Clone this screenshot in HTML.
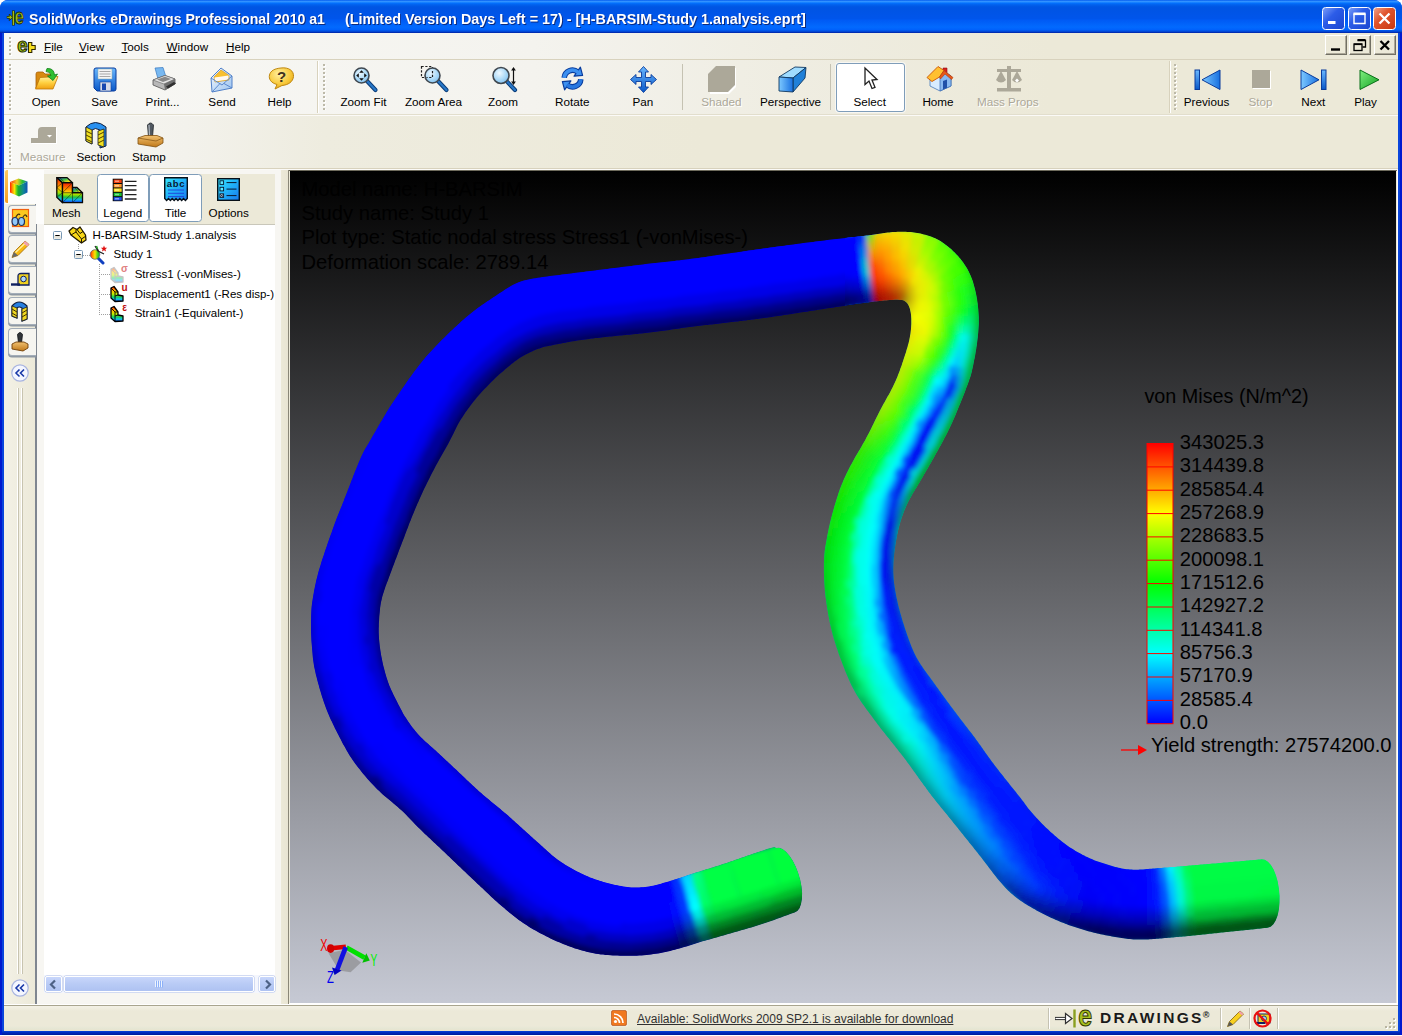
<!DOCTYPE html>
<html><head><meta charset="utf-8"><title>eDrawings</title>
<style>
html,body{margin:0;padding:0}
body{width:1402px;height:1036px;overflow:hidden;position:relative;background:#fff;font-family:"Liberation Sans",sans-serif;font-size:11.7px;color:#000}
.a{position:absolute}
svg{position:absolute;overflow:visible}
#frame{position:absolute;left:0;top:0;width:1402px;height:1035px;border-radius:8px 8px 0 0;background:linear-gradient(#0a45dc 0,#0a45dc 1031px,#0030c8 1032px,#001898 1035px)}
#frameL{position:absolute;left:0;top:20px;width:2px;height:1015px;background:#0019cf}#frameR{position:absolute;left:1400px;top:20px;width:2px;height:1015px;background:#0019cf}
#titlebar{position:absolute;left:0;top:0;width:1402px;height:33px;border-radius:8px 8px 0 0;background:linear-gradient(#0058ee 0%,#3593ff 4%,#288eff 6%,#127dff 8%,#036ffc 10%,#0262ee 14%,#0057e5 20%,#0054e3 24%,#0055eb 56%,#005bf5 62%,#026afe 82%,#0061fc 90%,#0144d0 96%,#001ea0 100%)}
#title{position:absolute;left:28.5px;top:10px;font-weight:bold;font-size:15px;line-height:17px;color:#fff;white-space:nowrap;text-shadow:1px 1px 0 #0a2a80}
#title span{display:inline-block;transform-origin:0 50%}
.tb{top:7px;width:23px;height:23px;box-sizing:border-box;border:1px solid #fff;border-radius:3.5px}
#client{position:absolute;left:4px;top:33px;width:1394px;height:998px;background:#ece9d8}
.lbl{position:absolute;white-space:nowrap;transform:translateX(-50%);line-height:14px}
.dis{color:#aca899}
.grip{position:absolute;width:3px;background-image:linear-gradient(#bcb9a8 50%,transparent 50%),linear-gradient(#fff 50%,transparent 50%);background-size:2px 4px,2px 4px;background-position:0 0,1px 1px;background-repeat:repeat-y}
u{text-decoration:underline}
</style></head><body>
<div id="frame"></div><div id="frameL"></div><div id="frameR"></div>
<div id="titlebar">
<svg class="a" style="left:6px;top:9px" width="20" height="18" viewBox="0 0 20 18"><path d="M0.8,8.3H5" stroke="#1a2400" stroke-width="2.6"/><path d="M3.3,5L6.5,8.3L3.3,11.6Z" fill="#a4c018" stroke="#1a2400" stroke-width="0.8"/><path d="M1.2,8.3H4.5" stroke="#a4c018" stroke-width="1.2"/><path d="M7.4,1.5V16.5" stroke="#1a2400" stroke-width="2.8"/><path d="M7.4,2V16" stroke="#a4c018" stroke-width="1.4"/><text transform="translate(8.6,15.3) scale(0.760,1)" font-family="Liberation Sans, sans-serif" font-weight="bold" font-size="22.5" fill="#a4c018" stroke="#1a2400" stroke-width="0.9">e</text></svg>
<div class="a tb" style="left:1322px;background:linear-gradient(135deg,#7a9cf8 0%,#2c5ce8 40%,#1c46d0 100%)"><svg width="21" height="21" viewBox="0 0 21 21"><rect x="5" y="13" width="7.5" height="3" fill="#fff"/></svg></div>
<div class="a tb" style="left:1348px;background:linear-gradient(135deg,#7a9cf8 0%,#2c5ce8 40%,#1c46d0 100%)"><svg width="21" height="21" viewBox="0 0 21 21"><path d="M5,6.2H16V15.5H5Z" fill="none" stroke="#fff" stroke-width="1.4"/><path d="M4.5,5.8H16.5" stroke="#fff" stroke-width="2.6"/></svg></div>
<div class="a tb" style="left:1373px;background:linear-gradient(135deg,#f0a088 0%,#e0542c 40%,#c83810 100%)"><svg width="21" height="21" viewBox="0 0 21 21"><path d="M5.5,5.5L15.5,15.5M15.5,5.5L5.5,15.5" stroke="#fff" stroke-width="2.3"/></svg></div>

<div id="title"><span style="transform:scaleX(0.94)">SolidWorks eDrawings Professional 2010 a1</span><span style="position:absolute;left:316px;transform:scaleX(0.959)">(Limited Version Days Left = 17) - [H-BARSIM-Study 1.analysis.eprt]</span></div></div>
<div id="client">
<svg width="0" height="0" style="position:absolute"><defs>
<linearGradient id="gFold" x1="0" y1="0" x2="0" y2="1"><stop offset="0" stop-color="#fff3a0"/><stop offset="0.5" stop-color="#ffd040"/><stop offset="1" stop-color="#f0a010"/></linearGradient>
<linearGradient id="gBlue" x1="0" y1="0" x2="0" y2="1"><stop offset="0" stop-color="#6ab8ff"/><stop offset="1" stop-color="#0a58c8"/></linearGradient>
<linearGradient id="gBlueH" x1="0" y1="0" x2="1" y2="0"><stop offset="0" stop-color="#7cc8ff"/><stop offset="1" stop-color="#1870e0"/></linearGradient>
<radialGradient id="gLens" cx="0.4" cy="0.35" r="0.7"><stop offset="0" stop-color="#eef8ff"/><stop offset="0.55" stop-color="#b0dcf8"/><stop offset="1" stop-color="#80c0f0"/></radialGradient>
<radialGradient id="gHelp" cx="0.4" cy="0.3" r="0.8"><stop offset="0" stop-color="#fff0a0"/><stop offset="0.6" stop-color="#f8c838"/><stop offset="1" stop-color="#d89810"/></radialGradient>
<linearGradient id="gGreen" x1="0" y1="0" x2="1" y2="1"><stop offset="0" stop-color="#80f080"/><stop offset="1" stop-color="#10a020"/></linearGradient>
<linearGradient id="gEnv" x1="0" y1="0" x2="1" y2="1"><stop offset="0" stop-color="#f4f9ff"/><stop offset="1" stop-color="#9cc4f0"/></linearGradient>
<linearGradient id="gWood" x1="0" y1="0" x2="0" y2="1"><stop offset="0" stop-color="#f0c070"/><stop offset="1" stop-color="#c07818"/></linearGradient>
<linearGradient id="gRain" x1="0" y1="0" x2="0" y2="1"><stop offset="0" stop-color="#ff2000"/><stop offset="0.3" stop-color="#ffc000"/><stop offset="0.5" stop-color="#c0f000"/><stop offset="0.7" stop-color="#10d060"/><stop offset="0.85" stop-color="#10c0f0"/><stop offset="1" stop-color="#1040e0"/></linearGradient>
<linearGradient id="gRainH" x1="0" y1="0" x2="1" y2="0"><stop offset="0" stop-color="#ff2000"/><stop offset="0.25" stop-color="#ff9000"/><stop offset="0.5" stop-color="#f8e800"/><stop offset="0.8" stop-color="#40c820"/><stop offset="1" stop-color="#10a040"/></linearGradient>
<linearGradient id="gTop" x1="0" y1="0" x2="1" y2="1"><stop offset="0" stop-color="#2040e0"/><stop offset="0.45" stop-color="#40c040"/><stop offset="0.75" stop-color="#f0e020"/><stop offset="1" stop-color="#f07010"/></linearGradient>
<linearGradient id="gRainH2" x1="0" y1="0" x2="1" y2="0"><stop offset="0" stop-color="#ff3010"/><stop offset="0.4" stop-color="#f0d020"/><stop offset="0.7" stop-color="#30c030"/><stop offset="1" stop-color="#1080a0"/></linearGradient>
<linearGradient id="gTeal" x1="0" y1="0" x2="1" y2="0"><stop offset="0" stop-color="#18a838"/><stop offset="0.5" stop-color="#108890"/><stop offset="1" stop-color="#1050b8"/></linearGradient>
<linearGradient id="gMesh" x1="0" y1="0" x2="0" y2="1"><stop offset="0" stop-color="#f02000"/><stop offset="0.25" stop-color="#ff7000"/><stop offset="0.45" stop-color="#ffc800"/><stop offset="0.6" stop-color="#a0e000"/><stop offset="0.72" stop-color="#20c040"/><stop offset="0.86" stop-color="#10b0f0"/><stop offset="1" stop-color="#1030e0"/></linearGradient>
<linearGradient id="gCy" x1="0" y1="0" x2="1" y2="1"><stop offset="0" stop-color="#38e8ff"/><stop offset="0.5" stop-color="#20b0f8"/><stop offset="1" stop-color="#1878f0"/></linearGradient>
</defs></svg>
<div class="a" style="left:0;top:0;width:1394px;height:26px;background:linear-gradient(90deg,#f8f8f5 0%,#f4f3ee 38%,#efede2 56%,#ece9d8 75%)"></div>
<div class="a" style="left:0;top:26px;width:1394px;height:1px;background:#d8d2bd"></div>
<div class="grip" style="left:5px;top:4px;height:20px"></div>
<svg class="a" style="left:13px;top:5px" width="20" height="16" viewBox="0 0 20 16" ><path d="M11.500,4.500h3.300v3h3.400v4h-3.400v3h-3.300z" fill="#f8e020" stroke="#302800" stroke-width="1.100"/><text transform="translate(0.300,14) scale(0.900,1)" font-family="Liberation Sans, sans-serif" font-weight="bold" font-size="21" fill="#a8c818" stroke="#202800" stroke-width="1.100">e</text></svg>
<div class="a" style="left:40px;top:6.5px;line-height:14px;white-space:nowrap"><u>F</u>ile</div>
<div class="a" style="left:75px;top:6.5px;line-height:14px;white-space:nowrap"><u>V</u>iew</div>
<div class="a" style="left:117.5px;top:6.5px;line-height:14px;white-space:nowrap"><u>T</u>ools</div>
<div class="a" style="left:162.5px;top:6.5px;line-height:14px;white-space:nowrap"><u>W</u>indow</div>
<div class="a" style="left:222px;top:6.5px;line-height:14px;white-space:nowrap"><u>H</u>elp</div>
<div class="a" style="left:1321px;top:2px;width:22px;height:20px;box-sizing:border-box;background:#ece9d8;border:1px solid;border-color:#fff #716f64 #716f64 #fff;box-shadow:inset -1px -1px 0 #aca899"><svg width="20" height="18" viewBox="1 1 20 18"><path d="M6,14.500h9" stroke="#000" stroke-width="2.400"/></svg></div>
<div class="a" style="left:1345px;top:2px;width:22px;height:20px;box-sizing:border-box;background:#ece9d8;border:1px solid;border-color:#fff #716f64 #716f64 #fff;box-shadow:inset -1px -1px 0 #aca899"><svg width="20" height="18" viewBox="1 1 20 18"><path d="M8.500,5.500h8v6.500h-3" fill="none" stroke="#000" stroke-width="1.300"/><path d="M8.500,4.800h8" stroke="#000" stroke-width="1.600"/><rect x="5" y="9" width="8" height="6.500" fill="#ece9d8" stroke="#000" stroke-width="1.300"/><path d="M5,9.300h8" stroke="#000" stroke-width="1.600"/></svg></div>
<div class="a" style="left:1370px;top:2px;width:22px;height:20px;box-sizing:border-box;background:#ece9d8;border:1px solid;border-color:#fff #716f64 #716f64 #fff;box-shadow:inset -1px -1px 0 #aca899"><svg width="20" height="18" viewBox="1 1 20 18"><path d="M6.500,6l8.500,8.500M15,6l-8.500,8.500" stroke="#000" stroke-width="2.300"/></svg></div>
<div class="a" style="left:0;top:27px;width:1394px;height:54px;background:linear-gradient(90deg,#f8f8f5 0%,#f4f3ee 38%,#efede2 56%,#ece9d8 75%)"></div>
<div class="a" style="left:0;top:81px;width:1394px;height:1px;background:#e2decd"></div><div class="a" style="left:0;top:82px;width:1394px;height:1px;background:#fbfaf7"></div>
<div class="grip" style="left:5px;top:31px;height:46px"></div>
<div class="grip" style="left:319px;top:31px;height:46px"></div>
<div class="grip" style="left:1170px;top:31px;height:46px"></div>
<div class="a" style="left:313px;top:28px;width:1px;height:52px;background:#d8d2bd"></div><div class="a" style="left:314px;top:28px;width:1px;height:52px;background:#fff"></div>
<div class="a" style="left:1165px;top:28px;width:1px;height:52px;background:#d8d2bd"></div><div class="a" style="left:1166px;top:28px;width:1px;height:52px;background:#fff"></div>
<div class="a" style="left:678px;top:31px;width:1px;height:46px;background:#c5c2b2"></div>
<div class="a" style="left:826px;top:31px;width:1px;height:46px;background:#c5c2b2"></div>
<div class="a" style="left:832px;top:30px;width:69px;height:49px;box-sizing:border-box;background:#fff;border:1px solid #7f9db9;border-radius:3px;box-shadow:0 0 0 1px rgba(255,255,255,0.6)"></div>
<svg class="a" style="left:30px;top:34px" width="25" height="24" viewBox="0 0 25 24" ><path d="M2,21 L2,7 Q2,5 4,5 L9,5 L11,7 L19,7 Q20,7 20,9 L20,11 L6,11 Z" fill="#d88a10" stroke="#a86008" stroke-width="0.8"/>
<path d="M1.5,22 L6,10.5 L24,9.5 L19,22 Z" fill="url(#gFold)" stroke="#c07808" stroke-width="0.8"/>
<path d="M13,1.5 Q20,1 20.5,8 L23.5,7 L19,13.5 L13.5,9 L17,8.5 Q16.5,4.5 12,4.5 Z" fill="#30c030" stroke="#108018" stroke-width="0.8"/></svg>
<div class="lbl" style="left:42px;top:62px">Open</div>
<svg class="a" style="left:89px;top:34px" width="24" height="25" viewBox="0 0 24 25" ><path d="M1,3 Q1,1 3,1 L21,1 Q23,1 23,3 L23,22 Q23,24 21,24 L4,24 L1,21 Z" fill="url(#gBlue)" stroke="#0a3c9c" stroke-width="1"/>
<rect x="5" y="2" width="14" height="10" fill="#f4f4f4" stroke="#8aa" stroke-width="0.5"/>
<path d="M6.5,4.5H17.5M6.5,7H17.5M6.5,9.5H17.5" stroke="#a8a8a8" stroke-width="1"/>
<rect x="7" y="15" width="11" height="9" fill="#d8dce8" stroke="#0a3c9c" stroke-width="0.6"/><rect x="9" y="16.5" width="4" height="6.5" fill="#1848b0"/></svg>
<div class="lbl" style="left:100.5px;top:62px">Save</div>
<svg class="a" style="left:148px;top:34px" width="25" height="25" viewBox="0 0 25 25" ><path d="M3,1 L11,0.5 L14,10 L6,12 Z" fill="#78b8f0" stroke="#3878c0" stroke-width="0.7"/>
<path d="M1,13 L13,8.5 L23,12 L23,17 L13,23 L1,18 Z" fill="#b8b8b8" stroke="#505050" stroke-width="0.8"/>
<path d="M1,13 L13,8.5 L23,12 L12,17 Z" fill="#e4e4e4" stroke="#606060" stroke-width="0.6"/>
<path d="M12,17 L23,12 L23,17 L13,23 Z" fill="#707070"/>
<path d="M14,19.5 L22,15 L24,16.5 L16,21.5 Z" fill="#303030"/>
<path d="M5,12.5 L13,9.8 L19,12 L11,15 Z" fill="#888"/></svg>
<div class="lbl" style="left:158.5px;top:62px">Print...</div>
<svg class="a" style="left:206px;top:34px" width="24" height="26" viewBox="0 0 24 26" ><path d="M1,11 L11,1 L22,9 L22,21 L2,25 Z" fill="url(#gEnv)" stroke="#5080c8" stroke-width="1"/>
<path d="M4,10 L11,3 L19,8.5 L19,13 L5,15 Z" fill="#f8c030" stroke="#d09010" stroke-width="0.6"/>
<path d="M4.5,10.5 L18.5,8.5 L18.5,12.5 L5,14.5 Z" fill="#fff8f0"/>
<path d="M1,11 L12,18 L22,9 M2,25 L10,16.5 M22,21 L14,16.5" fill="none" stroke="#5080c8" stroke-width="0.9"/></svg>
<div class="lbl" style="left:218px;top:62px">Send</div>
<svg class="a" style="left:264px;top:34px" width="27" height="23" viewBox="0 0 27 23" ><path d="M13,1 C21,0 26,4 25.5,9.5 C25,15 20,18 14,18.5 L7,22 L9,17.5 C3,16 0.5,12 1.5,8 C2.5,3.5 7,1.5 13,1 Z" fill="url(#gHelp)" stroke="#c08810" stroke-width="1"/>
<text x="13.5" y="15" font-family="Liberation Sans, sans-serif" font-weight="bold" font-size="15" text-anchor="middle" fill="#403020">?</text></svg>
<div class="lbl" style="left:275.5px;top:62px">Help</div>
<svg class="a" style="left:347px;top:32px" width="28" height="28" viewBox="0 0 28 28" ><path d="M15.8,15.8L24.5,25" stroke="#0a3c78" stroke-width="4.2" stroke-linecap="round"/><path d="M15.8,15.8L24.5,25" stroke="#2878c8" stroke-width="2.2" stroke-linecap="round"/><circle cx="10.5" cy="10.5" r="7.5" fill="url(#gLens)" stroke="#404850" stroke-width="1.6"/><path d="M10.5,5.2l-2.3,2.6h4.6zM10.5,15.8l-2.3,-2.6h4.6zM5.2,10.5l2.6,-2.3v4.6zM15.8,10.5l-2.6,-2.3v4.6z" fill="#101010"/></svg>
<div class="lbl" style="left:359.5px;top:62px">Zoom Fit</div>
<svg class="a" style="left:416px;top:32px" width="29" height="28" viewBox="0 0 29 28" ><path d="M1.5,1.5H12.5V12.5H1.5Z" fill="none" stroke="#202020" stroke-width="1.2" stroke-dasharray="2.2,1.6"/><path d="M17.8,15.8L26.5,25" stroke="#0a3c78" stroke-width="4.2" stroke-linecap="round"/><path d="M17.8,15.8L26.5,25" stroke="#2878c8" stroke-width="2.2" stroke-linecap="round"/><circle cx="12.5" cy="10.5" r="7.5" fill="url(#gLens)" stroke="#404850" stroke-width="1.6"/><path d="M12.5,6V12.5H6.5" fill="none" stroke="#202020" stroke-width="1.2" stroke-dasharray="2.2,1.6"/></svg>
<div class="lbl" style="left:429.5px;top:62px">Zoom Area</div>
<svg class="a" style="left:486px;top:32px" width="28" height="28" viewBox="0 0 28 28" ><path d="M16.6,16.1L25,25" stroke="#0a3c78" stroke-width="4.2" stroke-linecap="round"/><path d="M16.6,16.1L25,25" stroke="#2878c8" stroke-width="2.2" stroke-linecap="round"/><circle cx="11" cy="10.5" r="8" fill="url(#gLens)" stroke="#404850" stroke-width="1.6"/><path d="M23.5,4V18" stroke="#101010" stroke-width="1.2"/><path d="M23.5,2l-2.4,3.4h4.8zM23.5,20l-2.4,-3.4h4.8z" fill="#101010"/></svg>
<div class="lbl" style="left:499px;top:62px">Zoom</div>
<svg class="a" style="left:555px;top:33px" width="28" height="26" viewBox="0 0 28 26" ><g fill="none" stroke-linecap="butt"><path d="M5.2,11.8A8.3,8.3 0 0 1 18.8,6.1" stroke="#0a3c9c" stroke-width="5.600"/><path d="M21.8,13.2A8.3,8.3 0 0 1 8.2,18.9" stroke="#0a3c9c" stroke-width="5.600"/></g>
<path d="M21.4,1.2L23.6,9.4L15.1,10.2ZM5.6,23.8L3.4,15.6L11.9,14.8Z" fill="#3c90f0" stroke="#0a3c9c" stroke-width="1.200" stroke-linejoin="round"/>
<g fill="none"><path d="M5.2,11.9A8.3,8.3 0 0 1 19.1,6.3" stroke="#3c90f0" stroke-width="3.600"/><path d="M21.8,13.1A8.3,8.3 0 0 1 7.9,18.7" stroke="#2878e0" stroke-width="3.600"/></g></svg>
<div class="lbl" style="left:568.3px;top:62px">Rotate</div>
<svg class="a" style="left:626px;top:33px" width="28" height="28" viewBox="0 0 28 28" ><path d="M13.500,0.500 L18.500,6 L15.500,6 L15.500,11.500 L21,11.500 L21,8.500 L26.500,13.500 L21,18.500 L21,15.500 L15.500,15.500 L15.500,21 L18.500,21 L13.500,26.500 L8.500,21 L11.500,21 L11.500,15.500 L6,15.500 L6,18.500 L0.500,13.500 L6,8.500 L6,11.500 L11.500,11.500 L11.500,6 L8.500,6 Z" fill="url(#gBlue)" stroke="#0a3c9c" stroke-width="0.9"/></svg>
<div class="lbl" style="left:638.8px;top:62px">Pan</div>
<svg class="a" style="left:704px;top:33px" width="28" height="28" viewBox="0 0 28 28" ><path d="M8,1 L27,1 L27,20 L20,27 L1,27 L1,8 Z" fill="#fff" transform="translate(1,1)"/><path d="M8,0 L27,0 L27,19 L20,26 L0,26 L0,8 Z" fill="#aca899"/></svg>
<div class="lbl dis" style="left:717.3px;top:62px;text-shadow:1px 1px 0 #fff">Shaded</div>
<svg class="a" style="left:774px;top:33px" width="29" height="28" viewBox="0 0 29 28" ><path d="M1,11 L17,1 L28,1.500 L15,12 Z" fill="#a0dcff" stroke="#103860" stroke-width="0.9"/>
<path d="M15,12 L28,1.500 L27,12 L15,26 Z" fill="#2080d8" stroke="#103860" stroke-width="0.9"/>
<path d="M1,11 L15,12 L15,26 L1,25 Z" fill="url(#gBlueH)" stroke="#103860" stroke-width="0.9"/></svg>
<div class="lbl" style="left:786.5px;top:62px">Perspective</div>
<svg class="a" style="left:858px;top:33px" width="16" height="25" viewBox="0 0 16 25" ><path d="M3,2 L3,18.500 L7,15 L10,22.500 L13,21.300 L10,14 L15,13.500 Z" fill="#fff" stroke="#202020" stroke-width="1.3" stroke-linejoin="miter"/></svg>
<div class="lbl" style="left:865.7px;top:62px">Select</div>
<svg class="a" style="left:922px;top:32px" width="28" height="27" viewBox="0 0 28 27" ><path d="M17,3 h4 v7 h-4z" fill="#d82020" stroke="#901010" stroke-width="0.6"/>
<path d="M4,12 L4,21 L14,26 L25,21 L25,11 L14,4 Z" fill="#d8ecff" stroke="#4878b8" stroke-width="0.8"/>
<path d="M14,26 L25,21 L25,11 L19,7 L14,12 Z" fill="#88b8f0" stroke="#3868b0" stroke-width="0.7"/>
<path d="M17,24.500 L17,16 L21,14.500 L21,22.800 Z" fill="#2050a8"/>
<path d="M1,12.500 L12,1.500 L18,5.500 L13.500,12 L6,16.500 Z" fill="#ffc030" stroke="#d06010" stroke-width="1"/>
<path d="M13.500,12 L18,5.500 L27,12.500 L25.500,14.500 L19,9 L14.500,14 Z" fill="#e85818" stroke="#b03808" stroke-width="0.6"/></svg>
<div class="lbl" style="left:934px;top:62px">Home</div>
<svg class="a" style="left:991px;top:33px" width="28" height="26" viewBox="0 0 28 26" ><g fill="#aca899"><rect x="12" y="0" width="4" height="24"/><rect x="2" y="3" width="24" height="3"/><rect x="2" y="22" width="24" height="3.500"/>
<path d="M6,5 L1,14 Q6,19 11,14 Z"/><path d="M22,5 L17,14 Q22,19 27,14 Z"/></g><path d="M22,12.500l2,2l-2,2l-2,-2z" fill="#fff"/></svg>
<div class="lbl dis" style="left:1003.8px;top:62px;text-shadow:1px 1px 0 #fff">Mass Props</div>
<svg class="a" style="left:1190px;top:36px" width="27" height="22" viewBox="0 0 27 22" ><rect x="1" y="1" width="4.500" height="19.500" fill="url(#gBlue)" stroke="#0a3c9c" stroke-width="1"/><path d="M26,1 L26,20.500 L8,10.800 Z" fill="url(#gBlueH)" stroke="#0a3c9c" stroke-width="1"/></svg>
<div class="lbl" style="left:1202.5px;top:62px">Previous</div>
<svg class="a" style="left:1248px;top:37px" width="19" height="19" viewBox="0 0 19 19" ><rect x="1" y="1" width="18" height="18" fill="#fff"/><rect x="0" y="0" width="18" height="18" fill="#aca899"/></svg>
<div class="lbl dis" style="left:1256.5px;top:62px;text-shadow:1px 1px 0 #fff">Stop</div>
<svg class="a" style="left:1296px;top:36px" width="27" height="22" viewBox="0 0 27 22" ><rect x="21.500" y="1" width="4.500" height="19.500" fill="url(#gBlue)" stroke="#0a3c9c" stroke-width="1"/><path d="M1,1 L1,20.500 L19,10.800 Z" fill="url(#gBlueH)" stroke="#0a3c9c" stroke-width="1"/></svg>
<div class="lbl" style="left:1309.3px;top:62px">Next</div>
<svg class="a" style="left:1355px;top:36px" width="21" height="22" viewBox="0 0 21 22" ><path d="M1,1 L1,20.500 L20,10.800 Z" fill="url(#gGreen)" stroke="#087018" stroke-width="1"/></svg>
<div class="lbl" style="left:1361.5px;top:62px">Play</div>
<div class="a" style="left:0;top:83px;width:1394px;height:53px;background:linear-gradient(90deg,#f8f8f5 0%,#f3f2ec 13%,#eeecdf 23%,#ece9d8 50%)"></div>
<div class="a" style="left:0;top:135px;width:1394px;height:1px;background:#d8d2bd"></div><div class="a" style="left:0;top:136px;width:1394px;height:1px;background:#fbfaf7"></div>
<div class="grip" style="left:5px;top:86px;height:46px"></div>
<svg class="a" style="left:26px;top:92px" width="28" height="20" viewBox="0 0 28 20" ><path d="M1,13 L8,13 L8,6 Q8,2 12,2 L26,2 L26,18 L1,18 Z" fill="#fff" transform="translate(1,1)"/><path d="M1,13 L8,13 L8,6 Q8,2 12,2 L26,2 L26,18 L1,18 Z" fill="#aca899"/><path d="M17,10h5l-2.500,2.500z" fill="#fff"/></svg>
<div class="lbl dis" style="left:38.7px;top:117px;text-shadow:1px 1px 0 #fff">Measure</div>
<svg class="a" style="left:81px;top:88px" width="23" height="28" viewBox="0 0 23 28" ><path d="M1,6 Q10,-3 21,6 L21,25 L15,27 L15,9 Q10,6 7,9 L7,23 L1,20 Z" fill="#2890f0" stroke="#102040" stroke-width="1"/>
<path d="M1,6 L7,9 L7,23 L1,20 Z" fill="#f0e020" stroke="#202020" stroke-width="0.8"/><path d="M13,10 L19,8 L19,26 L13,24 Z" fill="#f0e020" stroke="#202020" stroke-width="0.8"/>
<path d="M1,10l6,3M1,14l6,3M1,18l6,3M13,14l6,-3M13,18l6,-3M13,22l6,-3" stroke="#504000" stroke-width="1"/></svg>
<div class="lbl" style="left:92px;top:117px">Section</div>
<svg class="a" style="left:133px;top:89px" width="27" height="26" viewBox="0 0 27 26" ><path d="M10.500,3 Q13.500,-1 16.500,3 L15.500,15 L11.500,15 Z" fill="#505860" stroke="#202428" stroke-width="0.8"/><path d="M12,3 L12.500,14" stroke="#b0b8c0" stroke-width="1.2"/>
<path d="M1,16 L8,13.500 L20,13.500 L26,16 L26,21 L19,25 L1,22 Z" fill="url(#gWood)" stroke="#805010" stroke-width="0.8"/><path d="M1,16 L19,19 L26,16" fill="none" stroke="#805010" stroke-width="0.7"/></svg>
<div class="lbl" style="left:144.8px;top:117px">Stamp</div>
<div class="a" style="left:0px;top:137px;width:285px;height:834px;background:#ece9d8"></div>
<div class="a" style="left:0px;top:137px;width:32px;height:834px;background:linear-gradient(90deg,#f3f1e6,#ece9d8)"></div>
<div class="a" style="left:32px;top:137px;width:245px;height:834px;background:#f7f6f2"></div>
<div class="a" style="left:31px;top:171px;width:1.5px;height:800px;background:#7f8690"></div>
<div class="a" style="left:32px;top:137px;width:8px;height:54px;background:#fdfdfc"></div>
<div class="a" style="left:1px;top:137px;width:32px;height:34px;background:#fdfdfc"></div>
<div class="a" style="left:1px;top:137px;width:2.5px;height:33px;background:linear-gradient(#ffc860,#f8a020);border-radius:2px 0 0 2px"></div>
<div class="a" style="left:3.5px;top:171.5px;width:28px;height:28px;box-sizing:border-box;background:#f6f5f0;border:1.5px solid #a3adb8;border-right:none;border-radius:4px 0 0 4px;box-shadow:0 1.5px 0 #8e98a3"></div>
<div class="a" style="left:3.5px;top:202.4px;width:28px;height:28px;box-sizing:border-box;background:#f6f5f0;border:1.5px solid #a3adb8;border-right:none;border-radius:4px 0 0 4px;box-shadow:0 1.5px 0 #8e98a3"></div>
<div class="a" style="left:3.5px;top:233.3px;width:28px;height:28px;box-sizing:border-box;background:#f6f5f0;border:1.5px solid #a3adb8;border-right:none;border-radius:4px 0 0 4px;box-shadow:0 1.5px 0 #8e98a3"></div>
<div class="a" style="left:3.5px;top:264.2px;width:28px;height:28px;box-sizing:border-box;background:#f6f5f0;border:1.5px solid #a3adb8;border-right:none;border-radius:4px 0 0 4px;box-shadow:0 1.5px 0 #8e98a3"></div>
<div class="a" style="left:3.5px;top:295.1px;width:28px;height:28px;box-sizing:border-box;background:#f6f5f0;border:1.5px solid #a3adb8;border-right:none;border-radius:4px 0 0 4px;box-shadow:0 1.5px 0 #8e98a3"></div>
<svg class="a" style="left:6px;top:145px" width="18" height="19" viewBox="0 0 18 19" ><path d="M0,4 L8.5,0.5 L17.5,3.5 L9,7.5 Z" fill="url(#gRainH2)"/><path d="M0,4 L9,7.5 L9,18.5 L0,14.5 Z" fill="url(#gRainH)"/><path d="M9,7.5 L17.5,3.5 L17.5,14.5 L9,18.5 Z" fill="url(#gTeal)"/></svg>
<svg class="a" style="left:8px;top:176px" width="17" height="18" viewBox="0 0 17 18" ><rect x="0.5" y="0.5" width="16" height="17" fill="#fcc820" stroke="#f06010" stroke-width="1.2"/><path d="M3,10 Q6,3 8,6 M10,10 Q13,3 15,8" fill="none" stroke="#403010" stroke-width="1.2"/><ellipse cx="3" cy="12.5" rx="3" ry="4" fill="#90c8f8" stroke="#203060" stroke-width="1.2"/><ellipse cx="9.5" cy="12.5" rx="3" ry="4" fill="#90c8f8" stroke="#203060" stroke-width="1.2"/></svg>
<svg class="a" style="left:6px;top:206px" width="20" height="20" viewBox="0 0 20 20" ><path d="M2,18.5 L4,13 L15,2 L19,5.5 L8,16.5 Z" fill="#f8b810" stroke="#a06808" stroke-width="0.8"/><path d="M5.5,13.5 L16,3.5" stroke="#fff0a0" stroke-width="1.3"/><path d="M15,2 L19,5.5 L17,7.5 L13.2,3.8 Z" fill="#f0a0b0"/><path d="M2,18.5 L4,13 L8,16.5 Z" fill="#686868"/></svg>
<svg class="a" style="left:7px;top:240px" width="19" height="15" viewBox="0 0 19 15" ><path d="M7,3 Q7,0.5 10,0.5 L18,0.5 L18,12 L7,12 Z" fill="#f0d020" stroke="#102060" stroke-width="1.3"/><path d="M0,11.5 H9" stroke="#102060" stroke-width="2.4"/><circle cx="12.5" cy="6" r="2.8" fill="#b0d8f8" stroke="#102060" stroke-width="1"/></svg>
<svg class="a" style="left:7px;top:268px" width="18" height="21" viewBox="0 0 18 21" ><path d="M1,5 Q8,-3 16,5 L16,18 L11,20 L11,7 Q8,5 6,7 L6,17 L1,15 Z" fill="#2880e0" stroke="#102040" stroke-width="1.2"/><path d="M1,5 L6,7 L6,17 L1,15 Z M11,8 L16,6 L16,18 L11,20Z" fill="#f0d820" stroke="#202020" stroke-width="0.8"/><path d="M1,8l5,3M1,12l5,3M11,12l5,-3M11,16l5,-3" stroke="#403000" stroke-width="1"/></svg>
<svg class="a" style="left:7px;top:299px" width="18" height="20" viewBox="0 0 18 20" ><path d="M6.5,2.5 Q9,-1.5 11.5,2.5 L10.5,11 L7.5,11 Z" fill="#303438" stroke="#101418" stroke-width="0.8"/><path d="M1,12 L5,10 L13,10 L17,12 L17,16 L12,19 L1,17 Z" fill="url(#gWood)" stroke="#704008" stroke-width="0.9"/></svg>
<svg class="a" style="left:7px;top:330.5px" width="18" height="18" viewBox="0 0 18 18" ><circle cx="9" cy="9" r="8.2" fill="#f4f6ff" stroke="#a8b4e0" stroke-width="1.2"/><path d="M8.5,5.5L5,9l3.5,3.5M13,5.5L9.5,9l3.5,3.5" fill="none" stroke="#1838a8" stroke-width="1.6"/></svg>
<svg class="a" style="left:7px;top:946px" width="18" height="18" viewBox="0 0 18 18" ><circle cx="9" cy="9" r="8.2" fill="#f4f6ff" stroke="#a8b4e0" stroke-width="1.2"/><path d="M8.5,5.5L5,9l3.5,3.5M13,5.5L9.5,9l3.5,3.5" fill="none" stroke="#1838a8" stroke-width="1.6"/></svg>
<div class="a" style="left:13px;top:355px;width:1px;height:586px;background:#fff"></div>
<div class="a" style="left:14px;top:355px;width:1px;height:586px;background:#c8c4b0"></div>
<div class="a" style="left:17px;top:355px;width:1px;height:586px;background:#fff"></div>
<div class="a" style="left:18px;top:355px;width:1px;height:586px;background:#c8c4b0"></div>
<div class="a" style="left:39.5px;top:141px;width:231.5px;height:50px;background:#ece9d8"></div>
<div class="a" style="left:277px;top:137px;width:8px;height:834px;background:linear-gradient(90deg,#ece9d8,#e8e4d2)"></div>
<div class="a" style="left:284px;top:137px;width:1px;height:834px;background:#8a8778"></div>
<div class="a" style="left:92.5px;top:140.8px;width:52.3px;height:47.8px;box-sizing:border-box;background:#fff;border:1px solid #7f9db9;border-radius:3.5px"></div>
<div class="a" style="left:145.3px;top:140.8px;width:52.3px;height:47.8px;box-sizing:border-box;background:#fff;border:1px solid #7f9db9;border-radius:3.5px"></div>
<svg class="a" style="left:52px;top:144px" width="28" height="27" viewBox="0 0 28 27" ><g stroke="#080808" stroke-width="1.3" stroke-linejoin="round"><path d="M0.8,0.6 L6.5,5.7 L6.5,25.7 L0.8,20.3 Z" fill="url(#gMesh)"/>
<path d="M6.5,5.7 H16.5 V15.7 H26.5 V25.7 H6.5 Z" fill="url(#gMesh)"/>
<path d="M0.8,0.6 H11.100 L16.5,5.7 H6.5 Z" fill="url(#gTop)"/><path d="M16.5,10.3 H20.7 L26.5,15.7 H16.5 Z" fill="url(#gTop)"/></g>
<path d="M6.5,15.7 H16.5 V25.7 M6.5,15.7 L16.5,5.7 M6.5,25.7 L16.5,15.7 M16.5,25.7 L26.5,15.7 M0.8,10.5 L6.5,15.7 M0.8,10.5 L6.5,5.7 M0.8,20.3 L6.5,15.7 M3.6,0.6 l5.4,5.100 M18.5,10.3l4.5,5.4" fill="none" stroke="#101010" stroke-width="0.7" stroke-opacity="0.750"/></svg>
<svg class="a" style="left:107.5px;top:144.5px" width="26" height="24" viewBox="0 0 26 24" ><rect x="0.7" y="0.7" width="10" height="22.5" fill="#080808"/>
<rect x="1.7" y="1.6" width="8" height="3.4" fill="#f04010"/><rect x="1.7" y="6" width="8" height="3.4" fill="#ff9830"/><rect x="1.7" y="10.4" width="8" height="3.4" fill="#ffe020"/><rect x="1.7" y="14.8" width="8" height="3.4" fill="#18c038"/><rect x="1.7" y="19.2" width="8" height="3.2" fill="#2050f0"/>
<path d="M3,3.3h4M3,7.7h4M3,12.100h4M3,16.5h4M3,20.8h4" stroke="#fff" stroke-opacity="0.450" stroke-width="1.5"/>
<path d="M12.8,3.3H24.5M12.8,7.7H24.5M12.8,12H24.5M12.8,16.6H24.5M12.8,21H24.5" stroke="#202020" stroke-width="1.3"/></svg>
<svg class="a" style="left:159.5px;top:144px" width="24" height="25" viewBox="0 0 24 25" ><path d="M0.7,0.7 H23.3 V21.5 l-1.880,2 l-1.880,-2 l-1.880,2 l-1.880,-2 l-1.880,2 l-1.880,-2 l-1.880,2 l-1.880,-2 l-1.880,2 l-1.880,-2 l-1.880,2 l-1.880,-2 Z" fill="url(#gCy)" stroke="#081018" stroke-width="1.4"/><text x="12" y="9.8" font-family="Liberation Sans, sans-serif" font-weight="bold" font-size="9.5" letter-spacing="0.7" text-anchor="middle" fill="#081830">abc</text><path d="M4,13H20M4,16.3H20M4,19.6H20" stroke="#2040d8" stroke-width="0.9"/></svg>
<svg class="a" style="left:213px;top:145px" width="23" height="23" viewBox="0 0 23 23" ><rect x="0.7" y="0.7" width="21.6" height="21.6" fill="url(#gCy)" stroke="#081018" stroke-width="1.4"/><g fill="#60e8ff" stroke="#081830" stroke-width="0.9"><rect x="3" y="2.8" width="3.6" height="3.6"/><rect x="3" y="9.3" width="3.6" height="3.6"/><rect x="3" y="15.8" width="3.6" height="3.6" fill="#e8f8ff"/></g><path d="M9.5,4.6H19.5M9.5,11.100H19.5M9.5,17.6H19.5" stroke="#081830" stroke-width="1"/><path d="M3.3,16.100l3,3M6.3,16.100l-3,3" stroke="#081830" stroke-width="0.9"/></svg>
<div class="lbl" style="left:62.3px;top:173px">Mesh</div>
<div class="lbl" style="left:118.7px;top:173px">Legend</div>
<div class="lbl" style="left:171.5px;top:173px">Title</div>
<div class="lbl" style="left:224.7px;top:173px">Options</div>
<div class="a" style="left:39.5px;top:191px;width:231.5px;height:751px;background:#fff"></div>
<div class="a" style="left:39.5px;top:190.5px;width:231.5px;height:1px;background:#c9c7ba"></div>
<div class="a" style="left:74px;top:211px;width:1px;height:6px;background-image:linear-gradient(#a0a0a0 50%,transparent 50%);background-size:1px 2px"></div>
<div class="a" style="left:79px;top:221.6px;width:7px;height:1px;background-image:linear-gradient(90deg,#a0a0a0 50%,transparent 50%);background-size:2px 1px"></div>
<div class="a" style="left:94.5px;top:231px;width:1px;height:50px;background-image:linear-gradient(#a0a0a0 50%,transparent 50%);background-size:1px 2px"></div>
<div class="a" style="left:95px;top:241.2px;width:11px;height:1px;background-image:linear-gradient(90deg,#a0a0a0 50%,transparent 50%);background-size:2px 1px"></div>
<div class="a" style="left:95px;top:261px;width:11px;height:1px;background-image:linear-gradient(90deg,#a0a0a0 50%,transparent 50%);background-size:2px 1px"></div>
<div class="a" style="left:95px;top:280.8px;width:11px;height:1px;background-image:linear-gradient(90deg,#a0a0a0 50%,transparent 50%);background-size:2px 1px"></div>
<svg class="a" style="left:48.5px;top:197.5px" width="9" height="9" viewBox="0 0 9 9" ><rect x="0.5" y="0.5" width="8" height="8" rx="1" fill="#fff" stroke="#7898b5" stroke-width="1"/><rect x="1.2" y="4.5" width="6.6" height="3.3" fill="#dcd8cc" opacity="0.7"/><path d="M2.3,4.5H6.7" stroke="#000" stroke-width="1"/></svg>
<svg class="a" style="left:69.5px;top:217px" width="9" height="9" viewBox="0 0 9 9" ><rect x="0.5" y="0.5" width="8" height="8" rx="1" fill="#fff" stroke="#7898b5" stroke-width="1"/><rect x="1.2" y="4.5" width="6.6" height="3.3" fill="#dcd8cc" opacity="0.7"/><path d="M2.3,4.5H6.7" stroke="#000" stroke-width="1"/></svg>
<svg class="a" style="left:64px;top:193px" width="19" height="18" viewBox="0 0 19 18" ><path d="M1,5 L5,1.5 L9,3.5 L12,1 L17.5,9 L18,14 L13.5,17 L3,9 Z" fill="#f8d818" stroke="#201800" stroke-width="1.3" stroke-linejoin="round"/><path d="M3,9 L8,6 L13.5,13 L13.5,17 M13.5,13 L18,10 M8,6 L8,3.5 M9,3.5l3,4l3,-2" fill="none" stroke="#201800" stroke-width="1"/></svg>
<svg class="a" style="left:85px;top:212px" width="19" height="19" viewBox="0 0 19 19" ><path d="M7,11 L14,18" stroke="#1040c0" stroke-width="3" stroke-linecap="round"/><circle cx="6" cy="9.5" r="4.8" fill="url(#gRainH)" stroke="#506070" stroke-width="0.7"/><path d="M6,1 L9,6 L15,9 M8,3 L10,7" stroke="#202020" stroke-width="1.2" fill="none"/><path d="M7.5,1l1,3" stroke="#20a020" stroke-width="1.5"/><path d="M15,0.5l0.9,2.2l2.3,0.100l-1.8,1.5l0.7,2.3l-2.100,-1.3l-2,1.3l0.6,-2.3l-1.8,-1.5l2.3,-0.100z" fill="#e01010"/></svg>
<svg class="a" style="left:106px;top:231.5px" width="19" height="19" viewBox="0 0 19 19" ><g opacity="0.450"><path d="M1,4 L4,2.5 L8,8 L8,11 L13,12 L13,17 L5,17.5 L1,14 Z" fill="url(#gRain)" stroke="#808080" stroke-width="1.3" stroke-linejoin="round"/><path d="M1,4 L5,8 L5,17.5 M5,8 l3,0 M5,12l3,-1" fill="none" stroke="#808080" stroke-width="0.9"/></g><text x="14.5" y="7" font-family="Liberation Sans, sans-serif" font-weight="bold" font-size="10" text-anchor="middle" fill="#e08080">σ</text></svg>
<svg class="a" style="left:106px;top:251.3px" width="19" height="19" viewBox="0 0 19 19" ><g><path d="M1,4 L4,2.5 L8,8 L8,11 L13,12 L13,17 L5,17.5 L1,14 Z" fill="url(#gRain)" stroke="#000" stroke-width="1.3" stroke-linejoin="round"/><path d="M1,4 L5,8 L5,17.5 M5,8 l3,0 M5,12l3,-1" fill="none" stroke="#000" stroke-width="0.9"/></g><text x="14.5" y="7" font-family="Liberation Sans, sans-serif" font-weight="bold" font-size="10" text-anchor="middle" fill="#c01010">u</text></svg>
<svg class="a" style="left:106px;top:271px" width="19" height="19" viewBox="0 0 19 19" ><g><path d="M1,4 L4,2.5 L8,8 L8,11 L13,12 L13,17 L5,17.5 L1,14 Z" fill="url(#gRain)" stroke="#000" stroke-width="1.3" stroke-linejoin="round"/><path d="M1,4 L5,8 L5,17.5 M5,8 l3,0 M5,12l3,-1" fill="none" stroke="#000" stroke-width="0.9"/></g><text x="14.5" y="7" font-family="Liberation Sans, sans-serif" font-weight="bold" font-size="10" text-anchor="middle" fill="#c01010">ε</text></svg>
<div class="a" style="left:88.5px;top:194.5px;font-size:11.5px;line-height:14px;white-space:nowrap">H-BARSIM-Study 1.analysis</div>
<div class="a" style="left:109.5px;top:214.1px;font-size:11.5px;line-height:14px;white-space:nowrap">Study 1</div>
<div class="a" style="left:130.7px;top:233.7px;font-size:11.5px;line-height:14px;white-space:nowrap">Stress1 (-vonMises-)</div>
<div class="a" style="left:130.7px;top:253.5px;font-size:11.5px;line-height:14px;white-space:nowrap">Displacement1 (-Res disp-)</div>
<div class="a" style="left:130.7px;top:273.3px;font-size:11.5px;line-height:14px;white-space:nowrap">Strain1 (-Equivalent-)</div>
<div class="a" style="left:39.5px;top:942px;width:231.5px;height:17.5px;background:#f4f6fd"></div>
<div class="a" style="left:41px;top:942.5px;width:16.5px;height:16.5px;box-sizing:border-box;background:linear-gradient(#c8d6fb,#b9cbf5 50%,#aec2f2);border:1px solid #fff;border-radius:2px;box-shadow:0 0 0 0.5px #b0c0ea"></div>
<div class="a" style="left:59.5px;top:942.5px;width:190.5px;height:16.5px;box-sizing:border-box;background:linear-gradient(#c8d6fb,#b9cbf5 50%,#aec2f2);border:1px solid #fff;border-radius:2px;box-shadow:0 0 0 0.5px #b0c0ea"></div>
<div class="a" style="left:254.5px;top:942.5px;width:16.5px;height:16.5px;box-sizing:border-box;background:linear-gradient(#c8d6fb,#b9cbf5 50%,#aec2f2);border:1px solid #fff;border-radius:2px;box-shadow:0 0 0 0.5px #b0c0ea"></div>
<svg class="a" style="left:41px;top:942.5px" width="17" height="17" viewBox="0 0 17 17" ><path d="M10,4.5L6,8.5l4,4" fill="none" stroke="#4d6185" stroke-width="2.2"/></svg>
<svg class="a" style="left:254.5px;top:942.5px" width="17" height="17" viewBox="0 0 17 17" ><path d="M7,4.5L11,8.5l-4,4" fill="none" stroke="#4d6185" stroke-width="2.2"/></svg>
<svg class="a" style="left:150px;top:947px" width="10" height="8" viewBox="0 0 10 8" ><path d="M1.5,0.5V7M3.5,0.5V7M5.5,0.5V7M7.5,0.5V7" stroke="#eef4fe" stroke-width="1"/><path d="M2.5,1V7.5M4.5,1V7.5M6.5,1V7.5M8.5,1V7.5" stroke="#8cb0f8" stroke-width="1"/></svg>
<svg class="a" style="left:286px;top:138px" width="1106" height="832" viewBox="0 0 1106 832">
<defs><linearGradient id="bg" x1="0" y1="0" x2="0" y2="1"><stop offset="0" stop-color="#000"/><stop offset="0.5" stop-color="#636468"/><stop offset="1" stop-color="#c6c9d4"/></linearGradient>
<filter id="bl" x="-5%" y="-5%" width="110%" height="110%"><feGaussianBlur stdDeviation="2.6"/></filter>
<clipPath id="cl"><path d="M590.0,62.8 587.6,63.1 585.2,63.5 582.8,63.8 580.4,64.1 578.0,64.4 575.6,64.7 573.3,64.9 570.9,65.2 568.5,65.5 566.1,65.8 563.7,66.1 561.3,66.3 558.9,66.6 556.5,66.9 554.1,67.2 551.7,67.4 549.3,67.7 546.9,68.0 544.5,68.3 542.1,68.6 539.7,68.8 537.3,69.1 534.9,69.4 532.5,69.7 530.1,70.0 527.7,70.3 525.3,70.6 523.0,70.9 520.6,71.2 518.2,71.5 515.8,71.8 513.4,72.1 511.0,72.4 508.6,72.7 506.2,73.0 503.8,73.4 501.4,73.7 499.0,74.0 496.7,74.3 494.3,74.7 491.9,75.0 489.5,75.3 487.1,75.6 484.7,76.0 482.3,76.3 479.9,76.6 477.5,77.0 475.1,77.3 472.8,77.6 470.4,77.9 468.0,78.3 465.6,78.6 463.2,79.0 460.8,79.3 458.4,79.6 456.0,80.0 453.7,80.3 451.3,80.7 448.9,81.0 446.5,81.4 444.1,81.7 441.7,82.1 439.3,82.4 436.9,82.8 434.6,83.1 432.2,83.4 429.8,83.8 427.4,84.1 425.0,84.5 422.6,84.8 420.2,85.2 417.8,85.5 415.5,85.9 413.1,86.2 410.7,86.5 408.3,86.9 405.9,87.2 403.5,87.5 401.1,87.8 398.7,88.2 396.3,88.5 394.0,88.8 391.6,89.1 389.2,89.4 386.8,89.6 384.4,89.9 382.0,90.2 379.6,90.4 377.2,90.7 374.8,90.9 372.4,91.2 370.0,91.4 367.6,91.7 365.2,92.0 362.8,92.3 360.4,92.6 358.0,92.8 355.6,93.1 353.2,93.4 350.8,93.7 348.4,94.0 346.0,94.3 343.6,94.6 341.2,94.9 338.9,95.2 336.5,95.5 334.1,95.8 331.7,96.1 329.3,96.4 326.9,96.7 324.5,97.0 322.1,97.3 319.7,97.6 317.3,97.9 314.9,98.2 312.5,98.5 310.1,98.8 307.7,99.1 305.3,99.4 303.0,99.7 300.6,100.0 298.2,100.3 295.8,100.6 293.4,100.9 291.0,101.2 288.6,101.5 286.2,101.8 283.8,102.1 281.4,102.4 279.0,102.7 276.6,103.0 274.2,103.3 271.8,103.6 269.5,103.9 267.1,104.2 264.7,104.5 262.3,104.8 259.9,105.1 257.5,105.4 255.1,105.7 252.7,106.0 250.3,106.4 247.9,106.8 245.6,107.2 243.2,107.6 240.8,108.0 238.4,108.4 236.1,108.9 233.7,109.5 231.4,110.2 229.2,111.0 226.9,111.9 224.7,112.9 222.6,114.0 220.5,115.2 218.5,116.5 216.4,117.8 214.4,119.1 212.4,120.4 210.3,121.7 208.3,123.0 206.3,124.4 204.3,125.7 202.3,127.0 200.3,128.4 198.3,129.7 196.3,131.1 194.3,132.5 192.3,133.8 190.3,135.2 188.4,136.6 186.4,138.1 184.5,139.5 182.6,141.0 180.7,142.5 178.9,144.0 177.0,145.6 175.2,147.1 173.3,148.7 171.5,150.3 169.8,151.9 168.0,153.6 166.2,155.2 164.4,156.8 162.7,158.5 160.9,160.1 159.2,161.8 157.4,163.5 155.7,165.2 154.0,166.9 152.3,168.6 150.6,170.3 148.9,172.0 147.2,173.7 145.5,175.4 143.9,177.2 142.2,178.9 140.6,180.7 138.9,182.5 137.3,184.3 135.8,186.1 134.2,188.0 132.7,189.8 131.2,191.7 129.7,193.6 128.2,195.5 126.7,197.4 125.3,199.3 123.8,201.3 122.4,203.2 121.0,205.2 119.6,207.1 118.2,209.1 116.8,211.1 115.5,213.1 114.1,215.1 112.7,217.0 111.3,219.0 110.0,221.0 108.6,223.0 107.2,225.0 105.9,227.0 104.5,229.0 103.2,231.0 101.8,233.0 100.5,235.0 99.2,237.0 98.0,239.1 96.7,241.1 95.5,243.2 94.2,245.3 93.0,247.4 91.8,249.4 90.5,251.5 89.3,253.6 88.1,255.7 86.9,257.8 85.7,259.9 84.5,262.0 83.3,264.1 82.1,266.1 80.9,268.2 79.7,270.3 78.5,272.4 77.2,274.5 76.0,276.5 74.8,278.6 73.6,280.7 72.5,282.9 71.5,285.1 70.5,287.3 69.6,289.5 68.6,291.7 67.7,293.9 66.8,296.2 65.9,298.4 65.0,300.6 64.1,302.9 63.2,305.1 62.4,307.4 61.5,309.6 60.6,311.9 59.8,314.1 58.9,316.4 58.0,318.6 57.2,320.9 56.3,323.1 55.4,325.4 54.5,327.6 53.7,329.9 52.8,332.1 51.9,334.4 51.0,336.6 50.1,338.8 49.2,341.1 48.3,343.3 47.4,345.5 46.5,347.8 45.7,350.0 44.8,352.3 44.0,354.6 43.2,356.8 42.4,359.1 41.6,361.4 40.7,363.7 39.9,365.9 39.1,368.2 38.3,370.5 37.5,372.8 36.8,375.0 36.0,377.3 35.2,379.6 34.4,381.9 33.7,384.2 32.9,386.5 32.1,388.8 31.4,391.1 30.7,393.4 30.0,395.7 29.3,398.0 28.6,400.3 28.0,402.6 27.4,405.0 26.8,407.3 26.2,409.6 25.7,412.0 25.2,414.3 24.7,416.7 24.2,419.1 23.8,421.4 23.4,423.8 23.0,426.2 22.6,428.6 22.2,431.0 21.9,433.4 21.6,435.7 21.4,438.2 21.3,440.6 21.2,443.0 21.1,445.4 21.1,447.8 21.0,450.2 21.0,452.6 21.0,455.0 21.0,457.4 21.0,459.8 21.1,462.3 21.2,464.7 21.3,467.1 21.4,469.5 21.6,471.9 21.8,474.3 22.0,476.7 22.2,479.1 22.4,481.5 22.6,483.9 22.8,486.3 23.1,488.7 23.4,491.1 23.8,493.5 24.2,495.9 24.7,498.2 25.2,500.6 25.7,502.9 26.3,505.3 26.9,507.6 27.5,509.9 28.1,512.3 28.8,514.6 29.4,516.9 30.1,519.2 30.8,521.5 31.5,523.9 32.2,526.2 33.0,528.4 33.7,530.7 34.5,533.0 35.3,535.3 36.1,537.6 37.0,539.8 37.9,542.1 38.9,544.3 39.8,546.5 40.8,548.7 41.9,550.8 42.9,553.0 44.0,555.2 45.0,557.4 46.1,559.5 47.2,561.7 48.3,563.8 49.4,566.0 50.5,568.1 51.6,570.2 52.7,572.4 53.9,574.5 55.1,576.6 56.2,578.7 57.4,580.8 58.7,582.9 59.9,584.9 61.3,586.9 62.6,588.9 64.0,590.9 65.4,592.9 66.8,594.8 68.3,596.7 69.8,598.6 71.3,600.5 72.8,602.4 74.4,604.2 75.9,606.1 77.5,607.9 79.1,609.7 80.7,611.5 82.4,613.2 84.1,615.0 85.7,616.7 87.4,618.4 89.2,620.1 90.9,621.7 92.7,623.4 94.5,625.0 96.4,626.5 98.2,628.1 100.1,629.6 101.9,631.1 103.8,632.7 105.6,634.2 107.5,635.8 109.3,637.4 111.1,639.0 112.8,640.6 114.6,642.3 116.3,644.0 117.9,645.8 119.6,647.5 121.3,649.2 123.0,651.0 124.6,652.7 126.3,654.4 128.0,656.2 129.7,657.8 131.5,659.5 133.2,661.2 134.9,662.9 136.7,664.5 138.4,666.2 140.2,667.8 141.9,669.5 143.7,671.2 145.5,672.8 147.2,674.5 149.0,676.1 150.7,677.8 152.5,679.4 154.2,681.1 156.0,682.7 157.7,684.4 159.5,686.1 161.2,687.7 163.0,689.4 164.7,691.0 166.5,692.7 168.2,694.4 170.0,696.0 171.7,697.7 173.5,699.4 175.2,701.0 176.9,702.7 178.7,704.4 180.4,706.0 182.2,707.7 183.9,709.3 185.7,711.0 187.4,712.7 189.2,714.3 190.9,716.0 192.7,717.6 194.4,719.3 196.2,721.0 197.9,722.6 199.7,724.3 201.4,725.9 203.2,727.6 205.0,729.2 206.8,730.8 208.6,732.4 210.4,734.0 212.2,735.6 214.1,737.1 215.9,738.7 217.8,740.2 219.6,741.8 221.5,743.3 223.4,744.8 225.3,746.3 227.2,747.7 229.1,749.2 231.1,750.6 233.1,752.0 235.1,753.3 237.1,754.6 239.1,755.9 241.2,757.2 243.3,758.4 245.4,759.6 247.5,760.7 249.6,761.9 251.7,763.0 253.9,764.1 256.0,765.2 258.2,766.3 260.4,767.4 262.5,768.4 264.7,769.4 266.9,770.4 269.1,771.3 271.4,772.3 273.6,773.2 275.9,774.1 278.1,774.9 280.4,775.8 282.6,776.6 284.9,777.4 287.2,778.1 289.5,778.8 291.8,779.5 294.2,780.1 296.5,780.7 298.8,781.3 301.2,781.8 303.6,782.2 305.9,782.7 308.3,783.0 310.7,783.4 313.1,783.6 315.5,783.9 317.9,784.1 320.3,784.2 322.7,784.4 325.1,784.5 327.5,784.6 330.0,784.7 332.4,784.7 334.8,784.8 337.2,784.8 339.6,784.8 342.0,784.8 344.4,784.7 346.8,784.7 349.2,784.6 351.7,784.4 354.1,784.3 356.5,784.0 358.9,783.8 361.3,783.5 363.6,783.1 366.0,782.8 368.4,782.4 370.8,781.9 373.1,781.5 375.5,781.0 377.9,780.4 380.2,779.9 382.5,779.3 384.9,778.7 387.2,778.1 389.5,777.4 391.9,776.8 394.2,776.1 396.5,775.4 398.8,774.7 401.1,773.9 403.4,773.2 405.7,772.4 408.0,771.7 410.3,771.0 412.6,770.3 414.9,769.7 417.2,769.0 419.5,768.4 421.9,767.7 424.2,767.1 426.5,766.4 428.8,765.8 431.2,765.1 433.5,764.4 435.8,763.8 438.1,763.1 440.4,762.4 442.7,761.8 445.1,761.1 447.4,760.5 449.7,759.8 452.0,759.1 454.3,758.5 456.7,757.8 459.0,757.1 461.3,756.4 463.6,755.7 465.9,755.0 468.2,754.3 470.5,753.6 472.8,752.8 475.1,752.0 477.4,751.3 479.6,750.5 481.9,749.7 484.2,748.9 486.5,748.1 488.7,747.3 491.0,746.4 493.3,745.6 495.5,744.8 497.8,744.0 500.1,743.1 502.3,742.3 504.6,741.5 507.3,740.0 509.5,737.2 511.0,733.1 511.9,728.0 512.1,722.0 511.5,715.5 510.2,708.8 508.2,702.0 505.7,695.6 502.8,689.7 499.5,684.7 496.0,680.8 492.5,678.1 489.1,676.8 486.0,676.9 484.6,676.0 482.6,676.4 480.7,676.9 478.7,677.5 476.8,678.1 474.9,678.7 473.0,679.4 471.0,680.0 469.1,680.7 467.2,681.3 465.3,682.0 463.4,682.6 461.5,683.3 459.6,684.0 457.7,684.6 455.7,685.3 453.8,685.9 451.9,686.6 450.0,687.3 448.1,687.9 446.2,688.6 444.3,689.3 442.4,689.9 440.4,690.6 438.5,691.2 436.6,691.9 434.7,692.5 432.8,693.1 430.8,693.8 428.9,694.4 427.0,695.0 425.1,695.6 423.1,696.2 421.2,696.8 419.3,697.4 417.3,698.0 415.4,698.6 413.5,699.2 411.5,699.8 409.6,700.4 407.7,701.0 405.7,701.6 403.8,702.2 401.9,702.8 400.0,703.5 398.0,704.1 396.1,704.7 394.2,705.4 392.3,706.1 390.4,706.7 388.5,707.3 386.5,708.0 384.6,708.6 382.7,709.2 380.7,709.8 378.8,710.4 376.9,711.0 374.9,711.6 373.0,712.1 371.1,712.7 369.1,713.3 367.2,713.8 365.2,714.2 363.2,714.7 361.2,715.0 359.2,715.4 357.2,715.7 355.2,715.9 353.2,716.2 351.2,716.3 349.2,716.5 347.2,716.5 345.1,716.6 343.1,716.5 341.1,716.4 339.1,716.2 337.1,716.0 335.1,715.7 333.1,715.4 331.1,715.1 329.1,714.7 327.1,714.3 325.1,713.9 323.1,713.4 321.2,713.0 319.2,712.5 317.3,712.0 315.3,711.4 313.4,710.9 311.4,710.3 309.5,709.7 307.5,709.1 305.6,708.5 303.7,707.8 301.8,707.1 299.9,706.4 298.1,705.6 296.2,704.8 294.4,703.9 292.5,703.1 290.7,702.2 288.9,701.3 287.1,700.4 285.3,699.5 283.5,698.5 281.8,697.5 280.0,696.5 278.2,695.5 276.5,694.5 274.8,693.4 273.1,692.3 271.4,691.2 269.7,690.0 268.1,688.9 266.5,687.7 264.9,686.4 263.3,685.2 261.7,683.9 260.2,682.5 258.7,681.2 257.2,679.9 255.7,678.5 254.2,677.2 252.7,675.8 251.2,674.4 249.7,673.1 248.2,671.7 246.7,670.4 245.1,669.0 243.6,667.7 242.1,666.3 240.6,665.0 239.1,663.6 237.6,662.3 236.1,660.9 234.6,659.5 233.1,658.2 231.6,656.8 230.1,655.4 228.6,654.1 227.1,652.7 225.6,651.4 224.1,650.0 222.6,648.7 221.1,647.3 219.6,646.0 218.1,644.6 216.6,643.3 215.0,642.0 213.5,640.7 211.9,639.4 210.4,638.1 208.8,636.8 207.3,635.5 205.7,634.2 204.1,633.0 202.6,631.7 201.0,630.4 199.4,629.1 197.9,627.8 196.3,626.5 194.8,625.2 193.2,623.9 191.7,622.6 190.2,621.3 188.7,619.9 187.2,618.6 185.7,617.2 184.2,615.8 182.7,614.4 181.2,613.0 179.8,611.7 178.3,610.3 176.8,608.9 175.4,607.5 173.9,606.1 172.5,604.7 171.0,603.3 169.5,601.9 168.0,600.5 166.6,599.1 165.1,597.7 163.6,596.4 162.1,595.0 160.6,593.6 159.2,592.2 157.7,590.8 156.2,589.4 154.7,588.1 153.3,586.7 151.8,585.3 150.3,583.9 148.8,582.5 147.3,581.2 145.9,579.8 144.4,578.4 142.8,577.1 141.3,575.8 139.8,574.4 138.3,573.1 136.8,571.7 135.3,570.4 133.8,569.0 132.3,567.6 130.9,566.2 129.5,564.7 128.1,563.2 126.8,561.7 125.5,560.2 124.2,558.6 122.9,557.0 121.7,555.4 120.5,553.8 119.3,552.1 118.2,550.5 117.1,548.8 116.0,547.1 114.9,545.4 113.8,543.7 112.8,541.9 111.9,540.1 110.9,538.3 110.0,536.5 109.1,534.7 108.1,532.9 107.2,531.1 106.3,529.3 105.4,527.5 104.5,525.7 103.6,523.9 102.7,522.1 101.9,520.2 101.0,518.4 100.2,516.6 99.4,514.7 98.7,512.8 98.0,510.9 97.4,509.0 96.7,507.0 96.1,505.1 95.6,503.2 95.0,501.2 94.5,499.3 94.0,497.3 93.5,495.4 93.0,493.4 92.6,491.4 92.2,489.4 91.8,487.4 91.4,485.5 91.0,483.5 90.7,481.5 90.4,479.5 90.1,477.5 89.8,475.5 89.6,473.5 89.4,471.4 89.2,469.4 89.0,467.4 88.9,465.4 88.8,463.4 88.7,461.4 88.7,459.3 88.7,457.3 88.8,455.3 88.8,453.3 88.9,451.2 89.1,449.2 89.2,447.2 89.3,445.2 89.5,443.2 89.7,441.2 89.9,439.1 90.1,437.1 90.4,435.1 90.7,433.1 91.0,431.1 91.5,429.2 91.9,427.2 92.4,425.2 93.0,423.3 93.6,421.4 94.2,419.4 94.9,417.5 95.5,415.6 96.2,413.7 96.9,411.8 97.7,409.9 98.4,408.0 99.1,406.1 99.8,404.2 100.5,402.3 101.2,400.4 101.9,398.5 102.6,396.6 103.3,394.8 104.0,392.9 104.7,391.0 105.4,389.1 106.2,387.2 106.9,385.3 107.6,383.4 108.3,381.5 109.0,379.6 109.7,377.7 110.5,375.8 111.2,373.9 111.9,372.1 112.6,370.2 113.4,368.3 114.1,366.4 114.8,364.5 115.5,362.6 116.2,360.7 116.9,358.8 117.7,356.9 118.4,355.0 119.1,353.1 119.8,351.3 120.6,349.4 121.3,347.5 122.1,345.6 122.8,343.7 123.6,341.9 124.4,340.0 125.2,338.1 125.9,336.3 126.7,334.4 127.5,332.5 128.4,330.7 129.2,328.8 130.0,327.0 130.8,325.2 131.7,323.3 132.5,321.5 133.4,319.6 134.2,317.8 135.1,316.0 136.0,314.2 136.9,312.3 137.8,310.5 138.7,308.7 139.6,306.9 140.5,305.1 141.4,303.3 142.3,301.5 143.3,299.7 144.2,297.9 145.2,296.1 146.1,294.3 147.1,292.6 148.1,290.8 149.0,289.0 150.0,287.3 151.0,285.5 152.0,283.7 153.0,282.0 154.0,280.2 155.0,278.5 156.0,276.7 157.0,274.9 158.0,273.2 158.9,271.4 159.9,269.6 160.8,267.8 161.7,266.0 162.6,264.2 163.5,262.4 164.4,260.5 165.3,258.7 166.1,256.9 167.1,255.1 168.0,253.3 169.0,251.5 170.0,249.8 171.1,248.1 172.2,246.4 173.3,244.7 174.4,243.0 175.5,241.3 176.7,239.7 177.9,238.0 179.1,236.4 180.3,234.8 181.5,233.2 182.8,231.6 184.0,230.0 185.3,228.4 186.6,226.8 187.9,225.3 189.2,223.8 190.6,222.3 191.9,220.8 193.3,219.3 194.7,217.8 196.1,216.4 197.5,214.9 198.9,213.5 200.3,212.0 201.8,210.6 203.2,209.2 204.6,207.7 206.1,206.3 207.6,205.0 209.1,203.6 210.6,202.3 212.2,201.0 213.7,199.7 215.2,198.3 216.8,197.0 218.3,195.7 219.9,194.4 221.4,193.1 223.0,191.9 224.6,190.6 226.2,189.4 227.9,188.3 229.6,187.1 231.3,186.1 233.0,185.0 234.8,184.0 236.6,183.1 238.4,182.2 240.2,181.3 242.0,180.4 243.9,179.6 245.7,178.8 247.6,178.1 249.5,177.4 251.4,176.7 253.4,176.1 255.3,175.6 257.3,175.2 259.3,174.8 261.3,174.4 263.2,174.0 265.2,173.6 267.2,173.2 269.2,172.8 271.2,172.4 273.2,172.1 275.2,171.7 277.2,171.3 279.2,171.0 281.1,170.6 283.1,170.3 285.1,170.0 287.1,169.6 289.1,169.3 291.1,169.0 293.1,168.7 295.1,168.4 297.1,168.2 299.1,167.9 301.2,167.6 303.2,167.4 305.2,167.1 307.2,166.9 309.2,166.7 311.2,166.5 313.2,166.2 315.2,166.0 317.2,165.8 319.3,165.6 321.3,165.4 323.3,165.2 325.3,165.0 327.3,164.8 329.3,164.6 331.3,164.4 333.3,164.2 335.4,164.0 337.4,163.8 339.4,163.7 341.4,163.5 343.4,163.3 345.4,163.1 347.4,162.9 349.5,162.6 351.5,162.4 353.5,162.2 355.5,162.0 357.5,161.8 359.5,161.6 361.5,161.3 363.5,161.1 365.5,160.8 367.5,160.6 369.5,160.3 371.6,160.0 373.6,159.7 375.6,159.4 377.6,159.2 379.6,158.9 381.6,158.6 383.6,158.3 385.6,158.0 387.6,157.7 389.6,157.4 391.6,157.1 393.6,156.8 395.6,156.6 397.6,156.3 399.6,156.1 401.6,155.8 403.6,155.6 405.6,155.3 407.6,155.1 409.6,154.8 411.6,154.6 413.7,154.3 415.7,154.1 417.7,153.9 419.7,153.6 421.7,153.4 423.7,153.2 425.7,152.9 427.7,152.7 429.7,152.5 431.7,152.2 433.8,152.0 435.8,151.8 437.8,151.5 439.8,151.3 441.8,151.1 443.8,150.8 445.8,150.6 447.8,150.4 449.8,150.1 451.8,149.9 453.8,149.6 455.9,149.4 457.9,149.1 459.9,148.9 461.9,148.6 463.9,148.4 465.9,148.1 467.9,147.9 469.9,147.6 471.9,147.3 473.9,147.1 475.9,146.8 477.9,146.5 479.9,146.2 481.9,145.9 483.9,145.6 485.9,145.3 487.9,145.0 489.9,144.7 491.9,144.4 493.9,144.1 495.9,143.8 497.9,143.5 499.9,143.2 501.9,142.9 503.9,142.6 505.9,142.2 507.9,141.9 509.9,141.6 511.9,141.3 513.9,141.0 515.9,140.7 517.9,140.4 519.9,140.1 521.9,139.8 523.9,139.5 525.9,139.2 527.9,138.8 529.9,138.5 531.9,138.2 533.9,137.9 535.9,137.6 537.9,137.3 539.9,137.0 541.9,136.7 543.9,136.4 545.9,136.1 547.9,135.8 549.9,135.5 551.9,135.2 553.9,134.9 555.9,134.6 557.9,134.3 559.9,134.0 561.9,133.7 563.9,133.4 565.9,133.1 567.9,132.8 569.9,132.5 571.9,132.2 573.9,131.9 575.9,131.7 577.9,131.4 579.9,131.1 582.0,130.8 584.0,130.6 586.0,130.3 588.0,130.2 590.0,130.0Z"/></clipPath><clipPath id="cr"><path d="M555.0,67.0 556.6,66.8 558.3,66.6 559.9,66.5 561.6,66.3 563.2,66.1 564.9,65.9 566.5,65.7 568.1,65.5 569.8,65.4 571.4,65.2 573.1,65.0 574.7,64.8 576.4,64.6 578.0,64.4 579.6,64.2 581.3,63.9 582.9,63.7 584.5,63.4 586.2,63.2 587.8,62.9 589.4,62.7 591.1,62.4 592.7,62.2 594.3,62.0 596.0,61.8 597.6,61.6 599.3,61.4 600.9,61.2 602.6,61.1 604.2,61.0 605.9,60.9 607.5,60.8 609.2,60.8 610.8,60.8 612.5,60.7 614.1,60.8 615.8,60.8 617.4,60.9 619.1,60.9 620.7,61.1 622.4,61.2 624.0,61.4 625.6,61.7 627.3,62.0 628.9,62.3 630.5,62.6 632.1,63.0 633.7,63.4 635.3,63.8 636.9,64.2 638.5,64.7 640.1,65.3 641.6,65.8 643.2,66.4 644.7,67.1 646.2,67.8 647.7,68.5 649.1,69.3 650.5,70.1 651.9,71.0 653.3,71.9 654.7,72.9 656.0,73.9 657.3,74.9 658.6,75.9 659.8,77.0 661.1,78.1 662.3,79.2 663.5,80.4 664.7,81.5 665.8,82.7 667.0,83.9 668.1,85.1 669.2,86.4 670.2,87.6 671.3,88.9 672.3,90.2 673.3,91.5 674.2,92.9 675.1,94.3 676.0,95.7 676.9,97.1 677.7,98.5 678.5,100.0 679.2,101.4 679.9,102.9 680.6,104.4 681.2,106.0 681.8,107.5 682.4,109.1 682.9,110.6 683.4,112.2 683.8,113.8 684.3,115.4 684.7,117.0 685.1,118.6 685.5,120.2 685.8,121.8 686.2,123.4 686.5,125.1 686.8,126.7 687.1,128.3 687.3,130.0 687.5,131.6 687.8,133.2 687.9,134.9 688.1,136.5 688.3,138.2 688.4,139.8 688.5,141.5 688.6,143.1 688.7,144.8 688.8,146.4 688.8,148.1 688.8,149.7 688.8,151.4 688.8,153.0 688.7,154.7 688.6,156.3 688.5,158.0 688.4,159.6 688.3,161.3 688.1,162.9 687.9,164.6 687.8,166.2 687.6,167.8 687.4,169.5 687.2,171.1 687.0,172.8 686.8,174.4 686.5,176.0 686.3,177.7 686.0,179.3 685.7,180.9 685.5,182.6 685.2,184.2 684.9,185.8 684.6,187.4 684.2,189.1 683.9,190.7 683.6,192.3 683.3,193.9 682.9,195.5 682.6,197.2 682.2,198.8 681.9,200.4 681.5,202.0 681.1,203.6 680.6,205.2 680.1,206.8 679.5,208.3 679.0,209.9 678.4,211.4 677.9,213.0 677.3,214.5 676.7,216.1 676.1,217.6 675.5,219.2 675.0,220.7 674.4,222.3 673.8,223.8 673.2,225.3 672.5,226.9 671.9,228.4 671.3,229.9 670.7,231.5 670.1,233.0 669.4,234.5 668.8,236.1 668.2,237.6 667.6,239.1 666.9,240.6 666.3,242.2 665.7,243.7 665.0,245.2 664.4,246.7 663.7,248.3 663.0,249.8 662.4,251.3 661.7,252.8 661.0,254.3 660.3,255.8 659.6,257.3 658.8,258.8 658.1,260.2 657.4,261.7 656.6,263.2 655.9,264.7 655.1,266.1 654.3,267.6 653.6,269.0 652.8,270.5 652.0,272.0 651.2,273.4 650.4,274.9 649.6,276.3 648.8,277.8 648.0,279.2 647.2,280.7 646.4,282.1 645.6,283.6 644.8,285.0 644.0,286.4 643.2,287.9 642.4,289.3 641.6,290.8 640.8,292.2 639.9,293.6 639.1,295.1 638.3,296.5 637.4,297.9 636.6,299.3 635.8,300.8 634.9,302.2 634.1,303.6 633.3,305.0 632.5,306.5 631.6,307.9 630.8,309.3 630.0,310.8 629.1,312.2 628.3,313.6 627.4,315.0 626.6,316.4 625.7,317.8 624.8,319.3 624.0,320.7 623.1,322.1 622.3,323.5 621.5,324.9 620.7,326.4 619.9,327.8 619.1,329.3 618.3,330.8 617.6,332.3 616.9,333.8 616.2,335.3 615.6,336.8 615.0,338.3 614.3,339.8 613.7,341.4 613.1,342.9 612.6,344.5 612.0,346.0 611.5,347.6 611.0,349.2 610.5,350.8 610.1,352.3 609.6,353.9 609.2,355.5 608.8,357.1 608.4,358.7 608.0,360.3 607.7,362.0 607.3,363.6 607.0,365.2 606.7,366.8 606.4,368.5 606.1,370.1 605.8,371.7 605.6,373.3 605.3,375.0 605.1,376.6 604.8,378.2 604.6,379.9 604.4,381.5 604.2,383.2 604.1,384.8 603.9,386.5 603.8,388.1 603.6,389.8 603.5,391.4 603.4,393.1 603.4,394.7 603.3,396.4 603.3,398.0 603.3,399.7 603.3,401.3 603.4,403.0 603.5,404.6 603.6,406.3 603.7,407.9 603.9,409.6 604.0,411.2 604.2,412.8 604.5,414.5 604.7,416.1 605.0,417.8 605.2,419.4 605.5,421.0 605.8,422.6 606.1,424.3 606.4,425.9 606.8,427.5 607.1,429.1 607.5,430.7 607.8,432.3 608.2,433.9 608.6,435.6 609.0,437.2 609.5,438.8 609.9,440.4 610.3,441.9 610.8,443.5 611.2,445.1 611.7,446.7 612.1,448.3 612.6,449.9 613.1,451.5 613.6,453.0 614.1,454.6 614.6,456.2 615.1,457.8 615.6,459.3 616.2,460.9 616.7,462.5 617.2,464.0 617.8,465.6 618.3,467.1 618.9,468.7 619.5,470.3 620.0,471.8 620.6,473.3 621.2,474.9 621.9,476.4 622.5,477.9 623.2,479.4 623.8,481.0 624.5,482.5 625.3,483.9 626.0,485.4 626.8,486.9 627.6,488.3 628.4,489.8 629.3,491.2 630.1,492.6 631.0,494.0 632.0,495.3 632.9,496.7 633.8,498.0 634.8,499.4 635.8,500.7 636.7,502.1 637.7,503.4 638.7,504.7 639.7,506.1 640.7,507.4 641.6,508.7 642.6,510.1 643.6,511.4 644.5,512.8 645.5,514.1 646.4,515.4 647.4,516.8 648.4,518.1 649.3,519.5 650.3,520.8 651.3,522.2 652.2,523.5 653.2,524.8 654.2,526.2 655.2,527.5 656.1,528.8 657.1,530.2 658.1,531.5 659.1,532.8 660.1,534.2 661.0,535.5 662.0,536.8 663.0,538.1 664.0,539.5 665.0,540.8 666.0,542.1 667.0,543.4 668.0,544.8 669.0,546.1 670.0,547.4 671.0,548.7 672.0,550.0 673.0,551.3 674.0,552.6 675.0,553.9 676.0,555.2 677.1,556.5 678.1,557.9 679.1,559.2 680.1,560.5 681.1,561.8 682.1,563.1 683.1,564.4 684.1,565.7 685.1,567.1 686.0,568.4 687.0,569.7 688.0,571.1 688.9,572.4 689.9,573.8 690.9,575.1 691.8,576.5 692.8,577.8 693.7,579.2 694.7,580.5 695.6,581.9 696.6,583.2 697.5,584.6 698.5,585.9 699.5,587.2 700.4,588.6 701.4,589.9 702.4,591.2 703.4,592.6 704.4,593.9 705.4,595.2 706.4,596.5 707.4,597.8 708.4,599.1 709.4,600.4 710.4,601.7 711.5,603.0 712.5,604.3 713.5,605.6 714.5,606.9 715.6,608.2 716.6,609.5 717.6,610.8 718.7,612.1 719.7,613.4 720.7,614.7 721.7,616.0 722.8,617.3 723.8,618.6 724.8,619.8 725.9,621.1 726.9,622.4 727.9,623.7 729.0,625.0 730.0,626.3 731.0,627.6 732.0,628.9 733.1,630.2 734.1,631.5 735.0,632.9 736.0,634.2 736.9,635.6 737.9,636.9 739.0,638.2 740.1,639.4 741.1,640.7 742.2,641.9 743.3,643.2 744.4,644.4 745.5,645.7 746.6,646.9 747.7,648.1 748.8,649.3 750.0,650.5 751.1,651.7 752.3,652.9 753.4,654.1 754.6,655.2 755.8,656.4 757.0,657.5 758.2,658.6 759.4,659.7 760.6,660.9 761.9,662.0 763.1,663.1 764.3,664.2 765.6,665.3 766.8,666.3 768.1,667.4 769.4,668.5 770.7,669.5 771.9,670.5 773.2,671.6 774.6,672.5 775.9,673.5 777.2,674.5 778.6,675.4 780.0,676.4 781.4,677.3 782.7,678.1 784.2,679.0 785.6,679.9 787.0,680.7 788.4,681.5 789.9,682.3 791.3,683.1 792.8,683.9 794.3,684.6 795.7,685.4 797.2,686.1 798.7,686.8 800.2,687.5 801.8,688.1 803.3,688.8 804.8,689.4 806.4,690.0 807.9,690.5 809.5,691.1 811.0,691.6 812.6,692.1 814.2,692.6 815.8,693.1 817.3,693.6 818.9,694.1 820.5,694.5 822.1,695.0 823.7,695.4 825.3,695.9 826.9,696.3 828.5,696.7 830.1,697.0 831.7,697.4 833.4,697.7 835.0,697.9 836.6,698.2 838.3,698.3 839.9,698.5 841.6,698.6 843.2,698.7 844.9,698.7 846.5,698.7 848.2,698.7 849.8,698.6 851.5,698.5 853.1,698.4 854.8,698.2 856.4,698.1 858.1,698.0 859.7,697.8 861.4,697.7 863.0,697.5 864.6,697.4 866.3,697.3 867.9,697.1 869.6,697.0 871.2,696.9 872.9,696.8 874.5,696.6 876.2,696.5 877.8,696.4 879.5,696.3 881.1,696.1 882.8,696.0 884.4,695.9 886.1,695.7 887.7,695.6 889.4,695.4 891.0,695.3 892.7,695.2 894.3,695.0 896.0,694.9 897.6,694.8 899.2,694.6 900.9,694.5 902.5,694.3 904.2,694.2 905.8,694.1 907.5,693.9 909.1,693.8 910.8,693.6 912.4,693.5 914.1,693.3 915.7,693.2 917.4,693.1 919.0,692.9 920.7,692.8 922.3,692.6 923.9,692.5 925.6,692.4 927.2,692.2 928.9,692.1 930.5,691.9 932.2,691.8 933.8,691.6 935.5,691.5 937.1,691.4 938.8,691.2 940.4,691.1 942.1,690.9 943.7,690.8 945.4,690.6 947.0,690.5 948.7,690.4 950.3,690.2 951.9,690.1 953.6,689.9 955.2,689.8 956.9,689.6 958.5,689.5 960.2,689.3 961.8,689.2 963.5,689.0 965.1,688.9 966.8,688.7 968.4,688.6 970.1,688.4 971.7,688.3 974.8,688.8 977.9,690.7 980.9,694.0 983.6,698.6 985.9,704.2 987.7,710.6 988.9,717.6 989.6,724.7 989.5,731.8 988.9,738.4 987.6,744.4 985.7,749.4 983.4,753.3 980.7,755.8 977.7,756.8 976.0,757.0 974.4,757.1 972.7,757.3 971.1,757.5 969.4,757.7 967.8,757.8 966.1,758.0 964.4,758.2 962.8,758.4 961.1,758.5 959.5,758.7 957.8,758.9 956.1,759.1 954.5,759.2 952.8,759.4 951.2,759.6 949.5,759.7 947.9,759.9 946.2,760.1 944.5,760.3 942.9,760.4 941.2,760.6 939.6,760.8 937.9,761.0 936.3,761.1 934.6,761.3 932.9,761.5 931.3,761.6 929.6,761.8 928.0,762.0 926.3,762.2 924.6,762.3 923.0,762.5 921.3,762.7 919.7,762.8 918.0,763.0 916.4,763.2 914.7,763.4 913.0,763.5 911.4,763.7 909.7,763.9 908.1,764.1 906.4,764.2 904.8,764.4 903.1,764.6 901.4,764.7 899.8,764.9 898.1,765.0 896.5,765.2 894.8,765.4 893.1,765.5 891.5,765.7 889.8,765.8 888.2,765.9 886.5,766.1 884.8,766.2 883.2,766.4 881.5,766.5 879.9,766.7 878.2,766.8 876.5,767.0 874.9,767.1 873.2,767.3 871.6,767.4 869.9,767.6 868.2,767.7 866.6,767.8 864.9,768.0 863.2,768.1 861.6,768.2 859.9,768.3 858.3,768.4 856.6,768.5 854.9,768.5 853.3,768.6 851.6,768.6 849.9,768.6 848.3,768.6 846.6,768.5 844.9,768.5 843.3,768.4 841.6,768.3 839.9,768.1 838.3,767.9 836.6,767.8 835.0,767.5 833.3,767.3 831.7,767.0 830.0,766.8 828.4,766.5 826.7,766.2 825.1,765.9 823.5,765.7 821.8,765.4 820.2,765.1 818.5,764.8 816.9,764.5 815.3,764.2 813.6,763.8 812.0,763.5 810.4,763.2 808.7,762.8 807.1,762.4 805.5,762.1 803.9,761.7 802.2,761.3 800.6,760.8 799.0,760.4 797.4,760.0 795.8,759.5 794.2,759.1 792.6,758.6 791.0,758.1 789.4,757.6 787.8,757.1 786.2,756.6 784.7,756.1 783.1,755.6 781.5,755.0 779.9,754.5 778.4,753.9 776.8,753.3 775.2,752.7 773.7,752.1 772.1,751.5 770.6,750.9 769.1,750.2 767.5,749.6 766.0,748.9 764.5,748.3 762.9,747.6 761.4,746.9 759.9,746.2 758.4,745.4 756.9,744.7 755.4,744.0 753.9,743.2 752.4,742.5 751.0,741.7 749.5,741.0 748.0,740.2 746.5,739.4 745.1,738.6 743.6,737.8 742.2,737.0 740.7,736.1 739.3,735.3 737.9,734.4 736.4,733.6 735.0,732.7 733.6,731.8 732.2,730.8 730.9,729.9 729.5,728.9 728.1,728.0 726.8,727.0 725.5,725.9 724.2,724.9 722.9,723.8 721.6,722.8 720.4,721.7 719.2,720.5 718.0,719.4 716.8,718.2 715.6,717.0 714.5,715.8 713.4,714.5 712.3,713.3 711.2,712.0 710.1,710.8 709.0,709.5 707.9,708.2 706.9,706.9 705.8,705.6 704.8,704.3 703.8,703.0 702.8,701.7 701.8,700.3 700.8,699.0 699.8,697.7 698.8,696.4 697.8,695.0 696.8,693.7 695.8,692.4 694.7,691.0 693.7,689.7 692.7,688.4 691.7,687.1 690.7,685.8 689.6,684.5 688.6,683.2 687.6,681.8 686.5,680.5 685.5,679.2 684.4,677.9 683.4,676.6 682.4,675.3 681.3,674.0 680.3,672.7 679.2,671.4 678.2,670.1 677.1,668.8 676.1,667.5 675.1,666.2 674.0,664.9 673.0,663.6 671.9,662.3 670.9,661.0 669.9,659.7 668.8,658.4 667.8,657.1 666.7,655.8 665.7,654.5 664.6,653.2 663.6,651.9 662.5,650.6 661.5,649.3 660.5,648.0 659.4,646.7 658.4,645.4 657.3,644.1 656.3,642.8 655.2,641.5 654.2,640.2 653.1,638.9 652.1,637.7 651.0,636.4 649.9,635.1 648.9,633.8 647.8,632.5 646.8,631.2 645.8,629.9 644.7,628.6 643.7,627.3 642.7,626.0 641.6,624.7 640.6,623.3 639.6,622.0 638.6,620.7 637.6,619.3 636.6,618.0 635.7,616.6 634.7,615.3 633.7,613.9 632.7,612.6 631.8,611.2 630.8,609.9 629.8,608.5 628.8,607.2 627.9,605.8 626.9,604.5 625.9,603.1 625.0,601.8 624.0,600.4 623.0,599.0 622.0,597.7 621.1,596.3 620.1,595.0 619.1,593.6 618.1,592.3 617.1,590.9 616.2,589.6 615.2,588.3 614.2,586.9 613.1,585.6 612.1,584.3 611.1,583.0 610.1,581.7 609.0,580.4 608.0,579.0 607.0,577.7 605.9,576.4 604.9,575.1 603.8,573.8 602.8,572.5 601.8,571.2 600.7,569.9 599.7,568.6 598.7,567.3 597.6,566.0 596.6,564.7 595.6,563.4 594.5,562.1 593.5,560.8 592.4,559.5 591.4,558.2 590.4,556.9 589.4,555.5 588.4,554.2 587.4,552.9 586.4,551.5 585.4,550.2 584.4,548.9 583.4,547.5 582.4,546.2 581.4,544.8 580.4,543.5 579.4,542.2 578.4,540.8 577.4,539.5 576.4,538.2 575.4,536.8 574.5,535.5 573.5,534.1 572.5,532.8 571.6,531.4 570.6,530.0 569.7,528.6 568.8,527.2 567.9,525.8 567.0,524.4 566.2,523.0 565.3,521.5 564.5,520.1 563.7,518.6 562.9,517.1 562.2,515.7 561.4,514.2 560.7,512.7 560.0,511.2 559.3,509.6 558.6,508.1 558.0,506.6 557.3,505.1 556.7,503.5 556.0,502.0 555.4,500.4 554.8,498.9 554.2,497.3 553.6,495.8 553.0,494.2 552.4,492.7 551.8,491.1 551.2,489.5 550.6,488.0 550.0,486.4 549.5,484.9 548.9,483.3 548.3,481.7 547.8,480.1 547.3,478.6 546.7,477.0 546.2,475.4 545.7,473.8 545.2,472.2 544.7,470.6 544.2,469.0 543.7,467.4 543.3,465.8 542.8,464.2 542.4,462.6 542.0,461.0 541.6,459.4 541.2,457.8 540.8,456.2 540.4,454.5 540.1,452.9 539.7,451.3 539.4,449.6 539.1,448.0 538.8,446.4 538.4,444.7 538.1,443.1 537.9,441.4 537.6,439.8 537.3,438.2 537.0,436.5 536.8,434.9 536.5,433.2 536.3,431.6 536.1,429.9 535.9,428.3 535.6,426.6 535.4,425.0 535.2,423.3 535.1,421.6 534.9,420.0 534.7,418.3 534.6,416.7 534.5,415.0 534.4,413.3 534.3,411.7 534.2,410.0 534.1,408.3 534.1,406.7 534.0,405.0 534.0,403.3 533.9,401.7 533.9,400.0 533.9,398.3 533.9,396.7 533.9,395.0 533.9,393.3 533.9,391.7 534.0,390.0 534.0,388.3 534.1,386.7 534.2,385.0 534.3,383.4 534.5,381.7 534.6,380.0 534.9,378.4 535.1,376.7 535.4,375.1 535.7,373.5 536.0,371.8 536.3,370.2 536.6,368.5 536.9,366.9 537.2,365.3 537.5,363.6 537.8,362.0 538.2,360.4 538.5,358.7 538.8,357.1 539.2,355.5 539.6,353.8 539.9,352.2 540.3,350.6 540.7,349.0 541.1,347.3 541.5,345.7 542.0,344.1 542.4,342.5 542.8,340.9 543.3,339.3 543.7,337.7 544.2,336.1 544.6,334.5 545.1,332.9 545.6,331.3 546.1,329.7 546.6,328.1 547.1,326.5 547.6,324.9 548.1,323.3 548.6,321.8 549.2,320.2 549.7,318.6 550.3,317.1 550.9,315.5 551.5,313.9 552.1,312.4 552.8,310.9 553.4,309.3 554.1,307.8 554.8,306.3 555.5,304.8 556.2,303.3 556.9,301.8 557.7,300.3 558.4,298.8 559.2,297.3 559.9,295.8 560.7,294.3 561.5,292.9 562.3,291.4 563.1,289.9 563.9,288.5 564.7,287.0 565.5,285.6 566.4,284.1 567.2,282.7 568.1,281.3 568.9,279.8 569.8,278.4 570.6,277.0 571.5,275.5 572.3,274.1 573.1,272.6 573.9,271.2 574.8,269.7 575.6,268.3 576.3,266.8 577.1,265.3 577.9,263.8 578.6,262.4 579.4,260.9 580.1,259.4 580.9,257.9 581.6,256.4 582.3,254.9 583.1,253.4 583.8,251.9 584.5,250.4 585.2,248.9 586.0,247.4 586.7,245.9 587.5,244.4 588.2,242.9 589.0,241.4 589.7,239.9 590.5,238.5 591.3,237.0 592.1,235.5 592.9,234.1 593.7,232.6 594.5,231.2 595.3,229.7 596.1,228.2 596.9,226.8 597.7,225.3 598.6,223.9 599.4,222.4 600.2,221.0 600.9,219.5 601.7,218.0 602.5,216.5 603.2,215.0 603.9,213.5 604.6,212.0 605.3,210.5 606.0,209.0 606.6,207.4 607.3,205.9 607.9,204.3 608.5,202.8 609.1,201.2 609.7,199.7 610.2,198.1 610.8,196.5 611.4,195.0 611.9,193.4 612.4,191.8 613.0,190.2 613.5,188.6 614.0,187.1 614.5,185.5 615.0,183.9 615.6,182.3 616.1,180.7 616.5,179.1 617.0,177.5 617.5,175.9 617.9,174.3 618.4,172.7 618.8,171.1 619.2,169.5 619.5,167.8 619.8,166.2 620.1,164.6 620.4,162.9 620.6,161.3 620.8,159.6 621.0,158.0 621.1,156.3 621.2,154.6 621.3,153.0 621.3,151.3 621.3,149.6 621.3,148.0 621.2,146.3 621.1,144.6 620.9,143.0 620.6,141.3 620.3,139.7 619.9,138.1 619.4,136.5 618.8,135.0 618.0,133.5 617.0,132.1 615.8,131.0 614.5,130.0 613.0,129.3 611.3,129.0 609.7,128.9 608.0,128.8 606.3,128.8 604.7,128.8 603.0,128.9 601.3,129.0 599.7,129.1 598.0,129.2 596.3,129.4 594.7,129.5 593.0,129.7 591.4,129.9 589.7,130.0 588.1,130.2 586.4,130.4 584.7,130.6 583.1,130.8 581.4,131.0 579.8,131.2 578.1,131.4 576.5,131.6 574.8,131.8 573.2,132.0 571.5,132.2 569.9,132.4 568.2,132.6 566.5,132.8 564.9,133.1 563.2,133.3 561.6,133.5 559.9,133.8 558.3,134.0 556.7,134.3 555.0,134.5Z"/></clipPath></defs>
<rect width="1106" height="832" fill="url(#bg)"/>
<g font-family="Liberation Sans, sans-serif" font-size="20.2" fill="#000">
<text x="11.5" y="25">Model name: H-BARSIM</text>
<text x="11.5" y="48.7">Study name: Study 1</text>
<text x="11.5" y="73.2">Plot type: Static nodal stress Stress1 (-vonMises-)</text>
<text x="11.5" y="98.2">Deformation scale: 2789.14</text>
</g>

<g clip-path="url(#cl)"><path d="M590.0,62.8 587.6,63.1 585.2,63.5 582.8,63.8 580.4,64.1 578.0,64.4 575.6,64.7 573.3,64.9 570.9,65.2 568.5,65.5 566.1,65.8 563.7,66.1 561.3,66.3 558.9,66.6 556.5,66.9 554.1,67.2 551.7,67.4 549.3,67.7 546.9,68.0 544.5,68.3 542.1,68.6 539.7,68.8 537.3,69.1 534.9,69.4 532.5,69.7 530.1,70.0 527.7,70.3 525.3,70.6 523.0,70.9 520.6,71.2 518.2,71.5 515.8,71.8 513.4,72.1 511.0,72.4 508.6,72.7 506.2,73.0 503.8,73.4 501.4,73.7 499.0,74.0 496.7,74.3 494.3,74.7 491.9,75.0 489.5,75.3 487.1,75.6 484.7,76.0 482.3,76.3 479.9,76.6 477.5,77.0 475.1,77.3 472.8,77.6 470.4,77.9 468.0,78.3 465.6,78.6 463.2,79.0 460.8,79.3 458.4,79.6 456.0,80.0 453.7,80.3 451.3,80.7 448.9,81.0 446.5,81.4 444.1,81.7 441.7,82.1 439.3,82.4 436.9,82.8 434.6,83.1 432.2,83.4 429.8,83.8 427.4,84.1 425.0,84.5 422.6,84.8 420.2,85.2 417.8,85.5 415.5,85.9 413.1,86.2 410.7,86.5 408.3,86.9 405.9,87.2 403.5,87.5 401.1,87.8 398.7,88.2 396.3,88.5 394.0,88.8 391.6,89.1 389.2,89.4 386.8,89.6 384.4,89.9 382.0,90.2 379.6,90.4 377.2,90.7 374.8,90.9 372.4,91.2 370.0,91.4 367.6,91.7 365.2,92.0 362.8,92.3 360.4,92.6 358.0,92.8 355.6,93.1 353.2,93.4 350.8,93.7 348.4,94.0 346.0,94.3 343.6,94.6 341.2,94.9 338.9,95.2 336.5,95.5 334.1,95.8 331.7,96.1 329.3,96.4 326.9,96.7 324.5,97.0 322.1,97.3 319.7,97.6 317.3,97.9 314.9,98.2 312.5,98.5 310.1,98.8 307.7,99.1 305.3,99.4 303.0,99.7 300.6,100.0 298.2,100.3 295.8,100.6 293.4,100.9 291.0,101.2 288.6,101.5 286.2,101.8 283.8,102.1 281.4,102.4 279.0,102.7 276.6,103.0 274.2,103.3 271.8,103.6 269.5,103.9 267.1,104.2 264.7,104.5 262.3,104.8 259.9,105.1 257.5,105.4 255.1,105.7 252.7,106.0 250.3,106.4 247.9,106.8 245.6,107.2 243.2,107.6 240.8,108.0 238.4,108.4 236.1,108.9 233.7,109.5 231.4,110.2 229.2,111.0 226.9,111.9 224.7,112.9 222.6,114.0 220.5,115.2 218.5,116.5 216.4,117.8 214.4,119.1 212.4,120.4 210.3,121.7 208.3,123.0 206.3,124.4 204.3,125.7 202.3,127.0 200.3,128.4 198.3,129.7 196.3,131.1 194.3,132.5 192.3,133.8 190.3,135.2 188.4,136.6 186.4,138.1 184.5,139.5 182.6,141.0 180.7,142.5 178.9,144.0 177.0,145.6 175.2,147.1 173.3,148.7 171.5,150.3 169.8,151.9 168.0,153.6 166.2,155.2 164.4,156.8 162.7,158.5 160.9,160.1 159.2,161.8 157.4,163.5 155.7,165.2 154.0,166.9 152.3,168.6 150.6,170.3 148.9,172.0 147.2,173.7 145.5,175.4 143.9,177.2 142.2,178.9 140.6,180.7 138.9,182.5 137.3,184.3 135.8,186.1 134.2,188.0 132.7,189.8 131.2,191.7 129.7,193.6 128.2,195.5 126.7,197.4 125.3,199.3 123.8,201.3 122.4,203.2 121.0,205.2 119.6,207.1 118.2,209.1 116.8,211.1 115.5,213.1 114.1,215.1 112.7,217.0 111.3,219.0 110.0,221.0 108.6,223.0 107.2,225.0 105.9,227.0 104.5,229.0 103.2,231.0 101.8,233.0 100.5,235.0 99.2,237.0 98.0,239.1 96.7,241.1 95.5,243.2 94.2,245.3 93.0,247.4 91.8,249.4 90.5,251.5 89.3,253.6 88.1,255.7 86.9,257.8 85.7,259.9 84.5,262.0 83.3,264.1 82.1,266.1 80.9,268.2 79.7,270.3 78.5,272.4 77.2,274.5 76.0,276.5 74.8,278.6 73.6,280.7 72.5,282.9 71.5,285.1 70.5,287.3 69.6,289.5 68.6,291.7 67.7,293.9 66.8,296.2 65.9,298.4 65.0,300.6 64.1,302.9 63.2,305.1 62.4,307.4 61.5,309.6 60.6,311.9 59.8,314.1 58.9,316.4 58.0,318.6 57.2,320.9 56.3,323.1 55.4,325.4 54.5,327.6 53.7,329.9 52.8,332.1 51.9,334.4 51.0,336.6 50.1,338.8 49.2,341.1 48.3,343.3 47.4,345.5 46.5,347.8 45.7,350.0 44.8,352.3 44.0,354.6 43.2,356.8 42.4,359.1 41.6,361.4 40.7,363.7 39.9,365.9 39.1,368.2 38.3,370.5 37.5,372.8 36.8,375.0 36.0,377.3 35.2,379.6 34.4,381.9 33.7,384.2 32.9,386.5 32.1,388.8 31.4,391.1 30.7,393.4 30.0,395.7 29.3,398.0 28.6,400.3 28.0,402.6 27.4,405.0 26.8,407.3 26.2,409.6 25.7,412.0 25.2,414.3 24.7,416.7 24.2,419.1 23.8,421.4 23.4,423.8 23.0,426.2 22.6,428.6 22.2,431.0 21.9,433.4 21.6,435.7 21.4,438.2 21.3,440.6 21.2,443.0 21.1,445.4 21.1,447.8 21.0,450.2 21.0,452.6 21.0,455.0 21.0,457.4 21.0,459.8 21.1,462.3 21.2,464.7 21.3,467.1 21.4,469.5 21.6,471.9 21.8,474.3 22.0,476.7 22.2,479.1 22.4,481.5 22.6,483.9 22.8,486.3 23.1,488.7 23.4,491.1 23.8,493.5 24.2,495.9 24.7,498.2 25.2,500.6 25.7,502.9 26.3,505.3 26.9,507.6 27.5,509.9 28.1,512.3 28.8,514.6 29.4,516.9 30.1,519.2 30.8,521.5 31.5,523.9 32.2,526.2 33.0,528.4 33.7,530.7 34.5,533.0 35.3,535.3 36.1,537.6 37.0,539.8 37.9,542.1 38.9,544.3 39.8,546.5 40.8,548.7 41.9,550.8 42.9,553.0 44.0,555.2 45.0,557.4 46.1,559.5 47.2,561.7 48.3,563.8 49.4,566.0 50.5,568.1 51.6,570.2 52.7,572.4 53.9,574.5 55.1,576.6 56.2,578.7 57.4,580.8 58.7,582.9 59.9,584.9 61.3,586.9 62.6,588.9 64.0,590.9 65.4,592.9 66.8,594.8 68.3,596.7 69.8,598.6 71.3,600.5 72.8,602.4 74.4,604.2 75.9,606.1 77.5,607.9 79.1,609.7 80.7,611.5 82.4,613.2 84.1,615.0 85.7,616.7 87.4,618.4 89.2,620.1 90.9,621.7 92.7,623.4 94.5,625.0 96.4,626.5 98.2,628.1 100.1,629.6 101.9,631.1 103.8,632.7 105.6,634.2 107.5,635.8 109.3,637.4 111.1,639.0 112.8,640.6 114.6,642.3 116.3,644.0 117.9,645.8 119.6,647.5 121.3,649.2 123.0,651.0 124.6,652.7 126.3,654.4 128.0,656.2 129.7,657.8 131.5,659.5 133.2,661.2 134.9,662.9 136.7,664.5 138.4,666.2 140.2,667.8 141.9,669.5 143.7,671.2 145.5,672.8 147.2,674.5 149.0,676.1 150.7,677.8 152.5,679.4 154.2,681.1 156.0,682.7 157.7,684.4 159.5,686.1 161.2,687.7 163.0,689.4 164.7,691.0 166.5,692.7 168.2,694.4 170.0,696.0 171.7,697.7 173.5,699.4 175.2,701.0 176.9,702.7 178.7,704.4 180.4,706.0 182.2,707.7 183.9,709.3 185.7,711.0 187.4,712.7 189.2,714.3 190.9,716.0 192.7,717.6 194.4,719.3 196.2,721.0 197.9,722.6 199.7,724.3 201.4,725.9 203.2,727.6 205.0,729.2 206.8,730.8 208.6,732.4 210.4,734.0 212.2,735.6 214.1,737.1 215.9,738.7 217.8,740.2 219.6,741.8 221.5,743.3 223.4,744.8 225.3,746.3 227.2,747.7 229.1,749.2 231.1,750.6 233.1,752.0 235.1,753.3 237.1,754.6 239.1,755.9 241.2,757.2 243.3,758.4 245.4,759.6 247.5,760.7 249.6,761.9 251.7,763.0 253.9,764.1 256.0,765.2 258.2,766.3 260.4,767.4 262.5,768.4 264.7,769.4 266.9,770.4 269.1,771.3 271.4,772.3 273.6,773.2 275.9,774.1 278.1,774.9 280.4,775.8 282.6,776.6 284.9,777.4 287.2,778.1 289.5,778.8 291.8,779.5 294.2,780.1 296.5,780.7 298.8,781.3 301.2,781.8 303.6,782.2 305.9,782.7 308.3,783.0 310.7,783.4 313.1,783.6 315.5,783.9 317.9,784.1 320.3,784.2 322.7,784.4 325.1,784.5 327.5,784.6 330.0,784.7 332.4,784.7 334.8,784.8 337.2,784.8 339.6,784.8 342.0,784.8 344.4,784.7 346.8,784.7 349.2,784.6 351.7,784.4 354.1,784.3 356.5,784.0 358.9,783.8 361.3,783.5 363.6,783.1 366.0,782.8 368.4,782.4 370.8,781.9 373.1,781.5 375.5,781.0 377.9,780.4 380.2,779.9 382.5,779.3 384.9,778.7 387.2,778.1 389.5,777.4 391.9,776.8 394.2,776.1 396.5,775.4 398.8,774.7 401.1,773.9 403.4,773.2 405.7,772.4 408.0,771.7 410.3,771.0 412.6,770.3 414.9,769.7 417.2,769.0 419.5,768.4 421.9,767.7 424.2,767.1 426.5,766.4 428.8,765.8 431.2,765.1 433.5,764.4 435.8,763.8 438.1,763.1 440.4,762.4 442.7,761.8 445.1,761.1 447.4,760.5 449.7,759.8 452.0,759.1 454.3,758.5 456.7,757.8 459.0,757.1 461.3,756.4 463.6,755.7 465.9,755.0 468.2,754.3 470.5,753.6 472.8,752.8 475.1,752.0 477.4,751.3 479.6,750.5 481.9,749.7 484.2,748.9 486.5,748.1 488.7,747.3 491.0,746.4 493.3,745.6 495.5,744.8 497.8,744.0 500.1,743.1 502.3,742.3 504.6,741.5 507.3,740.0 509.5,737.2 511.0,733.1 511.9,728.0 512.1,722.0 511.5,715.5 510.2,708.8 508.2,702.0 505.7,695.6 502.8,689.7 499.5,684.7 496.0,680.8 492.5,678.1 489.1,676.8 486.0,676.9 484.6,676.0 482.6,676.4 480.7,676.9 478.7,677.5 476.8,678.1 474.9,678.7 473.0,679.4 471.0,680.0 469.1,680.7 467.2,681.3 465.3,682.0 463.4,682.6 461.5,683.3 459.6,684.0 457.7,684.6 455.7,685.3 453.8,685.9 451.9,686.6 450.0,687.3 448.1,687.9 446.2,688.6 444.3,689.3 442.4,689.9 440.4,690.6 438.5,691.2 436.6,691.9 434.7,692.5 432.8,693.1 430.8,693.8 428.9,694.4 427.0,695.0 425.1,695.6 423.1,696.2 421.2,696.8 419.3,697.4 417.3,698.0 415.4,698.6 413.5,699.2 411.5,699.8 409.6,700.4 407.7,701.0 405.7,701.6 403.8,702.2 401.9,702.8 400.0,703.5 398.0,704.1 396.1,704.7 394.2,705.4 392.3,706.1 390.4,706.7 388.5,707.3 386.5,708.0 384.6,708.6 382.7,709.2 380.7,709.8 378.8,710.4 376.9,711.0 374.9,711.6 373.0,712.1 371.1,712.7 369.1,713.3 367.2,713.8 365.2,714.2 363.2,714.7 361.2,715.0 359.2,715.4 357.2,715.7 355.2,715.9 353.2,716.2 351.2,716.3 349.2,716.5 347.2,716.5 345.1,716.6 343.1,716.5 341.1,716.4 339.1,716.2 337.1,716.0 335.1,715.7 333.1,715.4 331.1,715.1 329.1,714.7 327.1,714.3 325.1,713.9 323.1,713.4 321.2,713.0 319.2,712.5 317.3,712.0 315.3,711.4 313.4,710.9 311.4,710.3 309.5,709.7 307.5,709.1 305.6,708.5 303.7,707.8 301.8,707.1 299.9,706.4 298.1,705.6 296.2,704.8 294.4,703.9 292.5,703.1 290.7,702.2 288.9,701.3 287.1,700.4 285.3,699.5 283.5,698.5 281.8,697.5 280.0,696.5 278.2,695.5 276.5,694.5 274.8,693.4 273.1,692.3 271.4,691.2 269.7,690.0 268.1,688.9 266.5,687.7 264.9,686.4 263.3,685.2 261.7,683.9 260.2,682.5 258.7,681.2 257.2,679.9 255.7,678.5 254.2,677.2 252.7,675.8 251.2,674.4 249.7,673.1 248.2,671.7 246.7,670.4 245.1,669.0 243.6,667.7 242.1,666.3 240.6,665.0 239.1,663.6 237.6,662.3 236.1,660.9 234.6,659.5 233.1,658.2 231.6,656.8 230.1,655.4 228.6,654.1 227.1,652.7 225.6,651.4 224.1,650.0 222.6,648.7 221.1,647.3 219.6,646.0 218.1,644.6 216.6,643.3 215.0,642.0 213.5,640.7 211.9,639.4 210.4,638.1 208.8,636.8 207.3,635.5 205.7,634.2 204.1,633.0 202.6,631.7 201.0,630.4 199.4,629.1 197.9,627.8 196.3,626.5 194.8,625.2 193.2,623.9 191.7,622.6 190.2,621.3 188.7,619.9 187.2,618.6 185.7,617.2 184.2,615.8 182.7,614.4 181.2,613.0 179.8,611.7 178.3,610.3 176.8,608.9 175.4,607.5 173.9,606.1 172.5,604.7 171.0,603.3 169.5,601.9 168.0,600.5 166.6,599.1 165.1,597.7 163.6,596.4 162.1,595.0 160.6,593.6 159.2,592.2 157.7,590.8 156.2,589.4 154.7,588.1 153.3,586.7 151.8,585.3 150.3,583.9 148.8,582.5 147.3,581.2 145.9,579.8 144.4,578.4 142.8,577.1 141.3,575.8 139.8,574.4 138.3,573.1 136.8,571.7 135.3,570.4 133.8,569.0 132.3,567.6 130.9,566.2 129.5,564.7 128.1,563.2 126.8,561.7 125.5,560.2 124.2,558.6 122.9,557.0 121.7,555.4 120.5,553.8 119.3,552.1 118.2,550.5 117.1,548.8 116.0,547.1 114.9,545.4 113.8,543.7 112.8,541.9 111.9,540.1 110.9,538.3 110.0,536.5 109.1,534.7 108.1,532.9 107.2,531.1 106.3,529.3 105.4,527.5 104.5,525.7 103.6,523.9 102.7,522.1 101.9,520.2 101.0,518.4 100.2,516.6 99.4,514.7 98.7,512.8 98.0,510.9 97.4,509.0 96.7,507.0 96.1,505.1 95.6,503.2 95.0,501.2 94.5,499.3 94.0,497.3 93.5,495.4 93.0,493.4 92.6,491.4 92.2,489.4 91.8,487.4 91.4,485.5 91.0,483.5 90.7,481.5 90.4,479.5 90.1,477.5 89.8,475.5 89.6,473.5 89.4,471.4 89.2,469.4 89.0,467.4 88.9,465.4 88.8,463.4 88.7,461.4 88.7,459.3 88.7,457.3 88.8,455.3 88.8,453.3 88.9,451.2 89.1,449.2 89.2,447.2 89.3,445.2 89.5,443.2 89.7,441.2 89.9,439.1 90.1,437.1 90.4,435.1 90.7,433.1 91.0,431.1 91.5,429.2 91.9,427.2 92.4,425.2 93.0,423.3 93.6,421.4 94.2,419.4 94.9,417.5 95.5,415.6 96.2,413.7 96.9,411.8 97.7,409.9 98.4,408.0 99.1,406.1 99.8,404.2 100.5,402.3 101.2,400.4 101.9,398.5 102.6,396.6 103.3,394.8 104.0,392.9 104.7,391.0 105.4,389.1 106.2,387.2 106.9,385.3 107.6,383.4 108.3,381.5 109.0,379.6 109.7,377.7 110.5,375.8 111.2,373.9 111.9,372.1 112.6,370.2 113.4,368.3 114.1,366.4 114.8,364.5 115.5,362.6 116.2,360.7 116.9,358.8 117.7,356.9 118.4,355.0 119.1,353.1 119.8,351.3 120.6,349.4 121.3,347.5 122.1,345.6 122.8,343.7 123.6,341.9 124.4,340.0 125.2,338.1 125.9,336.3 126.7,334.4 127.5,332.5 128.4,330.7 129.2,328.8 130.0,327.0 130.8,325.2 131.7,323.3 132.5,321.5 133.4,319.6 134.2,317.8 135.1,316.0 136.0,314.2 136.9,312.3 137.8,310.5 138.7,308.7 139.6,306.9 140.5,305.1 141.4,303.3 142.3,301.5 143.3,299.7 144.2,297.9 145.2,296.1 146.1,294.3 147.1,292.6 148.1,290.8 149.0,289.0 150.0,287.3 151.0,285.5 152.0,283.7 153.0,282.0 154.0,280.2 155.0,278.5 156.0,276.7 157.0,274.9 158.0,273.2 158.9,271.4 159.9,269.6 160.8,267.8 161.7,266.0 162.6,264.2 163.5,262.4 164.4,260.5 165.3,258.7 166.1,256.9 167.1,255.1 168.0,253.3 169.0,251.5 170.0,249.8 171.1,248.1 172.2,246.4 173.3,244.7 174.4,243.0 175.5,241.3 176.7,239.7 177.9,238.0 179.1,236.4 180.3,234.8 181.5,233.2 182.8,231.6 184.0,230.0 185.3,228.4 186.6,226.8 187.9,225.3 189.2,223.8 190.6,222.3 191.9,220.8 193.3,219.3 194.7,217.8 196.1,216.4 197.5,214.9 198.9,213.5 200.3,212.0 201.8,210.6 203.2,209.2 204.6,207.7 206.1,206.3 207.6,205.0 209.1,203.6 210.6,202.3 212.2,201.0 213.7,199.7 215.2,198.3 216.8,197.0 218.3,195.7 219.9,194.4 221.4,193.1 223.0,191.9 224.6,190.6 226.2,189.4 227.9,188.3 229.6,187.1 231.3,186.1 233.0,185.0 234.8,184.0 236.6,183.1 238.4,182.2 240.2,181.3 242.0,180.4 243.9,179.6 245.7,178.8 247.6,178.1 249.5,177.4 251.4,176.7 253.4,176.1 255.3,175.6 257.3,175.2 259.3,174.8 261.3,174.4 263.2,174.0 265.2,173.6 267.2,173.2 269.2,172.8 271.2,172.4 273.2,172.1 275.2,171.7 277.2,171.3 279.2,171.0 281.1,170.6 283.1,170.3 285.1,170.0 287.1,169.6 289.1,169.3 291.1,169.0 293.1,168.7 295.1,168.4 297.1,168.2 299.1,167.9 301.2,167.6 303.2,167.4 305.2,167.1 307.2,166.9 309.2,166.7 311.2,166.5 313.2,166.2 315.2,166.0 317.2,165.8 319.3,165.6 321.3,165.4 323.3,165.2 325.3,165.0 327.3,164.8 329.3,164.6 331.3,164.4 333.3,164.2 335.4,164.0 337.4,163.8 339.4,163.7 341.4,163.5 343.4,163.3 345.4,163.1 347.4,162.9 349.5,162.6 351.5,162.4 353.5,162.2 355.5,162.0 357.5,161.8 359.5,161.6 361.5,161.3 363.5,161.1 365.5,160.8 367.5,160.6 369.5,160.3 371.6,160.0 373.6,159.7 375.6,159.4 377.6,159.2 379.6,158.9 381.6,158.6 383.6,158.3 385.6,158.0 387.6,157.7 389.6,157.4 391.6,157.1 393.6,156.8 395.6,156.6 397.6,156.3 399.6,156.1 401.6,155.8 403.6,155.6 405.6,155.3 407.6,155.1 409.6,154.8 411.6,154.6 413.7,154.3 415.7,154.1 417.7,153.9 419.7,153.6 421.7,153.4 423.7,153.2 425.7,152.9 427.7,152.7 429.7,152.5 431.7,152.2 433.8,152.0 435.8,151.8 437.8,151.5 439.8,151.3 441.8,151.1 443.8,150.8 445.8,150.6 447.8,150.4 449.8,150.1 451.8,149.9 453.8,149.6 455.9,149.4 457.9,149.1 459.9,148.9 461.9,148.6 463.9,148.4 465.9,148.1 467.9,147.9 469.9,147.6 471.9,147.3 473.9,147.1 475.9,146.8 477.9,146.5 479.9,146.2 481.9,145.9 483.9,145.6 485.9,145.3 487.9,145.0 489.9,144.7 491.9,144.4 493.9,144.1 495.9,143.8 497.9,143.5 499.9,143.2 501.9,142.9 503.9,142.6 505.9,142.2 507.9,141.9 509.9,141.6 511.9,141.3 513.9,141.0 515.9,140.7 517.9,140.4 519.9,140.1 521.9,139.8 523.9,139.5 525.9,139.2 527.9,138.8 529.9,138.5 531.9,138.2 533.9,137.9 535.9,137.6 537.9,137.3 539.9,137.0 541.9,136.7 543.9,136.4 545.9,136.1 547.9,135.8 549.9,135.5 551.9,135.2 553.9,134.9 555.9,134.6 557.9,134.3 559.9,134.0 561.9,133.7 563.9,133.4 565.9,133.1 567.9,132.8 569.9,132.5 571.9,132.2 573.9,131.9 575.9,131.7 577.9,131.4 579.9,131.1 582.0,130.8 584.0,130.6 586.0,130.3 588.0,130.2 590.0,130.0Z" fill="#0000e0"/><g filter="url(#bl)"><path fill="#000058" d="M619,130 609,131 599,132 589,134 579,135 569,136 559,138 549,139 539,141 529,142 519,144 509,145 499,147 489,148 479,150 469,151 458,153 448,154 438,155 428,156 418,157 408,159 397,160 387,161 377,163 367,164 357,165 347,166 336,167 326,168 316,170 306,171 297,172 287,173 278,175 269,177 261,178 254,180 248,182 242,185 235,189 228,193 221,198 214,204 208,210 201,216 195,223 189,229 184,236 179,243 174,251 170,259 165,267 160,275 156,284 151,293 147,301 142,310 138,318 135,326 131,335 127,344 123,353 113,349 117,339 120,330 124,322 128,313 132,305 137,296 141,287 146,279 151,270 156,261 160,253 165,245 170,237 176,230 182,223 188,216 194,209 201,202 207,196 214,190 222,185 229,180 236,176 243,173 251,170 258,168 267,166 276,164 285,163 295,161 305,160 315,159 325,158 335,157 345,155 356,154 366,153 376,152 386,151 396,149 406,148 416,147 426,145 437,144 447,143 457,142 467,140 477,139 487,137 497,136 508,134 518,133 528,131 538,130 548,128 558,127 568,126 578,124 588,123 598,122 608,120 618,119ZM271,763 282,767 293,771 305,774 317,776 329,777 341,777 353,776 365,775 377,773 388,770 391,780 379,783 367,785 354,787 341,788 328,788 315,787 302,785 290,782 278,778 266,773Z"/>
<path fill="#00005c" d="M123,353 120,362 116,371 112,381 109,390 106,399 102,408 92,404 95,395 99,386 102,377 106,367 109,358 113,349ZM260,758 271,763 266,773 255,768Z"/>
<path fill="#000060" d="M102,408 99,416 97,425 86,422 89,413 92,404Z"/>
<path fill="#000064" d="M97,425 95,432 84,430 86,422ZM250,752 260,758 255,768 244,762Z"/>
<path fill="#00006c" d="M95,432 94,440 83,439 84,430ZM230,739 240,746 233,756 223,749Z"/>
<path fill="#000070" d="M94,440 93,448 82,447 83,439ZM221,732 230,739 223,749 214,741Z"/>
<path fill="#000078" d="M93,448 93,456 82,456 82,447ZM100,620 108,627 116,634 123,641 130,648 137,655 145,662 152,669 160,676 167,683 175,690 182,697 190,704 197,711 205,718 213,725 205,734 197,727 189,719 182,712 175,705 167,699 160,692 153,684 145,677 137,670 130,663 123,656 115,649 108,642 101,635 93,628Z"/>
<path fill="#00007c" d="M93,456 93,464 82,465 82,456ZM93,612 100,620 93,628 85,620Z"/>
<path fill="#000084" d="M93,464 94,472 83,473 82,465ZM259,171 252,173 245,175 238,178 231,182 225,173 232,169 240,165 248,162 256,160Z"/>
<path fill="#000088" d="M94,472 95,480 84,482 83,473ZM618,122 608,123 598,125 588,126 578,127 568,128 558,130 548,131 538,133 528,134 518,136 508,137 498,139 488,140 478,142 467,143 457,145 447,146 437,147 427,148 417,149 407,151 396,152 386,153 376,155 366,156 356,157 346,158 336,159 325,161 315,162 305,163 296,164 286,166 276,167 267,169 259,171 256,160 265,158 275,156 284,155 294,153 304,152 314,151 324,150 334,149 344,148 355,146 365,145 375,144 385,143 395,141 405,140 415,139 425,137 436,136 446,135 456,134 466,132 476,131 486,129 496,128 506,126 516,125 526,123 536,122 546,121 557,119 567,118 577,116 587,115 597,114 607,113 617,111ZM231,182 223,187 216,192 209,198 202,190 210,184 217,179 225,173ZM353,768 364,767 375,765 386,762 389,773 378,775 366,778 353,779ZM77,595 85,604 77,611 69,602Z"/>
<path fill="#000090" d="M95,480 96,488 85,491 84,482ZM184,224 178,232 173,239 164,233 170,225 176,218ZM318,767 330,769 341,769 341,780 329,780 316,779ZM70,585 77,595 69,602 61,591Z"/>
<path fill="#000094" d="M96,488 98,496 87,499 85,491ZM173,239 168,246 163,255 158,263 149,257 154,249 159,241 164,233ZM307,765 318,767 316,779 304,777ZM64,576 70,585 61,591 54,581Z"/>
<path fill="#00009c" d="M98,496 100,504 90,508 87,499ZM135,306 131,314 127,323 123,332 113,327 117,318 121,310 125,301ZM285,759 296,763 292,774 281,770ZM58,566 64,576 54,581 48,571Z"/>
<path fill="#0000a0" d="M100,504 103,512 93,516 90,508ZM123,332 119,341 116,350 112,359 108,368 105,378 101,387 98,396 87,393 91,383 94,374 98,364 102,355 105,346 109,336 113,327ZM274,755 285,759 281,770 270,766ZM53,556 58,566 48,571 43,560Z"/>
<path fill="#0000a8" d="M103,512 106,520 96,524 93,516ZM89,423 87,431 77,429 79,420ZM244,739 254,745 248,755 238,749Z"/>
<path fill="#0000ac" d="M106,520 110,528 100,532 96,524ZM87,431 86,439 75,438 77,429ZM235,733 244,739 238,749 228,742ZM44,535 48,545 38,550 34,539Z"/>
<path fill="#0000b0" d="M110,528 114,535 104,540 100,532ZM86,439 85,447 74,447 75,438ZM226,726 235,733 228,742 219,735ZM40,524 44,535 34,539 29,527Z"/>
<path fill="#0000b8" d="M114,535 118,542 109,548 104,540ZM85,447 85,456 74,456 74,447ZM98,607 106,614 113,621 121,628 128,635 136,642 143,649 150,656 158,663 151,671 143,664 136,657 128,650 121,643 114,636 106,629 98,622 91,614ZM36,513 40,524 29,527 26,516Z"/>
<path fill="#0000bc" d="M118,542 122,549 113,555 109,548ZM85,456 85,464 74,465 74,456ZM617,114 607,115 597,117 587,118 577,119 567,121 557,122 547,123 537,125 527,126 517,128 507,129 497,131 487,132 477,134 466,135 456,137 446,138 436,139 426,140 416,142 406,143 395,144 385,145 375,147 365,148 355,149 345,150 335,152 325,153 314,154 304,155 295,156 285,158 275,159 266,161 257,163 249,165 241,168 234,171 226,176 219,181 211,187 205,178 213,173 220,167 229,162 237,158 245,155 254,152 264,150 273,148 283,147 293,145 303,144 313,143 323,142 333,141 344,140 354,138 364,137 374,136 384,135 394,133 404,132 414,131 424,130 435,128 445,127 455,126 465,124 475,123 485,121 495,120 505,118 515,117 525,116 535,114 545,113 555,111 566,110 576,109 586,107 596,106 606,105 616,104ZM363,759 374,757 384,754 387,765 376,768 365,770ZM91,599 98,607 91,614 83,606ZM34,501 36,513 26,516 23,504Z"/>
<path fill="#0000c4" d="M122,549 127,555 118,562 113,555ZM86,473 87,481 76,483 75,474ZM178,220 172,227 166,234 161,242 152,236 158,228 164,220 170,213ZM309,757 319,759 330,760 329,771 318,770 306,768ZM83,590 91,599 83,606 75,597ZM32,490 34,501 23,504 21,492Z"/>
<path fill="#0000c8" d="M127,555 132,561 124,568 118,562ZM87,481 88,490 78,492 76,483ZM161,242 156,250 151,259 146,267 142,276 137,285 132,294 128,302 118,297 122,288 127,279 132,271 137,262 142,253 147,245 152,236ZM298,755 309,757 306,768 295,766ZM76,581 83,590 75,597 68,587ZM30,479 32,490 21,492 19,480Z"/>
<path fill="#0000d0" d="M132,561 138,567 130,575 124,568ZM90,498 93,507 82,510 80,501ZM104,356 101,365 97,375 94,384 90,394 87,403 84,412 81,421 71,418 73,409 76,399 80,390 83,380 87,371 90,361 94,352ZM258,738 268,743 278,747 273,758 263,753 252,748ZM65,562 70,571 61,577 55,567ZM29,467 30,479 19,480 18,468Z"/>
<path fill="#0000d4" d="M138,567 144,574 137,582 130,575ZM93,507 95,515 85,519 82,510ZM81,421 79,429 69,427 71,418ZM249,732 258,738 252,748 243,742ZM60,552 65,562 55,567 50,557ZM29,455 29,467 18,468 18,455Z"/>
<path fill="#0000d8" d="M144,574 152,580 159,587 166,594 174,601 181,608 189,615 196,621 189,630 181,623 174,616 167,609 159,602 152,595 144,588 137,582ZM95,515 99,523 89,527 85,519ZM79,429 78,438 77,447 66,446 67,437 69,427ZM232,719 240,726 249,732 243,742 233,735 224,728ZM55,542 60,552 50,557 45,546Z"/>
<path fill="#0000dc" d="M196,621 204,628 211,635 219,641 227,648 235,655 242,661 250,668 257,674 264,680 256,689 249,683 242,677 235,670 227,663 219,656 212,650 204,643 196,636 189,630ZM99,523 103,531 93,536 89,527ZM77,447 77,456 66,456 66,446ZM111,608 119,615 126,622 134,629 141,636 148,643 156,650 163,657 171,664 178,671 186,678 193,685 201,692 208,699 216,706 224,712 232,719 224,728 216,721 208,714 201,707 193,700 186,693 178,686 171,679 163,672 156,665 148,658 141,651 134,644 126,637 119,630 112,623 104,616ZM51,532 55,542 45,546 41,536ZM29,444 29,455 18,455 18,443Z"/>
<path fill="#0000e0" d="M264,680 270,685 263,694 256,689ZM103,531 107,539 97,544 93,536ZM77,456 77,465 66,465 66,456ZM97,593 104,601 111,608 104,616 96,609 89,601ZM47,521 51,532 41,536 37,525ZM30,432 29,444 18,443 19,431Z"/>
<path fill="#0000e4" d="M270,685 277,690 270,699 263,694ZM107,539 111,546 102,552 97,544ZM77,465 78,474 79,483 68,484 67,475 66,465ZM89,585 97,593 89,601 81,592ZM44,511 47,521 37,525 34,513Z"/>
<path fill="#0000ec" d="M277,690 284,694 278,704 270,699ZM80,492 82,501 72,503 70,494ZM166,222 160,230 155,238 149,246 144,255 139,263 135,272 130,281 125,290 120,298 116,307 112,316 102,312 106,302 110,293 115,284 120,275 125,267 130,258 135,249 140,240 146,232 152,224 158,216ZM290,743 300,747 310,749 321,751 331,752 330,763 319,762 308,760 297,758 287,754ZM77,567 83,576 74,582 68,573ZM35,409 32,420 21,418 24,406Z"/>
<path fill="#0000f0" d="M284,694 290,697 285,708 278,704ZM116,554 121,560 112,567 107,560ZM82,501 85,509 88,518 78,522 75,512 72,503ZM112,316 108,325 104,334 100,344 97,353 93,363 89,372 86,381 83,391 79,400 76,409 74,419 63,416 66,406 69,397 72,387 76,378 79,368 83,359 86,349 90,340 94,330 98,321 102,312ZM262,730 272,735 281,740 290,743 287,754 276,750 266,746 257,740ZM67,549 72,558 77,567 68,573 62,563 57,553ZM39,489 41,500 31,502 29,491ZM38,398 35,409 24,406 27,395Z"/>
<path fill="#0000f4" d="M290,697 298,701 293,711 285,708ZM121,560 126,567 118,574 112,567ZM88,518 92,526 82,531 78,522ZM74,419 72,428 70,437 69,446 58,446 59,436 61,426 63,416ZM229,706 237,713 245,719 254,725 262,730 257,740 247,735 238,728 230,722 222,715ZM62,539 67,549 57,553 53,543ZM38,478 39,489 29,491 27,479ZM48,367 44,377 41,387 38,398 27,395 30,384 34,374 37,364Z"/>
<path fill="#0000f8" d="M298,701 305,704 301,714 293,711ZM126,567 132,573 124,581 118,574ZM92,526 95,535 100,543 90,548 86,539 82,531ZM69,446 69,456 69,465 70,475 59,476 58,466 58,456 58,446ZM102,588 110,595 117,602 124,609 132,616 139,623 147,630 154,637 161,644 169,651 176,658 184,665 191,672 199,679 206,686 214,692 222,699 229,706 222,715 214,708 206,701 199,694 191,687 184,680 176,673 169,666 161,659 154,652 147,645 139,638 132,631 124,624 117,617 109,610 102,603 94,595ZM55,519 58,529 62,539 53,543 48,533 45,522ZM37,467 38,478 27,479 26,467ZM70,309 66,319 62,329 58,338 55,348 51,358 48,367 37,364 41,354 44,344 48,334 52,325 56,315 60,305Z"/>
<path fill="#0000ff" d="M305,704 312,706 319,708 327,710 334,711 341,712 349,712 356,712 364,710 372,708 381,706 384,716 375,719 366,721 358,722 349,723 341,723 333,722 325,721 317,719 309,717 301,714ZM139,580 146,586 153,593 161,600 169,607 176,614 183,621 191,627 198,634 206,641 214,647 221,654 229,661 237,668 244,674 251,681 258,686 265,692 272,697 279,701 287,705 294,708 302,712 310,714 318,716 326,718 333,720 341,720 349,720 357,719 365,718 374,716 383,713 386,724 377,726 368,729 359,730 350,731 341,731 333,731 324,729 315,728 307,725 298,722 290,719 282,715 274,711 266,706 258,701 251,695 244,689 236,683 229,676 221,669 214,662 206,656 198,649 191,642 183,636 176,629 168,622 161,615 154,608 146,601 139,594 131,587ZM104,551 109,558 114,565 120,572 126,579 133,585 141,592 148,599 156,606 163,613 170,620 178,627 185,633 193,640 200,647 208,653 216,660 223,667 231,674 238,681 246,687 253,693 260,699 267,704 275,708 283,713 291,716 299,720 307,722 316,725 324,726 333,728 341,728 350,728 358,727 367,726 376,724 379,734 369,736 360,738 351,739 341,739 332,739 323,738 313,736 304,733 295,730 286,727 278,723 269,718 261,713 253,708 246,702 238,696 231,689 223,682 216,675 208,669 201,662 193,655 185,648 178,641 170,635 163,628 156,621 148,614 141,607 133,600 126,593 119,586 112,579 106,572 100,564 95,556ZM73,493 75,503 77,512 81,521 84,529 88,538 93,547 98,555 103,563 108,570 114,577 121,584 128,591 135,598 143,605 150,612 158,619 165,626 172,633 180,639 187,646 195,653 203,660 210,666 218,673 225,680 233,687 240,693 248,700 255,705 263,711 271,716 279,720 288,724 296,727 305,730 314,733 323,735 332,736 341,736 350,736 360,735 369,734 378,731 381,742 371,744 361,746 351,747 341,747 331,747 321,746 312,744 302,741 292,738 283,735 274,730 265,726 257,720 248,715 240,708 233,702 225,695 218,688 210,682 203,675 195,668 187,661 180,654 172,647 165,641 157,634 150,627 143,620 135,613 128,606 120,599 113,592 106,585 100,577 94,569 88,560 83,552 79,543 74,534 71,524 67,515 64,505 62,496ZM615,99 605,100 595,101 585,102 575,104 565,105 555,106 545,108 535,109 525,110 515,112 504,113 494,115 484,116 474,118 464,119 454,120 444,122 434,123 424,124 414,126 404,127 393,128 383,130 373,131 363,132 353,133 343,134 333,136 323,137 313,138 303,139 292,140 282,142 272,143 263,145 253,147 244,150 235,153 226,158 218,163 210,169 202,175 194,181 187,188 180,195 173,202 166,210 160,217 154,225 148,233 143,242 138,251 132,259 127,268 123,277 118,286 113,295 109,304 104,313 100,322 97,331 93,341 89,350 85,360 82,369 78,379 75,388 72,398 68,407 66,417 64,426 62,436 61,446 61,456 61,466 62,475 63,485 65,495 67,505 70,514 73,523 77,533 81,542 86,550 91,559 96,567 102,575 108,583 115,590 122,597 130,604 137,611 145,618 152,625 159,632 167,638 174,645 182,652 189,659 197,666 205,673 212,679 220,686 227,693 235,700 242,706 250,712 258,718 267,723 275,728 284,732 293,735 303,738 312,741 322,743 331,744 341,744 351,744 361,743 370,741 380,739 383,750 373,752 362,754 352,755 341,756 331,755 320,754 310,752 299,750 289,746 280,742 270,738 261,733 252,727 243,721 235,715 227,708 220,702 212,695 204,688 197,681 189,674 182,667 174,660 167,653 159,646 152,639 145,632 137,625 130,619 122,612 115,605 108,597 100,590 93,582 87,573 82,565 76,556 71,546 67,537 63,527 60,517 57,507 54,497 52,487 51,477 50,466 50,456 50,445 51,435 53,424 55,414 58,404 61,394 64,384 68,375 71,365 75,356 79,346 82,337 86,327 90,318 94,308 98,299 103,290 108,280 113,271 118,263 123,254 128,245 134,236 139,228 145,219 152,211 158,203 165,195 172,188 180,180 187,173 195,167 203,160 212,154 221,148 230,144 240,140 250,137 261,134 271,133 281,131 291,130 301,128 311,127 321,126 332,125 342,124 352,122 362,121 372,120 382,119 392,118 402,116 412,115 422,114 432,112 443,111 453,110 463,108 473,107 483,105 493,104 503,103 513,101 523,100 533,98 543,97 553,96 564,94 574,93 584,92 594,90 604,89 614,88ZM614,91 604,92 594,93 584,95 574,96 564,97 554,98 544,100 534,101 524,103 513,104 503,105 493,107 483,108 473,110 463,111 453,112 443,114 433,115 423,117 413,118 403,119 392,120 382,122 372,123 362,124 352,125 342,127 332,128 322,129 312,130 302,131 291,133 281,134 271,135 261,137 251,139 241,142 231,146 222,151 213,156 205,162 197,169 189,175 181,182 174,189 167,197 160,205 154,213 148,221 142,229 136,238 131,246 126,255 120,264 115,273 110,282 106,291 101,300 97,309 93,319 89,328 85,338 81,347 78,357 74,366 71,376 67,385 64,395 61,405 58,415 56,425 54,435 53,445 53,456 53,466 54,476 55,486 57,497 59,507 62,517 66,526 70,536 74,545 79,554 84,563 90,572 81,578 75,569 69,559 64,550 60,540 56,530 52,520 49,509 46,499 44,488 43,477 42,466 42,456 42,445 43,434 45,423 47,412 50,402 53,392 57,382 60,372 64,362 67,353 71,343 75,334 79,324 82,314 87,305 91,295 96,286 101,277 106,267 111,259 116,250 121,241 127,232 133,223 139,215 146,206 152,198 159,190 167,182 174,175 182,168 190,161 199,154 208,148 217,142 227,136 237,132 248,129 259,126 270,125 280,123 290,122 300,121 310,119 321,118 331,117 341,116 351,114 361,113 371,112 381,111 391,110 401,108 411,107 421,106 431,104 441,103 452,102 462,100 472,99 482,97 492,96 502,95 512,93 522,92 532,90 542,89 552,88 562,87 573,85 583,84 593,83 603,81 613,80ZM613,83 603,84 593,85 583,87 573,88 563,89 553,91 543,92 533,93 522,95 512,96 502,97 492,99 482,100 472,102 462,103 452,104 442,106 432,107 422,109 412,110 402,111 391,112 381,114 371,115 361,116 351,117 341,119 331,120 321,121 311,122 301,123 290,125 280,126 270,128 260,129 249,132 238,135 228,139 218,144 209,150 200,156 192,163 184,170 176,177 169,184 161,192 154,200 148,208 141,216 135,225 129,234 124,242 119,251 113,260 108,269 103,278 98,287 94,297 89,306 85,316 81,325 77,335 74,344 70,354 66,363 63,373 59,383 56,393 53,403 50,413 48,423 46,434 45,445 45,456 45,466 46,477 47,488 49,498 52,509 41,511 39,500 37,489 35,478 34,467 34,456 34,444 35,433 37,421 40,410 42,399 46,389 49,379 53,369 56,359 60,350 63,340 67,331 71,321 75,311 79,301 84,292 88,282 93,273 98,264 104,255 109,246 115,237 120,228 126,219 133,210 140,201 147,193 154,185 161,177 169,169 177,162 186,155 194,148 203,141 213,135 224,129 235,124 246,121 257,118 268,117 279,115 289,114 299,113 309,111 320,110 330,109 340,108 350,107 360,105 370,104 380,103 390,102 400,100 410,99 420,98 430,96 440,95 450,94 460,92 470,91 481,89 491,88 501,87 511,85 521,84 531,83 541,81 551,80 561,79 572,77 582,76 592,75 602,74 612,72ZM612,75 602,76 592,78 582,79 572,80 562,82 552,83 542,84 531,85 521,87 511,88 501,89 491,91 481,92 471,94 461,95 451,96 441,98 431,99 421,101 411,102 401,103 390,105 380,106 370,107 360,108 350,109 340,111 330,112 320,113 310,114 300,116 289,117 279,118 269,120 258,121 247,124 236,127 225,132 214,137 205,144 196,150 187,157 179,164 171,171 163,179 156,187 149,195 142,203 135,212 129,220 123,229 117,238 112,247 106,256 101,265 96,274 91,283 86,293 82,303 78,312 74,322 70,332 66,341 62,351 59,361 55,370 52,380 48,390 45,400 42,411 40,422 38,433 37,444 37,456 26,455 26,444 27,432 29,420 32,408 35,397 38,387 41,376 45,366 48,357 52,347 56,337 59,328 63,318 67,308 72,298 76,288 81,278 86,269 91,260 97,251 102,242 108,233 114,224 120,215 127,205 133,197 141,188 148,180 156,171 164,164 172,156 181,149 190,142 199,135 209,128 220,122 232,117 244,113 256,111 267,109 278,107 288,106 298,105 309,104 319,102 329,101 339,100 349,99 359,97 369,96 379,95 389,94 399,92 409,91 419,90 429,88 439,87 449,86 459,84 469,83 479,81 489,80 500,79 510,77 520,76 530,75 540,73 550,72 560,71 571,70 581,68 591,67 601,66 611,64ZM611,67 601,69 591,70 581,71 571,72 561,74 551,75 540,76 530,77 520,79 510,80 500,81 490,83 480,84 470,86 460,87 450,88 440,90 430,91 420,93 410,94 400,95 389,97 379,98 369,99 359,100 349,101 339,103 329,104 319,105 309,106 299,108 288,109 278,110 267,112 256,113 245,116 233,119 222,124 211,130 200,137 191,144 182,151 174,158 166,166 158,173 150,181 143,190 136,198 129,207 122,216 116,225 110,234 105,243 99,252 94,261 89,270 84,280 79,289 69,285 74,275 79,265 84,256 90,247 95,238 101,229 107,219 113,210 120,201 127,192 135,183 143,174 150,166 159,158 167,150 176,143 185,136 195,128 205,121 217,114 230,109 242,105 254,103 266,101 276,100 287,98 297,97 308,96 318,94 328,93 338,92 348,91 358,89 368,88 378,87 388,86 398,85 408,83 418,82 428,80 438,79 448,78 458,76 468,75 478,73 488,72 498,71 508,69 519,68 529,67 539,65 549,64 559,63 570,62 580,61 590,59 600,58 610,57Z"/>
<path fill="#0030ff" d="M381,706 390,703 393,713 384,716Z"/>
<path fill="#00d4ff" d="M390,703 400,700 403,710 393,713Z"/>
<path fill="#00ff84" d="M400,700 409,697 413,707 403,710Z"/>
<path fill="#00ff44" d="M409,697 419,694 429,691 438,687 441,698 432,701 422,704 413,707ZM412,705 421,701 431,698 441,695 444,706 434,709 425,712 415,715ZM414,712 424,709 433,706 443,703 446,714 437,717 427,720 417,723ZM416,720 426,717 436,714 445,711 449,721 439,724 429,727 420,730ZM419,728 429,725 438,722 448,718 451,729 441,732 432,735 422,738Z"/>
<path fill="#00ff40" d="M438,687 448,684 457,681 467,679 477,676 480,686 470,689 461,692 451,695 441,698ZM441,695 450,692 460,689 470,686 479,683 483,694 473,697 463,700 454,703 444,706ZM443,703 453,700 462,697 472,694 482,691 485,701 475,704 466,707 456,710 446,714ZM445,711 455,708 465,705 474,702 484,699 488,709 478,712 468,715 458,718 449,721ZM448,718 458,715 467,712 477,709 487,706 490,717 480,720 471,723 461,726 451,729Z"/>
<path fill="#00ff3c" d="M477,676 487,673 496,669 506,666 509,677 500,680 490,683 480,686ZM479,683 489,680 499,677 508,674 512,684 502,687 492,691 483,694ZM482,691 491,688 501,685 511,682 514,692 504,695 495,698 485,701ZM484,699 494,695 504,692 513,689 517,700 507,703 497,706 488,709ZM487,706 496,703 506,700 516,697 519,707 509,710 500,713 490,717Z"/>
<path fill="#00008c" d="M209,198 202,204 196,211 190,218 184,224 176,218 182,211 189,204 195,197 202,190ZM341,769 353,768 353,779 341,780Z"/>
<path fill="#000098" d="M158,263 153,271 149,280 144,289 139,297 135,306 125,301 130,292 134,283 139,275 144,266 149,257ZM296,763 307,765 304,777 292,774Z"/>
<path fill="#0000a4" d="M98,396 95,405 92,414 89,423 79,420 81,411 84,402 87,393ZM254,745 264,750 274,755 270,766 259,761 248,755ZM48,545 53,556 43,560 38,550Z"/>
<path fill="#0000c0" d="M85,464 86,473 75,474 74,465ZM211,187 204,193 197,199 190,206 184,212 178,220 170,213 176,205 183,198 190,191 197,185 205,178ZM330,760 341,761 352,760 363,759 365,770 353,771 341,772 329,771Z"/>
<path fill="#0000cc" d="M88,490 90,498 80,501 78,492ZM128,302 124,311 119,320 116,328 112,337 108,347 104,356 94,352 98,343 101,333 105,324 109,315 113,306 118,297ZM278,747 288,751 298,755 295,766 284,762 273,758ZM70,571 76,581 68,587 61,577Z"/>
<path fill="#0000e8" d="M111,546 116,554 107,560 102,552ZM79,483 80,492 70,494 68,484ZM616,106 606,108 596,109 586,110 576,111 566,113 556,114 546,116 536,117 526,118 516,120 506,121 496,123 485,124 475,126 465,127 455,128 445,130 435,131 425,132 415,134 405,135 394,136 384,137 374,139 364,140 354,141 344,142 334,144 324,145 314,146 304,147 294,148 284,150 274,151 264,153 255,155 246,158 238,161 230,165 222,169 214,175 207,181 199,187 192,193 185,200 178,207 172,215 166,222 158,216 164,208 171,200 178,193 185,186 192,179 200,173 208,166 216,161 225,155 233,151 243,147 252,144 262,142 272,140 282,139 292,138 302,136 312,135 322,134 332,133 343,132 353,130 363,129 373,128 383,127 393,125 403,124 413,123 423,122 433,120 444,119 454,118 464,116 474,115 484,113 494,112 504,111 514,109 524,108 534,106 544,105 554,103 565,102 575,101 585,100 595,98 605,97 615,96ZM331,752 341,753 352,752 362,751 372,749 382,747 385,757 374,760 363,762 352,763 341,764 330,763ZM83,576 89,585 81,592 74,582ZM41,500 44,511 34,513 31,502ZM32,420 30,432 19,431 21,418Z"/>
<path fill="#0000fc" d="M132,573 139,580 131,587 124,581ZM100,543 104,551 95,556 90,548ZM70,475 71,484 73,493 62,496 60,486 59,476ZM90,572 96,580 102,588 94,595 87,587 81,578ZM52,509 55,519 45,522 41,511ZM37,456 37,467 26,467 26,455ZM79,289 74,299 70,309 60,305 64,295 69,285Z"/>
<path fill="#0034ff" d="M383,713 393,711 396,721 386,724Z"/>
<path fill="#00e0ff" d="M393,711 402,708 405,718 396,721Z"/>
<path fill="#00ff7c" d="M402,708 412,705 415,715 405,718Z"/>
<path fill="#0004ff" d="M376,724 385,721 388,732 379,734Z"/>
<path fill="#0038ff" d="M385,721 395,718 398,729 388,732ZM387,729 397,726 400,736 390,739Z"/>
<path fill="#00e8ff" d="M395,718 404,715 408,726 398,729Z"/>
<path fill="#00ff74" d="M404,715 414,712 417,723 408,726Z"/>
<path fill="#0008ff" d="M378,731 387,729 390,739 381,742ZM380,739 390,736 393,747 383,750Z"/>
<path fill="#00f4ff" d="M397,726 407,723 410,733 400,736Z"/>
<path fill="#00ff6c" d="M407,723 416,720 420,730 410,733Z"/>
<path fill="#003cff" d="M390,736 399,734 402,744 393,747Z"/>
<path fill="#00ffff" d="M399,734 409,731 412,741 402,744Z"/>
<path fill="#00ff64" d="M409,731 419,728 422,738 412,741Z"/>
<path fill="#000ce8" d="M382,747 392,744 395,754 385,757Z"/>
<path fill="#0040e8" d="M392,744 402,741 405,752 395,754Z"/>
<path fill="#00e8e0" d="M402,741 411,738 415,749 405,752Z"/>
<path fill="#00e854" d="M411,738 421,735 424,746 415,749Z"/>
<path fill="#00e840" d="M421,735 431,732 434,743 424,746Z"/>
<path fill="#00e83c" d="M431,732 441,729 450,726 460,723 470,720 473,731 463,734 454,737 444,740 434,743Z"/>
<path fill="#00e838" d="M470,720 479,717 489,714 499,711 508,708 518,705 522,715 512,718 502,721 492,724 483,727 473,731Z"/>
<path fill="#000cbc" d="M384,754 394,752 397,762 387,765Z"/>
<path fill="#003cbc" d="M394,752 404,749 407,759 397,762Z"/>
<path fill="#00bcb0" d="M404,749 414,746 417,756 407,759Z"/>
<path fill="#00bc3c" d="M414,746 423,743 427,753 417,756Z"/>
<path fill="#00bc34" d="M423,743 433,740 443,737 446,748 436,750 427,753Z"/>
<path fill="#00bc30" d="M443,737 453,734 462,731 472,728 482,725 485,735 476,738 466,741 456,744 446,748Z"/>
<path fill="#00bc2c" d="M482,725 492,721 501,718 511,715 521,712 524,723 514,726 505,729 495,732 485,735Z"/>
<path fill="#0000b4" d="M158,663 165,670 173,677 180,684 188,691 195,698 203,705 210,712 218,719 226,726 219,735 211,727 203,720 195,713 188,706 180,699 173,692 165,685 158,678 151,671Z"/>
<path fill="#000884" d="M386,762 396,759 399,770 389,773Z"/>
<path fill="#003084" d="M396,759 406,756 409,767 399,770Z"/>
<path fill="#008478" d="M406,756 416,753 419,764 409,767Z"/>
<path fill="#008428" d="M416,753 426,751 429,761 419,764Z"/>
<path fill="#008424" d="M426,751 436,748 445,745 455,742 465,739 468,749 459,752 449,755 439,758 429,761Z"/>
<path fill="#008420" d="M465,739 475,736 484,732 494,729 504,726 513,723 523,720 526,730 517,733 507,736 497,739 488,743 478,746 468,749Z"/>
<path fill="#000080" d="M85,604 93,612 85,620 77,611Z"/>
<path fill="#000074" d="M213,725 221,732 214,741 205,734Z"/>
<path fill="#000068" d="M240,746 250,752 244,762 233,756Z"/>
<path fill="#000858" d="M388,770 398,767 401,777 391,780Z"/>
<path fill="#002458" d="M398,767 409,764 412,774 401,777Z"/>
<path fill="#00584c" d="M409,764 418,761 422,772 412,774Z"/>
<path fill="#005818" d="M418,761 428,758 438,755 448,752 458,749 467,746 477,743 487,740 490,750 480,754 471,757 461,760 451,763 441,766 431,769 422,772Z"/>
<path fill="#005814" d="M487,740 496,737 506,734 516,731 526,727 529,738 519,741 509,744 500,747 490,750Z"/></g></g>
<g clip-path="url(#cr)"><path d="M555.0,67.0 556.6,66.8 558.3,66.6 559.9,66.5 561.6,66.3 563.2,66.1 564.9,65.9 566.5,65.7 568.1,65.5 569.8,65.4 571.4,65.2 573.1,65.0 574.7,64.8 576.4,64.6 578.0,64.4 579.6,64.2 581.3,63.9 582.9,63.7 584.5,63.4 586.2,63.2 587.8,62.9 589.4,62.7 591.1,62.4 592.7,62.2 594.3,62.0 596.0,61.8 597.6,61.6 599.3,61.4 600.9,61.2 602.6,61.1 604.2,61.0 605.9,60.9 607.5,60.8 609.2,60.8 610.8,60.8 612.5,60.7 614.1,60.8 615.8,60.8 617.4,60.9 619.1,60.9 620.7,61.1 622.4,61.2 624.0,61.4 625.6,61.7 627.3,62.0 628.9,62.3 630.5,62.6 632.1,63.0 633.7,63.4 635.3,63.8 636.9,64.2 638.5,64.7 640.1,65.3 641.6,65.8 643.2,66.4 644.7,67.1 646.2,67.8 647.7,68.5 649.1,69.3 650.5,70.1 651.9,71.0 653.3,71.9 654.7,72.9 656.0,73.9 657.3,74.9 658.6,75.9 659.8,77.0 661.1,78.1 662.3,79.2 663.5,80.4 664.7,81.5 665.8,82.7 667.0,83.9 668.1,85.1 669.2,86.4 670.2,87.6 671.3,88.9 672.3,90.2 673.3,91.5 674.2,92.9 675.1,94.3 676.0,95.7 676.9,97.1 677.7,98.5 678.5,100.0 679.2,101.4 679.9,102.9 680.6,104.4 681.2,106.0 681.8,107.5 682.4,109.1 682.9,110.6 683.4,112.2 683.8,113.8 684.3,115.4 684.7,117.0 685.1,118.6 685.5,120.2 685.8,121.8 686.2,123.4 686.5,125.1 686.8,126.7 687.1,128.3 687.3,130.0 687.5,131.6 687.8,133.2 687.9,134.9 688.1,136.5 688.3,138.2 688.4,139.8 688.5,141.5 688.6,143.1 688.7,144.8 688.8,146.4 688.8,148.1 688.8,149.7 688.8,151.4 688.8,153.0 688.7,154.7 688.6,156.3 688.5,158.0 688.4,159.6 688.3,161.3 688.1,162.9 687.9,164.6 687.8,166.2 687.6,167.8 687.4,169.5 687.2,171.1 687.0,172.8 686.8,174.4 686.5,176.0 686.3,177.7 686.0,179.3 685.7,180.9 685.5,182.6 685.2,184.2 684.9,185.8 684.6,187.4 684.2,189.1 683.9,190.7 683.6,192.3 683.3,193.9 682.9,195.5 682.6,197.2 682.2,198.8 681.9,200.4 681.5,202.0 681.1,203.6 680.6,205.2 680.1,206.8 679.5,208.3 679.0,209.9 678.4,211.4 677.9,213.0 677.3,214.5 676.7,216.1 676.1,217.6 675.5,219.2 675.0,220.7 674.4,222.3 673.8,223.8 673.2,225.3 672.5,226.9 671.9,228.4 671.3,229.9 670.7,231.5 670.1,233.0 669.4,234.5 668.8,236.1 668.2,237.6 667.6,239.1 666.9,240.6 666.3,242.2 665.7,243.7 665.0,245.2 664.4,246.7 663.7,248.3 663.0,249.8 662.4,251.3 661.7,252.8 661.0,254.3 660.3,255.8 659.6,257.3 658.8,258.8 658.1,260.2 657.4,261.7 656.6,263.2 655.9,264.7 655.1,266.1 654.3,267.6 653.6,269.0 652.8,270.5 652.0,272.0 651.2,273.4 650.4,274.9 649.6,276.3 648.8,277.8 648.0,279.2 647.2,280.7 646.4,282.1 645.6,283.6 644.8,285.0 644.0,286.4 643.2,287.9 642.4,289.3 641.6,290.8 640.8,292.2 639.9,293.6 639.1,295.1 638.3,296.5 637.4,297.9 636.6,299.3 635.8,300.8 634.9,302.2 634.1,303.6 633.3,305.0 632.5,306.5 631.6,307.9 630.8,309.3 630.0,310.8 629.1,312.2 628.3,313.6 627.4,315.0 626.6,316.4 625.7,317.8 624.8,319.3 624.0,320.7 623.1,322.1 622.3,323.5 621.5,324.9 620.7,326.4 619.9,327.8 619.1,329.3 618.3,330.8 617.6,332.3 616.9,333.8 616.2,335.3 615.6,336.8 615.0,338.3 614.3,339.8 613.7,341.4 613.1,342.9 612.6,344.5 612.0,346.0 611.5,347.6 611.0,349.2 610.5,350.8 610.1,352.3 609.6,353.9 609.2,355.5 608.8,357.1 608.4,358.7 608.0,360.3 607.7,362.0 607.3,363.6 607.0,365.2 606.7,366.8 606.4,368.5 606.1,370.1 605.8,371.7 605.6,373.3 605.3,375.0 605.1,376.6 604.8,378.2 604.6,379.9 604.4,381.5 604.2,383.2 604.1,384.8 603.9,386.5 603.8,388.1 603.6,389.8 603.5,391.4 603.4,393.1 603.4,394.7 603.3,396.4 603.3,398.0 603.3,399.7 603.3,401.3 603.4,403.0 603.5,404.6 603.6,406.3 603.7,407.9 603.9,409.6 604.0,411.2 604.2,412.8 604.5,414.5 604.7,416.1 605.0,417.8 605.2,419.4 605.5,421.0 605.8,422.6 606.1,424.3 606.4,425.9 606.8,427.5 607.1,429.1 607.5,430.7 607.8,432.3 608.2,433.9 608.6,435.6 609.0,437.2 609.5,438.8 609.9,440.4 610.3,441.9 610.8,443.5 611.2,445.1 611.7,446.7 612.1,448.3 612.6,449.9 613.1,451.5 613.6,453.0 614.1,454.6 614.6,456.2 615.1,457.8 615.6,459.3 616.2,460.9 616.7,462.5 617.2,464.0 617.8,465.6 618.3,467.1 618.9,468.7 619.5,470.3 620.0,471.8 620.6,473.3 621.2,474.9 621.9,476.4 622.5,477.9 623.2,479.4 623.8,481.0 624.5,482.5 625.3,483.9 626.0,485.4 626.8,486.9 627.6,488.3 628.4,489.8 629.3,491.2 630.1,492.6 631.0,494.0 632.0,495.3 632.9,496.7 633.8,498.0 634.8,499.4 635.8,500.7 636.7,502.1 637.7,503.4 638.7,504.7 639.7,506.1 640.7,507.4 641.6,508.7 642.6,510.1 643.6,511.4 644.5,512.8 645.5,514.1 646.4,515.4 647.4,516.8 648.4,518.1 649.3,519.5 650.3,520.8 651.3,522.2 652.2,523.5 653.2,524.8 654.2,526.2 655.2,527.5 656.1,528.8 657.1,530.2 658.1,531.5 659.1,532.8 660.1,534.2 661.0,535.5 662.0,536.8 663.0,538.1 664.0,539.5 665.0,540.8 666.0,542.1 667.0,543.4 668.0,544.8 669.0,546.1 670.0,547.4 671.0,548.7 672.0,550.0 673.0,551.3 674.0,552.6 675.0,553.9 676.0,555.2 677.1,556.5 678.1,557.9 679.1,559.2 680.1,560.5 681.1,561.8 682.1,563.1 683.1,564.4 684.1,565.7 685.1,567.1 686.0,568.4 687.0,569.7 688.0,571.1 688.9,572.4 689.9,573.8 690.9,575.1 691.8,576.5 692.8,577.8 693.7,579.2 694.7,580.5 695.6,581.9 696.6,583.2 697.5,584.6 698.5,585.9 699.5,587.2 700.4,588.6 701.4,589.9 702.4,591.2 703.4,592.6 704.4,593.9 705.4,595.2 706.4,596.5 707.4,597.8 708.4,599.1 709.4,600.4 710.4,601.7 711.5,603.0 712.5,604.3 713.5,605.6 714.5,606.9 715.6,608.2 716.6,609.5 717.6,610.8 718.7,612.1 719.7,613.4 720.7,614.7 721.7,616.0 722.8,617.3 723.8,618.6 724.8,619.8 725.9,621.1 726.9,622.4 727.9,623.7 729.0,625.0 730.0,626.3 731.0,627.6 732.0,628.9 733.1,630.2 734.1,631.5 735.0,632.9 736.0,634.2 736.9,635.6 737.9,636.9 739.0,638.2 740.1,639.4 741.1,640.7 742.2,641.9 743.3,643.2 744.4,644.4 745.5,645.7 746.6,646.9 747.7,648.1 748.8,649.3 750.0,650.5 751.1,651.7 752.3,652.9 753.4,654.1 754.6,655.2 755.8,656.4 757.0,657.5 758.2,658.6 759.4,659.7 760.6,660.9 761.9,662.0 763.1,663.1 764.3,664.2 765.6,665.3 766.8,666.3 768.1,667.4 769.4,668.5 770.7,669.5 771.9,670.5 773.2,671.6 774.6,672.5 775.9,673.5 777.2,674.5 778.6,675.4 780.0,676.4 781.4,677.3 782.7,678.1 784.2,679.0 785.6,679.9 787.0,680.7 788.4,681.5 789.9,682.3 791.3,683.1 792.8,683.9 794.3,684.6 795.7,685.4 797.2,686.1 798.7,686.8 800.2,687.5 801.8,688.1 803.3,688.8 804.8,689.4 806.4,690.0 807.9,690.5 809.5,691.1 811.0,691.6 812.6,692.1 814.2,692.6 815.8,693.1 817.3,693.6 818.9,694.1 820.5,694.5 822.1,695.0 823.7,695.4 825.3,695.9 826.9,696.3 828.5,696.7 830.1,697.0 831.7,697.4 833.4,697.7 835.0,697.9 836.6,698.2 838.3,698.3 839.9,698.5 841.6,698.6 843.2,698.7 844.9,698.7 846.5,698.7 848.2,698.7 849.8,698.6 851.5,698.5 853.1,698.4 854.8,698.2 856.4,698.1 858.1,698.0 859.7,697.8 861.4,697.7 863.0,697.5 864.6,697.4 866.3,697.3 867.9,697.1 869.6,697.0 871.2,696.9 872.9,696.8 874.5,696.6 876.2,696.5 877.8,696.4 879.5,696.3 881.1,696.1 882.8,696.0 884.4,695.9 886.1,695.7 887.7,695.6 889.4,695.4 891.0,695.3 892.7,695.2 894.3,695.0 896.0,694.9 897.6,694.8 899.2,694.6 900.9,694.5 902.5,694.3 904.2,694.2 905.8,694.1 907.5,693.9 909.1,693.8 910.8,693.6 912.4,693.5 914.1,693.3 915.7,693.2 917.4,693.1 919.0,692.9 920.7,692.8 922.3,692.6 923.9,692.5 925.6,692.4 927.2,692.2 928.9,692.1 930.5,691.9 932.2,691.8 933.8,691.6 935.5,691.5 937.1,691.4 938.8,691.2 940.4,691.1 942.1,690.9 943.7,690.8 945.4,690.6 947.0,690.5 948.7,690.4 950.3,690.2 951.9,690.1 953.6,689.9 955.2,689.8 956.9,689.6 958.5,689.5 960.2,689.3 961.8,689.2 963.5,689.0 965.1,688.9 966.8,688.7 968.4,688.6 970.1,688.4 971.7,688.3 974.8,688.8 977.9,690.7 980.9,694.0 983.6,698.6 985.9,704.2 987.7,710.6 988.9,717.6 989.6,724.7 989.5,731.8 988.9,738.4 987.6,744.4 985.7,749.4 983.4,753.3 980.7,755.8 977.7,756.8 976.0,757.0 974.4,757.1 972.7,757.3 971.1,757.5 969.4,757.7 967.8,757.8 966.1,758.0 964.4,758.2 962.8,758.4 961.1,758.5 959.5,758.7 957.8,758.9 956.1,759.1 954.5,759.2 952.8,759.4 951.2,759.6 949.5,759.7 947.9,759.9 946.2,760.1 944.5,760.3 942.9,760.4 941.2,760.6 939.6,760.8 937.9,761.0 936.3,761.1 934.6,761.3 932.9,761.5 931.3,761.6 929.6,761.8 928.0,762.0 926.3,762.2 924.6,762.3 923.0,762.5 921.3,762.7 919.7,762.8 918.0,763.0 916.4,763.2 914.7,763.4 913.0,763.5 911.4,763.7 909.7,763.9 908.1,764.1 906.4,764.2 904.8,764.4 903.1,764.6 901.4,764.7 899.8,764.9 898.1,765.0 896.5,765.2 894.8,765.4 893.1,765.5 891.5,765.7 889.8,765.8 888.2,765.9 886.5,766.1 884.8,766.2 883.2,766.4 881.5,766.5 879.9,766.7 878.2,766.8 876.5,767.0 874.9,767.1 873.2,767.3 871.6,767.4 869.9,767.6 868.2,767.7 866.6,767.8 864.9,768.0 863.2,768.1 861.6,768.2 859.9,768.3 858.3,768.4 856.6,768.5 854.9,768.5 853.3,768.6 851.6,768.6 849.9,768.6 848.3,768.6 846.6,768.5 844.9,768.5 843.3,768.4 841.6,768.3 839.9,768.1 838.3,767.9 836.6,767.8 835.0,767.5 833.3,767.3 831.7,767.0 830.0,766.8 828.4,766.5 826.7,766.2 825.1,765.9 823.5,765.7 821.8,765.4 820.2,765.1 818.5,764.8 816.9,764.5 815.3,764.2 813.6,763.8 812.0,763.5 810.4,763.2 808.7,762.8 807.1,762.4 805.5,762.1 803.9,761.7 802.2,761.3 800.6,760.8 799.0,760.4 797.4,760.0 795.8,759.5 794.2,759.1 792.6,758.6 791.0,758.1 789.4,757.6 787.8,757.1 786.2,756.6 784.7,756.1 783.1,755.6 781.5,755.0 779.9,754.5 778.4,753.9 776.8,753.3 775.2,752.7 773.7,752.1 772.1,751.5 770.6,750.9 769.1,750.2 767.5,749.6 766.0,748.9 764.5,748.3 762.9,747.6 761.4,746.9 759.9,746.2 758.4,745.4 756.9,744.7 755.4,744.0 753.9,743.2 752.4,742.5 751.0,741.7 749.5,741.0 748.0,740.2 746.5,739.4 745.1,738.6 743.6,737.8 742.2,737.0 740.7,736.1 739.3,735.3 737.9,734.4 736.4,733.6 735.0,732.7 733.6,731.8 732.2,730.8 730.9,729.9 729.5,728.9 728.1,728.0 726.8,727.0 725.5,725.9 724.2,724.9 722.9,723.8 721.6,722.8 720.4,721.7 719.2,720.5 718.0,719.4 716.8,718.2 715.6,717.0 714.5,715.8 713.4,714.5 712.3,713.3 711.2,712.0 710.1,710.8 709.0,709.5 707.9,708.2 706.9,706.9 705.8,705.6 704.8,704.3 703.8,703.0 702.8,701.7 701.8,700.3 700.8,699.0 699.8,697.7 698.8,696.4 697.8,695.0 696.8,693.7 695.8,692.4 694.7,691.0 693.7,689.7 692.7,688.4 691.7,687.1 690.7,685.8 689.6,684.5 688.6,683.2 687.6,681.8 686.5,680.5 685.5,679.2 684.4,677.9 683.4,676.6 682.4,675.3 681.3,674.0 680.3,672.7 679.2,671.4 678.2,670.1 677.1,668.8 676.1,667.5 675.1,666.2 674.0,664.9 673.0,663.6 671.9,662.3 670.9,661.0 669.9,659.7 668.8,658.4 667.8,657.1 666.7,655.8 665.7,654.5 664.6,653.2 663.6,651.9 662.5,650.6 661.5,649.3 660.5,648.0 659.4,646.7 658.4,645.4 657.3,644.1 656.3,642.8 655.2,641.5 654.2,640.2 653.1,638.9 652.1,637.7 651.0,636.4 649.9,635.1 648.9,633.8 647.8,632.5 646.8,631.2 645.8,629.9 644.7,628.6 643.7,627.3 642.7,626.0 641.6,624.7 640.6,623.3 639.6,622.0 638.6,620.7 637.6,619.3 636.6,618.0 635.7,616.6 634.7,615.3 633.7,613.9 632.7,612.6 631.8,611.2 630.8,609.9 629.8,608.5 628.8,607.2 627.9,605.8 626.9,604.5 625.9,603.1 625.0,601.8 624.0,600.4 623.0,599.0 622.0,597.7 621.1,596.3 620.1,595.0 619.1,593.6 618.1,592.3 617.1,590.9 616.2,589.6 615.2,588.3 614.2,586.9 613.1,585.6 612.1,584.3 611.1,583.0 610.1,581.7 609.0,580.4 608.0,579.0 607.0,577.7 605.9,576.4 604.9,575.1 603.8,573.8 602.8,572.5 601.8,571.2 600.7,569.9 599.7,568.6 598.7,567.3 597.6,566.0 596.6,564.7 595.6,563.4 594.5,562.1 593.5,560.8 592.4,559.5 591.4,558.2 590.4,556.9 589.4,555.5 588.4,554.2 587.4,552.9 586.4,551.5 585.4,550.2 584.4,548.9 583.4,547.5 582.4,546.2 581.4,544.8 580.4,543.5 579.4,542.2 578.4,540.8 577.4,539.5 576.4,538.2 575.4,536.8 574.5,535.5 573.5,534.1 572.5,532.8 571.6,531.4 570.6,530.0 569.7,528.6 568.8,527.2 567.9,525.8 567.0,524.4 566.2,523.0 565.3,521.5 564.5,520.1 563.7,518.6 562.9,517.1 562.2,515.7 561.4,514.2 560.7,512.7 560.0,511.2 559.3,509.6 558.6,508.1 558.0,506.6 557.3,505.1 556.7,503.5 556.0,502.0 555.4,500.4 554.8,498.9 554.2,497.3 553.6,495.8 553.0,494.2 552.4,492.7 551.8,491.1 551.2,489.5 550.6,488.0 550.0,486.4 549.5,484.9 548.9,483.3 548.3,481.7 547.8,480.1 547.3,478.6 546.7,477.0 546.2,475.4 545.7,473.8 545.2,472.2 544.7,470.6 544.2,469.0 543.7,467.4 543.3,465.8 542.8,464.2 542.4,462.6 542.0,461.0 541.6,459.4 541.2,457.8 540.8,456.2 540.4,454.5 540.1,452.9 539.7,451.3 539.4,449.6 539.1,448.0 538.8,446.4 538.4,444.7 538.1,443.1 537.9,441.4 537.6,439.8 537.3,438.2 537.0,436.5 536.8,434.9 536.5,433.2 536.3,431.6 536.1,429.9 535.9,428.3 535.6,426.6 535.4,425.0 535.2,423.3 535.1,421.6 534.9,420.0 534.7,418.3 534.6,416.7 534.5,415.0 534.4,413.3 534.3,411.7 534.2,410.0 534.1,408.3 534.1,406.7 534.0,405.0 534.0,403.3 533.9,401.7 533.9,400.0 533.9,398.3 533.9,396.7 533.9,395.0 533.9,393.3 533.9,391.7 534.0,390.0 534.0,388.3 534.1,386.7 534.2,385.0 534.3,383.4 534.5,381.7 534.6,380.0 534.9,378.4 535.1,376.7 535.4,375.1 535.7,373.5 536.0,371.8 536.3,370.2 536.6,368.5 536.9,366.9 537.2,365.3 537.5,363.6 537.8,362.0 538.2,360.4 538.5,358.7 538.8,357.1 539.2,355.5 539.6,353.8 539.9,352.2 540.3,350.6 540.7,349.0 541.1,347.3 541.5,345.7 542.0,344.1 542.4,342.5 542.8,340.9 543.3,339.3 543.7,337.7 544.2,336.1 544.6,334.5 545.1,332.9 545.6,331.3 546.1,329.7 546.6,328.1 547.1,326.5 547.6,324.9 548.1,323.3 548.6,321.8 549.2,320.2 549.7,318.6 550.3,317.1 550.9,315.5 551.5,313.9 552.1,312.4 552.8,310.9 553.4,309.3 554.1,307.8 554.8,306.3 555.5,304.8 556.2,303.3 556.9,301.8 557.7,300.3 558.4,298.8 559.2,297.3 559.9,295.8 560.7,294.3 561.5,292.9 562.3,291.4 563.1,289.9 563.9,288.5 564.7,287.0 565.5,285.6 566.4,284.1 567.2,282.7 568.1,281.3 568.9,279.8 569.8,278.4 570.6,277.0 571.5,275.5 572.3,274.1 573.1,272.6 573.9,271.2 574.8,269.7 575.6,268.3 576.3,266.8 577.1,265.3 577.9,263.8 578.6,262.4 579.4,260.9 580.1,259.4 580.9,257.9 581.6,256.4 582.3,254.9 583.1,253.4 583.8,251.9 584.5,250.4 585.2,248.9 586.0,247.4 586.7,245.9 587.5,244.4 588.2,242.9 589.0,241.4 589.7,239.9 590.5,238.5 591.3,237.0 592.1,235.5 592.9,234.1 593.7,232.6 594.5,231.2 595.3,229.7 596.1,228.2 596.9,226.8 597.7,225.3 598.6,223.9 599.4,222.4 600.2,221.0 600.9,219.5 601.7,218.0 602.5,216.5 603.2,215.0 603.9,213.5 604.6,212.0 605.3,210.5 606.0,209.0 606.6,207.4 607.3,205.9 607.9,204.3 608.5,202.8 609.1,201.2 609.7,199.7 610.2,198.1 610.8,196.5 611.4,195.0 611.9,193.4 612.4,191.8 613.0,190.2 613.5,188.6 614.0,187.1 614.5,185.5 615.0,183.9 615.6,182.3 616.1,180.7 616.5,179.1 617.0,177.5 617.5,175.9 617.9,174.3 618.4,172.7 618.8,171.1 619.2,169.5 619.5,167.8 619.8,166.2 620.1,164.6 620.4,162.9 620.6,161.3 620.8,159.6 621.0,158.0 621.1,156.3 621.2,154.6 621.3,153.0 621.3,151.3 621.3,149.6 621.3,148.0 621.2,146.3 621.1,144.6 620.9,143.0 620.6,141.3 620.3,139.7 619.9,138.1 619.4,136.5 618.8,135.0 618.0,133.5 617.0,132.1 615.8,131.0 614.5,130.0 613.0,129.3 611.3,129.0 609.7,128.9 608.0,128.8 606.3,128.8 604.7,128.8 603.0,128.9 601.3,129.0 599.7,129.1 598.0,129.2 596.3,129.4 594.7,129.5 593.0,129.7 591.4,129.9 589.7,130.0 588.1,130.2 586.4,130.4 584.7,130.6 583.1,130.8 581.4,131.0 579.8,131.2 578.1,131.4 576.5,131.6 574.8,131.8 573.2,132.0 571.5,132.2 569.9,132.4 568.2,132.6 566.5,132.8 564.9,133.1 563.2,133.3 561.6,133.5 559.9,133.8 558.3,134.0 556.7,134.3 555.0,134.5Z" fill="#00c0c0"/><g filter="url(#bl)"><path fill="#0000ff" d="M538,66 545,65 553,64 560,63 568,62 569,69 561,70 554,71 546,72 539,73ZM838,694 844,694 850,694 856,694 856,702 850,702 844,702 837,701ZM538,70 546,69 553,68 561,67 568,66 569,74 562,75 554,75 547,76 539,77ZM792,684 797,686 794,693 788,691ZM820,695 826,696 832,698 838,698 844,699 850,699 856,699 857,706 850,706 843,706 837,706 831,705 825,704 818,702ZM539,74 546,74 554,73 561,72 569,71 570,78 562,79 555,80 547,81 540,82ZM831,702 837,703 843,703 850,703 856,703 857,711 850,711 843,711 836,710 830,709ZM539,79 547,78 554,77 562,76 569,75 570,82 563,83 555,84 548,85 540,86ZM837,707 843,708 850,708 857,708 857,716 850,716 843,715 836,715ZM540,83 547,82 555,81 562,81 570,80 571,87 563,88 556,89 548,89 541,90ZM843,712 850,713 857,713 857,720 849,720 842,720ZM540,88 548,87 555,86 563,85 571,84 571,91 564,92 556,93 549,94 541,95ZM843,717 850,717 857,717 857,725 849,725 842,725ZM541,92 549,91 556,90 564,89 571,88 572,96 564,96 557,97 549,98 542,99ZM849,722 857,722 857,730 849,729ZM542,96 549,95 557,95 564,94 572,93 572,100 565,101 557,102 550,103 542,104ZM849,727 857,727 857,734 849,734ZM542,101 550,100 557,99 565,98 572,97 573,104 565,105 558,106 550,107 543,108ZM849,731 857,731 857,739 849,739Z"/>
<path fill="#0010fc" d="M568,62 575,61 576,68 569,69ZM640,508 644,514 638,518 634,513ZM763,694 769,698 765,704 759,700ZM761,697 767,702 773,705 769,712 762,708 756,704ZM770,709 777,713 774,720 767,716Z"/>
<path fill="#5ce030" d="M575,61 583,60 584,67 576,68Z"/>
<path fill="#ecd400" d="M583,60 591,59 592,66 584,67ZM621,109 626,111 622,118 619,116Z"/>
<path fill="#f4dc00" d="M591,59 600,58 601,65 592,66ZM610,76 620,76 619,84 610,83Z"/>
<path fill="#f8e000" d="M600,58 611,58 611,65 601,65Z"/>
<path fill="#e0ec00" d="M611,58 623,58 622,66 611,65Z"/>
<path fill="#c4f800" d="M623,58 637,61 634,68 622,66ZM635,95 642,100 637,106 631,102Z"/>
<path fill="#88fc00" d="M637,61 651,67 647,74 634,68Z"/>
<path fill="#50ff00" d="M651,67 663,76 658,81 647,74Z"/>
<path fill="#3cf800" d="M663,76 673,86 667,91 658,81Z"/>
<path fill="#2cec00" d="M673,86 681,98 674,102 667,91Z"/>
<path fill="#1ce000" d="M681,98 686,110 679,113 674,102Z"/>
<path fill="#14d408" d="M686,110 689,122 682,124 679,113Z"/>
<path fill="#08cc0c" d="M689,122 691,133 684,134 682,124Z"/>
<path fill="#00c410" d="M691,133 692,144 684,144 684,134Z"/>
<path fill="#00bc20" d="M692,144 692,154 684,154 684,144Z"/>
<path fill="#00b430" d="M692,154 691,164 684,163 684,154Z"/>
<path fill="#00ac3c" d="M691,164 690,173 683,172 684,163Z"/>
<path fill="#00a838" d="M690,173 689,183 682,181 683,172Z"/>
<path fill="#00a834" d="M689,183 687,192 680,190 682,181Z"/>
<path fill="#00a430" d="M687,192 685,201 678,199 680,190Z"/>
<path fill="#00a42c" d="M685,201 682,209 675,207 678,199Z"/>
<path fill="#00a428" d="M682,209 680,218 673,215 675,207Z"/>
<path fill="#00a028" d="M680,218 677,226 674,233 670,241 667,249 663,257 657,253 660,246 664,238 667,231 670,223 673,215ZM653,278 649,285 642,281 646,274Z"/>
<path fill="#00a024" d="M663,257 660,264 656,271 653,278 646,274 650,268 653,261 657,253Z"/>
<path fill="#009c28" d="M649,285 645,291 641,298 637,305 633,312 630,318 623,314 627,308 631,302 635,295 639,288 642,281ZM949,742 956,741 964,740 972,740 979,739 987,738 994,738 995,745 987,746 980,746 972,747 965,748 957,749 950,749Z"/>
<path fill="#009c2c" d="M630,318 626,324 620,320 623,314ZM904,746 911,746 919,745 926,744 934,743 941,743 949,742 950,749 942,750 935,751 927,752 919,753 912,753 904,754Z"/>
<path fill="#009c34" d="M626,324 624,330 617,326 620,320Z"/>
<path fill="#00a03c" d="M624,330 621,335 614,332 617,326Z"/>
<path fill="#00a044" d="M621,335 618,341 611,338 614,332Z"/>
<path fill="#00a048" d="M618,341 616,347 609,344 611,338Z"/>
<path fill="#00a050" d="M616,347 614,352 607,350 609,344Z"/>
<path fill="#00a058" d="M614,352 613,358 605,356 607,350Z"/>
<path fill="#00a45c" d="M613,358 611,364 604,363 605,356Z"/>
<path fill="#009868" d="M611,364 610,370 603,369 604,363Z"/>
<path fill="#009074" d="M610,370 609,377 602,375 603,369Z"/>
<path fill="#00847c" d="M609,377 608,383 601,382 602,375Z"/>
<path fill="#007c88" d="M608,383 608,389 600,388 601,382Z"/>
<path fill="#007498" d="M608,389 608,395 600,394 600,388Z"/>
<path fill="#0068a4" d="M608,395 608,401 600,401 600,394Z"/>
<path fill="#0060b0" d="M608,401 608,407 600,407 600,401Z"/>
<path fill="#0058c0" d="M608,407 608,412 601,413 600,407Z"/>
<path fill="#0058c4" d="M608,412 609,418 610,424 603,426 602,419 601,413Z"/>
<path fill="#0054c8" d="M610,424 612,431 613,437 606,439 604,432 603,426Z"/>
<path fill="#0054cc" d="M613,437 615,443 617,449 609,452 607,445 606,439Z"/>
<path fill="#0050d0" d="M617,449 619,456 621,462 613,464 611,458 609,452Z"/>
<path fill="#0050d4" d="M621,462 623,467 616,470 613,464Z"/>
<path fill="#004cd8" d="M623,467 625,473 628,478 621,482 618,476 616,470Z"/>
<path fill="#004cdc" d="M628,478 630,484 624,488 621,482Z"/>
<path fill="#004ce0" d="M630,484 633,489 637,495 630,499 627,493 624,488Z"/>
<path fill="#0048e4" d="M637,495 640,500 644,505 638,510 634,504 630,499Z"/>
<path fill="#0048e8" d="M644,505 648,511 652,517 657,523 661,529 665,535 670,541 664,546 659,540 655,534 651,528 646,522 642,516 638,510Z"/>
<path fill="#0044e8" d="M670,541 675,548 669,552 664,546Z"/>
<path fill="#0040e8" d="M675,548 679,554 673,558 669,552Z"/>
<path fill="#003ce8" d="M679,554 684,560 678,564 673,558Z"/>
<path fill="#0038e8" d="M684,560 689,566 683,571 678,564Z"/>
<path fill="#0034e8" d="M689,566 693,572 687,577 683,571Z"/>
<path fill="#0030e8" d="M693,572 697,578 691,583 687,577ZM661,228 658,236 655,243 651,251 644,247 648,240 651,233 654,225Z"/>
<path fill="#002ce8" d="M697,578 702,584 696,589 691,583ZM651,251 648,258 644,265 637,261 641,254 644,247ZM747,717 754,721 750,728 742,723Z"/>
<path fill="#0028e8" d="M702,584 706,590 710,596 705,600 700,594 696,589ZM644,265 640,271 637,278 630,275 634,268 637,261Z"/>
<path fill="#0024ec" d="M710,596 715,602 719,607 714,612 709,606 705,600Z"/>
<path fill="#0020ec" d="M719,607 724,613 718,618 714,612Z"/>
<path fill="#001cec" d="M724,613 729,619 733,625 728,630 723,624 718,618ZM614,457 616,463 618,469 611,472 609,466 607,459Z"/>
<path fill="#0018ec" d="M733,625 738,631 732,636 728,630ZM599,407 599,413 592,414 591,407ZM864,736 872,735 873,743 865,743Z"/>
<path fill="#0014ec" d="M738,631 743,637 747,642 742,647 737,641 732,636Z"/>
<path fill="#0010ec" d="M747,642 752,647 746,652 742,647Z"/>
<path fill="#000cec" d="M752,647 757,651 751,657 746,652Z"/>
<path fill="#000cf0" d="M757,651 761,655 756,661 751,657Z"/>
<path fill="#0008f4" d="M761,655 766,659 770,663 765,669 760,665 756,661Z"/>
<path fill="#0004f8" d="M770,663 775,667 770,673 765,669ZM796,706 802,709 800,716 793,713ZM794,710 801,713 808,715 805,722 798,720 791,718ZM792,715 799,717 806,720 813,722 811,729 804,727 797,724 790,722ZM791,719 798,722 805,724 812,726 810,733 803,731 795,729 788,726Z"/>
<path fill="#0000f8" d="M775,667 780,671 785,674 789,677 794,679 799,682 804,685 810,687 816,689 821,691 827,692 826,699 820,698 813,696 807,694 802,692 796,689 790,686 785,684 780,680 775,677 770,673ZM558,103 565,102 566,110 558,111Z"/>
<path fill="#0000fc" d="M827,692 833,693 838,694 837,701 831,700 826,699ZM797,686 803,689 808,691 814,693 820,695 818,702 812,700 806,698 800,696 794,693ZM801,693 807,696 813,698 819,699 825,701 831,702 830,709 824,708 817,707 811,705 804,703 798,700ZM805,700 812,702 818,704 824,705 830,707 837,707 836,715 829,714 823,713 816,711 809,709 803,707ZM817,708 823,710 830,711 836,712 843,712 842,720 835,719 829,719 822,717 815,716ZM822,714 829,716 836,717 843,717 842,725 835,724 828,723 821,722ZM828,720 835,721 842,722 849,722 849,729 842,729 834,729 827,728ZM828,725 835,726 842,726 849,727 849,734 842,734 834,733 826,732ZM827,729 834,730 842,731 849,731 849,739 841,738 833,738 826,737ZM565,102 573,102 574,109 566,110Z"/>
<path fill="#0014ff" d="M856,694 863,694 863,701 856,702ZM739,639 744,645 749,650 743,655 738,650 734,644ZM640,517 645,523 649,529 643,533 639,527 634,521ZM741,648 745,653 740,658 735,653ZM646,532 650,538 655,544 649,548 644,542 640,536ZM682,580 686,586 691,592 695,598 700,604 704,610 709,616 714,622 718,628 723,634 717,638 713,632 708,626 703,620 698,615 694,609 689,603 685,597 680,591 676,585ZM737,651 742,656 746,661 741,666 736,661 731,655ZM687,595 692,601 696,607 701,613 695,617 690,611 686,605 681,600ZM738,659 743,664 748,669 743,674 738,669 733,664ZM735,662 740,667 745,672 750,677 745,682 739,677 734,672 729,667ZM747,680 752,685 758,689 753,695 747,691 741,686ZM755,693 761,697 756,704 750,699Z"/>
<path fill="#0028ff" d="M863,694 869,693 870,701 863,701ZM657,532 662,538 656,543 651,537ZM694,581 698,587 692,591 688,585ZM629,274 625,281 618,277 622,270ZM629,525 634,531 638,537 643,543 647,549 652,555 656,561 651,566 646,560 641,554 637,548 632,542 628,536 623,529ZM698,624 703,630 708,636 712,642 707,647 702,641 697,635 693,629ZM723,662 728,668 733,673 727,679 722,673 717,667ZM735,682 740,687 735,693 730,687ZM743,696 749,701 744,707 738,702Z"/>
<path fill="#008cff" d="M869,693 876,693 877,700 870,701ZM603,320 600,326 593,323 597,317ZM601,476 604,483 597,486 594,479ZM635,549 640,555 634,559 630,553ZM664,603 669,609 663,613 658,607ZM679,630 684,635 678,640 674,634Z"/>
<path fill="#00f8ff" d="M876,693 884,692 884,700 877,700ZM647,214 644,221 641,229 634,226 637,219 640,212Z"/>
<path fill="#00ffa8" d="M884,692 891,692 892,699 884,700ZM581,326 578,333 571,331 574,323ZM568,378 567,386 566,393 559,393 559,385 560,377ZM567,416 568,424 560,425 559,417Z"/>
<path fill="#00ff4c" d="M891,692 899,691 899,699 892,699ZM565,362 564,370 557,368 558,360Z"/>
<path fill="#00ff44" d="M899,691 906,690 914,690 921,689 929,689 936,688 944,687 951,687 959,686 966,685 974,685 981,684 989,683 990,691 982,691 975,692 967,693 959,693 952,694 944,695 937,695 929,696 922,697 914,697 907,698 899,699ZM569,347 567,354 560,352 562,345Z"/>
<path fill="#0030f4" d="M568,66 576,65 577,73 569,74ZM611,316 607,322 601,319 604,312Z"/>
<path fill="#90d41c" d="M576,65 584,64 585,72 577,73Z"/>
<path fill="#f0c400" d="M584,64 592,63 593,71 585,72Z"/>
<path fill="#f8cc00" d="M592,63 601,63 601,70 593,71ZM610,85 619,85 618,93 610,92Z"/>
<path fill="#f4d800" d="M601,63 611,62 611,70 601,70Z"/>
<path fill="#e4e800" d="M611,62 622,63 621,70 611,70ZM624,142 625,147 617,147 617,143Z"/>
<path fill="#c4f400" d="M622,63 635,65 633,73 621,70Z"/>
<path fill="#8cfc00" d="M635,65 649,71 645,78 633,73ZM642,83 651,90 646,95 638,90ZM653,114 656,121 649,124 646,117Z"/>
<path fill="#60ff00" d="M649,71 660,79 655,85 645,78ZM649,175 648,183 640,181 642,174ZM614,232 611,239 604,235 607,229Z"/>
<path fill="#4cff00" d="M660,79 669,89 664,94 655,85ZM662,95 669,105 662,108 656,100Z"/>
<path fill="#38ff00" d="M669,89 677,100 670,104 664,94Z"/>
<path fill="#28f808" d="M677,100 682,112 675,115 670,104Z"/>
<path fill="#18ec1c" d="M682,112 685,123 678,125 675,115Z"/>
<path fill="#0ce428" d="M685,123 687,134 679,135 678,125Z"/>
<path fill="#00e03c" d="M687,134 687,144 680,145 679,135Z"/>
<path fill="#00d850" d="M687,144 687,154 680,154 680,145Z"/>
<path fill="#00d460" d="M687,154 687,164 679,163 680,154Z"/>
<path fill="#00d074" d="M687,164 686,173 678,172 679,163Z"/>
<path fill="#00cc68" d="M686,173 684,182 677,181 678,172Z"/>
<path fill="#00c860" d="M684,182 683,191 675,189 677,181Z"/>
<path fill="#00c454" d="M683,191 681,200 673,198 675,189Z"/>
<path fill="#00c058" d="M681,200 678,208 671,206 673,198Z"/>
<path fill="#00c060" d="M678,208 675,216 668,214 671,206Z"/>
<path fill="#00bc64" d="M675,216 672,224 666,221 668,214Z"/>
<path fill="#00bc5c" d="M672,224 669,232 663,229 666,221Z"/>
<path fill="#00bc58" d="M669,232 666,240 659,237 663,229Z"/>
<path fill="#00b854" d="M666,240 663,247 656,244 659,237ZM896,743 903,742 904,749 896,750Z"/>
<path fill="#00b850" d="M663,247 659,255 653,251 656,244ZM569,517 573,525 567,529 562,521Z"/>
<path fill="#00b848" d="M659,255 656,262 649,259 653,251Z"/>
<path fill="#00b444" d="M656,262 652,269 649,276 645,283 641,289 637,296 631,293 635,286 638,279 642,272 646,265 649,259Z"/>
<path fill="#00b440" d="M637,296 633,303 629,310 623,306 627,299 631,293Z"/>
<path fill="#00b040" d="M629,310 626,316 619,312 623,306Z"/>
<path fill="#00a850" d="M626,316 622,322 616,318 619,312Z"/>
<path fill="#009c60" d="M622,322 619,328 613,324 616,318Z"/>
<path fill="#009470" d="M619,328 617,334 610,331 613,324Z"/>
<path fill="#008880" d="M617,334 614,339 607,337 610,331Z"/>
<path fill="#008094" d="M614,339 612,345 605,343 607,337Z"/>
<path fill="#0074a4" d="M612,345 610,351 603,349 605,343Z"/>
<path fill="#006cb8" d="M610,351 608,357 601,355 603,349Z"/>
<path fill="#0060c8" d="M608,357 607,363 600,362 601,355Z"/>
<path fill="#0058cc" d="M607,363 606,370 598,368 600,362Z"/>
<path fill="#0050cc" d="M606,370 605,376 597,375 598,368ZM709,696 715,702 710,707 704,701Z"/>
<path fill="#0048d0" d="M605,376 604,382 596,381 597,375Z"/>
<path fill="#0040d0" d="M604,382 603,388 596,388 596,381Z"/>
<path fill="#0038d4" d="M603,388 603,395 596,394 596,388Z"/>
<path fill="#0030d4" d="M603,395 603,401 596,401 596,394Z"/>
<path fill="#0028d8" d="M603,401 603,407 596,407 596,401Z"/>
<path fill="#0020dc" d="M603,407 604,413 605,419 597,420 596,414 596,407Z"/>
<path fill="#0020e0" d="M605,419 606,425 598,427 597,420Z"/>
<path fill="#001ce0" d="M606,425 607,432 599,433 598,427Z"/>
<path fill="#001ce4" d="M607,432 608,438 610,444 603,446 601,440 599,433ZM625,299 622,305 615,301 619,295Z"/>
<path fill="#001ce8" d="M610,444 612,451 614,457 607,459 605,453 603,446ZM763,722 771,726 767,732 760,728Z"/>
<path fill="#001cf0" d="M618,469 621,475 614,478 611,472ZM599,413 600,420 601,426 594,427 592,421 592,414Z"/>
<path fill="#0018f0" d="M621,475 623,481 616,484 614,478Z"/>
<path fill="#0018f4" d="M623,481 626,486 629,492 623,496 620,490 616,484ZM766,718 773,721 769,728 762,724Z"/>
<path fill="#0014f8" d="M629,492 633,497 636,503 630,507 626,501 623,496ZM594,407 595,414 587,414 587,408Z"/>
<path fill="#0014fc" d="M636,503 640,508 634,513 630,507ZM595,414 595,420 588,421 587,414ZM758,701 764,706 770,709 767,716 760,712 753,708ZM768,714 775,717 772,724 764,720Z"/>
<path fill="#0010ff" d="M644,514 648,520 642,524 638,518ZM749,650 753,655 748,660 743,655ZM856,699 863,698 863,706 857,706ZM745,653 750,658 754,662 749,667 744,663 740,658ZM655,544 659,550 664,556 668,562 673,568 678,574 682,580 676,585 672,579 667,573 662,566 658,560 653,554 649,548ZM746,661 751,665 756,670 751,675 746,671 741,666ZM748,669 753,673 758,678 753,684 748,679 743,674ZM636,260 632,267 626,264 629,257ZM750,677 755,681 761,686 756,692 750,687 745,682ZM758,689 763,694 759,700 753,695Z"/>
<path fill="#0018ff" d="M648,520 653,526 647,531 642,524ZM730,628 735,634 739,639 734,644 729,638 724,633ZM625,494 629,500 632,505 636,511 640,517 634,521 630,515 626,510 622,504 619,498ZM649,529 654,535 658,541 663,547 667,553 672,559 677,565 671,570 666,564 661,558 657,551 652,545 648,539 643,533ZM712,613 717,619 722,625 726,631 731,637 736,642 741,648 735,653 730,647 725,641 721,635 716,630 711,624 707,618ZM597,427 598,433 599,440 601,447 594,449 592,442 590,435 589,428ZM641,525 646,532 640,536 635,530ZM723,634 728,639 732,645 737,651 731,655 727,650 722,644 717,638ZM660,559 665,565 669,571 674,577 678,583 683,589 687,595 681,600 677,593 672,587 668,581 663,575 659,569 654,563ZM701,613 705,619 710,625 715,631 719,636 724,642 729,648 734,654 738,659 733,664 728,658 723,653 718,647 714,641 709,635 704,629 700,623 695,617ZM721,645 725,651 730,657 735,662 729,667 724,661 720,656 715,650ZM741,675 747,680 741,686 736,681ZM749,688 755,693 750,699 744,694ZM864,726 871,726 872,734 864,734ZM752,697 758,701 753,708 747,703ZM864,731 872,731 872,738 865,739Z"/>
<path fill="#0020ff" d="M653,526 657,532 651,537 647,531ZM707,599 711,604 716,610 710,615 705,609 701,603ZM863,703 870,703 870,710 863,711ZM607,466 610,473 602,476 600,469ZM863,708 870,707 871,715 864,715ZM603,468 605,474 608,481 611,487 614,493 617,499 621,505 625,511 629,516 633,522 637,528 642,534 646,540 640,545 636,539 631,533 627,527 623,521 618,515 614,509 611,503 607,497 604,490 601,484 598,477 596,471ZM684,598 688,604 693,610 697,616 702,621 696,626 691,620 687,614 682,608 678,602ZM727,659 731,665 726,670 721,664ZM738,679 744,684 738,689 733,684Z"/>
<path fill="#0034ff" d="M662,538 666,544 660,549 656,543ZM625,281 621,287 615,284 618,277ZM625,519 629,525 623,529 619,523ZM657,570 662,576 667,582 671,588 665,593 660,587 656,581 651,575ZM695,627 699,633 704,639 709,645 703,649 698,643 694,638 689,632ZM720,665 725,671 719,676 714,670ZM732,685 737,691 732,696 726,691ZM740,699 746,704 741,710 735,705Z"/>
<path fill="#0030ff" d="M666,544 671,550 676,557 670,561 665,555 660,549ZM601,461 603,468 596,471 593,464ZM671,588 675,594 680,600 684,606 679,611 674,605 669,599 665,593ZM709,645 714,651 718,657 713,661 708,655 703,649ZM725,671 730,677 724,682 719,676ZM737,691 743,696 738,702 732,696Z"/>
<path fill="#002cff" d="M676,557 680,563 674,567 670,561ZM684,606 689,612 694,618 698,624 693,629 688,623 683,617 679,611ZM718,657 723,662 717,667 713,661ZM730,677 735,682 730,687 724,682ZM746,704 752,709 748,715 741,710Z"/>
<path fill="#002cfc" d="M680,563 685,569 679,573 674,567Z"/>
<path fill="#0028fc" d="M685,569 689,575 694,581 688,585 683,579 679,573ZM752,709 759,713 755,720 748,715Z"/>
<path fill="#0024ff" d="M698,587 702,593 707,599 701,603 697,597 692,591ZM863,698 870,698 870,706 863,706ZM643,247 639,254 633,250 636,243ZM656,561 661,567 666,574 670,580 675,586 679,592 684,598 678,602 673,596 669,590 664,584 660,578 655,572 651,566ZM712,642 717,648 722,654 727,659 721,664 716,658 711,653 707,647ZM733,673 738,679 733,684 727,679ZM740,687 746,692 741,698 735,693ZM749,701 755,705 751,711 744,707Z"/>
<path fill="#001cff" d="M716,610 721,616 725,622 730,628 724,633 720,627 715,621 710,615ZM616,477 619,483 622,488 625,494 619,498 615,492 612,486 609,480ZM677,565 681,572 686,578 690,584 694,590 699,595 703,601 708,607 712,613 707,618 702,612 697,606 693,600 688,594 684,588 680,582 675,576 671,570ZM601,447 603,453 605,460 607,466 600,469 598,462 596,456 594,449ZM610,473 612,479 615,485 618,491 621,496 625,502 628,508 632,514 637,519 641,525 635,530 631,524 626,518 622,512 618,506 615,500 611,494 608,488 605,482 602,476ZM646,540 651,546 656,552 660,559 654,563 650,557 645,551 640,545ZM864,712 871,712 871,720 864,720ZM632,267 629,274 622,270 626,264ZM702,621 707,627 711,633 716,639 721,645 715,650 710,644 705,638 701,632 696,626ZM864,717 871,717 871,724 864,725ZM731,665 736,670 741,675 736,681 731,675 726,670ZM864,722 871,721 872,729 864,729ZM744,684 749,688 744,694 738,689ZM746,692 752,697 747,703 741,698Z"/>
<path fill="#000cff" d="M753,655 758,659 762,663 757,668 752,664 748,660ZM754,662 759,666 764,670 759,676 754,672 749,667ZM856,703 863,703 863,711 857,711ZM756,670 761,674 766,678 762,684 756,680 751,675ZM857,708 863,708 864,715 857,716ZM758,678 763,682 769,686 764,692 759,688 753,684ZM857,713 864,712 864,720 857,720ZM761,686 766,690 772,694 768,700 762,696 756,692Z"/>
<path fill="#0008ff" d="M762,663 767,667 772,671 767,677 762,673 757,668ZM764,670 769,674 774,678 770,685 765,681 759,676ZM766,678 772,682 777,686 773,692 767,688 762,684ZM769,686 774,690 770,696 764,692ZM857,717 864,717 864,725 857,725ZM857,722 864,722 864,729 857,730ZM857,727 864,726 864,734 857,734ZM857,731 864,731 865,739 857,739Z"/>
<path fill="#0004ff" d="M772,671 777,674 782,678 787,681 792,684 788,691 783,688 778,684 773,681 767,677ZM774,678 779,682 784,685 781,692 775,688 770,685ZM639,254 636,260 629,257 633,250Z"/>
<path fill="#0080ff" d="M870,698 877,698 877,705 870,706ZM593,434 595,441 587,443 586,436ZM604,483 607,489 600,492 597,486ZM640,555 645,561 639,565 634,559ZM659,588 664,594 658,598 653,592ZM669,609 674,615 668,619 663,613ZM689,641 694,647 688,652 683,646ZM700,662 704,668 699,673 694,667Z"/>
<path fill="#00e8ff" d="M877,698 884,697 885,705 877,705ZM663,195 661,202 654,200 656,193ZM585,394 585,401 585,408 585,415 578,415 577,408 577,401 577,394ZM599,318 596,324 589,321 593,315ZM588,450 590,457 582,460 580,452ZM631,249 628,256 621,253 624,246ZM595,486 598,493 591,496 588,490Z"/>
<path fill="#00fcb4" d="M884,697 892,696 892,704 885,705Z"/>
<path fill="#00fc58" d="M892,696 899,696 900,703 892,704ZM559,425 560,433 552,434 551,426Z"/>
<path fill="#00fc44" d="M899,696 906,695 914,694 922,694 929,693 937,692 944,692 952,691 959,690 967,690 974,689 982,688 989,688 990,695 983,696 975,696 967,697 960,698 952,699 945,699 937,700 930,701 922,701 915,702 907,703 900,703ZM899,700 907,700 914,699 922,698 929,698 937,697 945,696 952,696 960,695 967,694 975,694 982,693 990,692 991,700 983,700 975,701 968,702 960,702 953,703 945,704 938,705 930,705 923,706 915,707 908,707 900,708ZM900,705 907,704 915,704 922,703 930,702 937,702 945,701 953,700 960,700 968,699 975,698 983,697 990,697 991,704 983,705 976,706 968,706 961,707 953,708 946,708 938,709 931,710 923,710 916,711 908,712 901,712ZM900,710 908,709 915,708 923,708 930,707 938,706 945,705 953,705 961,704 968,703 976,703 983,702 991,701 991,709 984,709 976,710 969,711 961,712 954,712 946,713 939,714 931,714 924,715 916,716 908,716 901,717ZM557,409 558,417 550,418 550,409Z"/>
<path fill="#0050ec" d="M569,71 576,70 577,77 570,78Z"/>
<path fill="#b8c410" d="M576,70 584,69 585,76 577,77Z"/>
<path fill="#f8b400" d="M584,69 592,68 593,75 585,76Z"/>
<path fill="#fcc000" d="M592,68 601,67 601,74 593,75Z"/>
<path fill="#f4d000" d="M601,67 611,67 610,74 601,74Z"/>
<path fill="#e8e400" d="M611,67 622,67 621,75 610,74ZM629,127 631,131 624,133 622,131Z"/>
<path fill="#c8f000" d="M622,67 634,70 632,77 621,75Z"/>
<path fill="#94fc00" d="M634,70 646,75 642,82 632,77ZM652,123 654,130 655,138 648,139 647,132 645,125Z"/>
<path fill="#6cff00" d="M646,75 657,83 652,88 642,82ZM620,219 617,226 611,223 613,216Z"/>
<path fill="#58ff00" d="M657,83 666,92 660,97 652,88Z"/>
<path fill="#44ff00" d="M666,92 673,102 666,106 660,97Z"/>
<path fill="#30ff0c" d="M673,102 677,114 671,116 666,106Z"/>
<path fill="#1cfc24" d="M677,114 680,124 673,126 671,116Z"/>
<path fill="#14f430" d="M680,124 682,135 675,135 673,126Z"/>
<path fill="#04f048" d="M682,135 683,144 675,145 675,135Z"/>
<path fill="#00ec70" d="M683,144 683,154 676,154 675,145Z"/>
<path fill="#00e894" d="M683,154 682,163 675,163 676,154Z"/>
<path fill="#00e4bc" d="M682,163 681,172 674,171 675,163ZM614,565 618,571 612,576 608,570Z"/>
<path fill="#00e0b8" d="M681,172 680,181 673,180 674,171Z"/>
<path fill="#00e0b4" d="M680,181 678,190 671,188 673,180Z"/>
<path fill="#00dcb0" d="M678,190 676,198 669,196 671,188Z"/>
<path fill="#00c4c0" d="M676,198 674,206 667,204 669,196Z"/>
<path fill="#00a8cc" d="M674,206 671,215 664,212 667,204Z"/>
<path fill="#0090dc" d="M671,215 668,222 661,220 664,212Z"/>
<path fill="#009cd8" d="M668,222 665,230 658,227 661,220ZM571,84 578,83 579,90 571,91Z"/>
<path fill="#00a4d8" d="M665,230 662,238 655,235 658,227Z"/>
<path fill="#00acd8" d="M662,238 659,245 652,242 655,235ZM573,102 580,101 581,108 574,109Z"/>
<path fill="#00b4d8" d="M659,245 655,253 648,249 652,242Z"/>
<path fill="#00bcd8" d="M655,253 652,260 645,256 648,249Z"/>
<path fill="#00c4d4" d="M652,260 648,267 641,263 645,256Z"/>
<path fill="#00c8d4" d="M648,267 645,274 641,280 634,277 638,270 641,263Z"/>
<path fill="#00ccd4" d="M641,280 637,287 633,294 629,301 623,297 627,290 631,284 634,277Z"/>
<path fill="#00d0d4" d="M629,301 625,307 622,314 615,310 619,304 623,297Z"/>
<path fill="#00b8d4" d="M622,314 618,320 612,316 615,310Z"/>
<path fill="#00a0d4" d="M618,320 615,326 609,322 612,316Z"/>
<path fill="#0088d8" d="M615,326 613,332 606,329 609,322Z"/>
<path fill="#0070d8" d="M613,332 610,338 603,335 606,329Z"/>
<path fill="#0058d8" d="M610,338 608,344 601,341 603,335Z"/>
<path fill="#0040dc" d="M608,344 606,350 599,348 601,341Z"/>
<path fill="#0028dc" d="M606,350 604,356 597,354 599,348Z"/>
<path fill="#0010dc" d="M604,356 602,362 595,361 597,354Z"/>
<path fill="#0010e0" d="M602,362 601,369 594,367 595,361Z"/>
<path fill="#0014e0" d="M601,369 600,375 593,374 594,367ZM771,726 778,729 775,736 767,732Z"/>
<path fill="#0014e4" d="M600,375 599,382 599,388 599,394 591,394 591,387 592,381 593,374Z"/>
<path fill="#0018e8" d="M599,394 598,401 599,407 591,407 591,401 591,394ZM618,311 614,318 608,314 611,308Z"/>
<path fill="#001cf4" d="M601,426 602,433 604,439 606,446 598,448 596,441 595,434 594,427ZM614,309 611,316 604,312 607,306Z"/>
<path fill="#001cf8" d="M606,446 608,452 610,459 612,465 604,467 602,461 600,454 598,448ZM654,234 650,241 644,238 647,231Z"/>
<path fill="#001cfc" d="M612,465 614,471 616,477 609,480 607,474 604,467Z"/>
<path fill="#0004fc" d="M784,685 789,688 795,691 801,693 798,700 792,698 786,695 781,692ZM782,689 787,692 793,695 799,698 805,700 803,707 796,705 790,702 784,699 778,696ZM785,696 791,699 798,702 804,704 810,706 817,708 815,716 808,714 801,711 795,709 788,706 782,703ZM789,703 796,706 793,713 786,710ZM802,709 809,711 816,713 822,714 821,722 814,720 807,718 800,716ZM808,715 814,717 821,719 828,720 827,728 820,726 813,724 805,722ZM813,722 820,723 828,725 826,732 819,731 811,729ZM812,726 819,728 827,729 826,737 818,735 810,733Z"/>
<path fill="#0074ff" d="M870,703 877,702 878,710 870,710ZM607,489 610,495 603,499 600,492ZM664,594 668,600 662,604 658,598ZM678,621 683,627 677,631 672,625Z"/>
<path fill="#00dcff" d="M877,702 884,702 885,709 878,710ZM651,216 648,223 641,220 644,213ZM610,298 606,305 600,301 603,295ZM594,471 597,478 589,481 587,474Z"/>
<path fill="#00fcbc" d="M884,702 892,701 893,709 885,709ZM582,501 585,508 579,512 575,505Z"/>
<path fill="#00fc60" d="M892,701 899,700 900,708 893,709Z"/>
<path fill="#006ce8" d="M569,75 577,74 578,81 570,82Z"/>
<path fill="#d8b008" d="M577,74 585,73 586,81 578,81Z"/>
<path fill="#fca800" d="M585,73 593,72 593,80 586,81Z"/>
<path fill="#fcb400" d="M593,72 601,72 602,79 593,80ZM602,85 610,85 610,92 602,92Z"/>
<path fill="#f8c800" d="M601,72 611,71 610,79 602,79Z"/>
<path fill="#f0e000" d="M611,71 621,72 620,79 610,79Z"/>
<path fill="#ccf000" d="M621,72 633,74 630,81 620,79Z"/>
<path fill="#9cfc00" d="M633,74 644,79 640,86 630,81ZM639,87 648,93 643,99 636,94ZM646,167 645,174 637,173 639,166Z"/>
<path fill="#7cff00" d="M644,79 654,86 649,92 640,86Z"/>
<path fill="#64ff00" d="M654,86 662,95 656,100 649,92ZM617,226 614,232 607,229 611,223Z"/>
<path fill="#34ff08" d="M669,105 673,115 666,118 662,108Z"/>
<path fill="#24ff18" d="M673,115 676,125 669,127 666,118Z"/>
<path fill="#1cff1c" d="M676,125 678,135 670,136 669,127Z"/>
<path fill="#08fc2c" d="M678,135 678,145 671,145 670,136Z"/>
<path fill="#04f86c" d="M678,145 678,154 671,154 671,145Z"/>
<path fill="#04f8ac" d="M678,154 678,163 671,162 671,154Z"/>
<path fill="#00f4ec" d="M678,163 677,172 670,171 671,162Z"/>
<path fill="#00ecec" d="M677,172 676,180 668,179 670,171Z"/>
<path fill="#00e4ec" d="M676,180 674,189 667,187 668,179Z"/>
<path fill="#00dcf0" d="M674,189 672,197 665,195 667,187ZM671,179 669,188 662,186 664,178Z"/>
<path fill="#00a4ec" d="M672,197 669,205 662,203 665,195Z"/>
<path fill="#006cec" d="M669,205 667,213 660,211 662,203Z"/>
<path fill="#0034ec" d="M667,213 664,221 657,218 660,211Z"/>
<path fill="#0030ec" d="M664,221 661,228 654,225 657,218Z"/>
<path fill="#0024e8" d="M637,278 633,285 627,281 630,275Z"/>
<path fill="#0020e8" d="M633,285 629,292 625,299 619,295 623,288 627,281Z"/>
<path fill="#0018e4" d="M622,305 618,311 611,308 615,301Z"/>
<path fill="#0014e8" d="M614,318 611,324 605,320 608,314Z"/>
<path fill="#0010e8" d="M611,324 608,330 602,327 605,320Z"/>
<path fill="#000ce8" d="M608,330 606,336 603,342 596,340 599,333 602,327ZM780,725 787,728 785,735 777,732Z"/>
<path fill="#0008ec" d="M603,342 601,348 594,346 596,340ZM857,736 864,736 865,743 857,743Z"/>
<path fill="#0004ec" d="M601,348 600,355 598,361 591,360 592,353 594,346ZM811,731 818,732 826,734 834,735 833,742 825,741 817,740 809,738Z"/>
<path fill="#0004f0" d="M598,361 597,368 589,366 591,360ZM796,726 804,728 811,731 809,738 801,736 794,733Z"/>
<path fill="#0008f0" d="M597,368 596,374 595,381 587,380 588,373 589,366Z"/>
<path fill="#000cf4" d="M595,381 594,388 594,394 586,394 587,387 587,380ZM633,276 629,283 625,290 621,296 618,303 614,309 607,306 611,299 615,293 619,286 622,279 626,272Z"/>
<path fill="#0010f4" d="M594,394 594,401 586,401 586,394ZM644,256 640,263 636,269 633,276 626,272 630,266 633,259 637,252Z"/>
<path fill="#0010f8" d="M594,401 594,407 587,408 586,401ZM775,717 782,720 779,727 772,724Z"/>
<path fill="#0018fc" d="M595,420 597,427 589,428 588,421ZM761,710 768,714 764,720 757,716Z"/>
<path fill="#0008fc" d="M777,686 782,689 778,696 773,692ZM774,690 780,693 785,696 782,703 776,700 770,696ZM777,697 783,700 789,703 786,710 780,707 774,704ZM781,705 788,708 784,715 778,711ZM779,709 786,712 783,719 776,716Z"/>
<path fill="#0068ff" d="M870,707 877,707 878,714 871,715ZM650,232 646,239 639,236 643,229ZM610,307 607,313 600,310 604,303ZM610,495 613,501 607,505 603,499ZM668,600 673,606 667,610 662,604ZM688,633 692,639 687,643 682,637ZM714,680 719,686 714,691 709,685Z"/>
<path fill="#00d4ff" d="M877,707 885,706 886,714 878,714ZM605,506 609,512 603,516 599,510ZM627,545 632,551 626,556 621,550Z"/>
<path fill="#00fcc4" d="M885,706 892,706 893,713 886,714ZM585,508 589,515 583,519 579,512Z"/>
<path fill="#00fc68" d="M892,706 900,705 901,712 893,713Z"/>
<path fill="#0084e0" d="M570,80 578,79 578,86 571,87Z"/>
<path fill="#ec9c04" d="M578,79 585,78 586,85 578,86Z"/>
<path fill="#ff9800" d="M585,78 593,77 594,84 586,85ZM594,86 602,85 602,92 595,93ZM603,98 610,98 610,106 603,106Z"/>
<path fill="#ffa800" d="M593,77 601,76 602,83 594,84Z"/>
<path fill="#f8c000" d="M601,76 610,76 610,83 602,83Z"/>
<path fill="#d4ec00" d="M620,76 631,78 629,86 619,84ZM619,182 618,189 610,186 612,180Z"/>
<path fill="#a8fc00" d="M631,78 642,83 638,90 629,86ZM649,116 652,123 645,125 642,119Z"/>
<path fill="#70ff00" d="M651,90 659,98 653,103 646,95ZM623,213 620,219 613,216 616,210Z"/>
<path fill="#54ff00" d="M659,98 665,107 658,111 653,103Z"/>
<path fill="#40ff08" d="M665,107 669,117 662,119 658,111Z"/>
<path fill="#2cff10" d="M669,117 672,126 664,128 662,119Z"/>
<path fill="#28ff10" d="M672,126 673,136 666,137 664,128Z"/>
<path fill="#18ff1c" d="M673,136 674,145 667,145 666,137Z"/>
<path fill="#10ff58" d="M674,145 674,154 667,154 667,145Z"/>
<path fill="#08ff98" d="M674,154 673,162 666,162 667,154Z"/>
<path fill="#00ffd8" d="M673,162 672,171 665,170 666,162ZM588,321 585,328 582,335 575,332 578,325 581,318ZM572,378 571,386 571,393 571,401 571,408 572,416 564,417 563,409 563,401 563,393 564,385 565,378ZM576,461 578,469 571,471 569,464Z"/>
<path fill="#00ece4" d="M672,171 671,179 664,178 665,170Z"/>
<path fill="#00c8fc" d="M669,188 667,196 660,194 662,186ZM637,566 642,572 636,577 631,571Z"/>
<path fill="#0094fc" d="M667,196 665,204 658,201 660,194ZM685,644 690,650 684,655 680,649Z"/>
<path fill="#005cf8" d="M665,204 663,211 656,209 658,201Z"/>
<path fill="#0028f8" d="M663,211 660,219 653,216 656,209Z"/>
<path fill="#0024f8" d="M660,219 657,227 650,224 653,216Z"/>
<path fill="#0020f8" d="M657,227 654,234 647,231 650,224Z"/>
<path fill="#0018f8" d="M650,241 647,249 640,245 644,238Z"/>
<path fill="#0014f4" d="M647,249 644,256 637,252 640,245Z"/>
<path fill="#0044f8" d="M607,322 604,328 598,325 601,319Z"/>
<path fill="#0058f8" d="M604,328 602,334 595,332 598,325Z"/>
<path fill="#006cf8" d="M602,334 599,341 592,338 595,332ZM711,683 716,689 711,694 705,688Z"/>
<path fill="#0080f8" d="M599,341 597,347 590,345 592,338Z"/>
<path fill="#0094f8" d="M597,347 595,354 588,352 590,345Z"/>
<path fill="#00a8fc" d="M595,354 594,360 586,359 588,352ZM651,584 655,590 649,595 645,589Z"/>
<path fill="#00acfc" d="M594,360 592,367 585,366 586,359ZM661,605 665,611 659,616 655,610ZM666,620 671,626 665,631 661,625Z"/>
<path fill="#00b0fc" d="M592,367 591,374 584,373 585,366ZM662,614 666,620 661,625 656,619Z"/>
<path fill="#00b8fc" d="M591,374 590,381 583,380 584,373Z"/>
<path fill="#00bcff" d="M590,381 590,387 582,387 583,380ZM590,442 592,449 585,451 583,444ZM645,230 642,238 635,234 639,227ZM621,278 617,285 611,282 614,275ZM622,530 626,537 620,541 616,535ZM879,725 886,725 887,732 880,733ZM879,730 887,729 888,737 880,738Z"/>
<path fill="#00c0ff" d="M590,387 589,394 582,394 582,387ZM595,339 593,346 586,344 588,337ZM599,484 602,491 596,494 592,488ZM879,721 886,720 887,728 879,728ZM617,524 622,530 616,535 611,529ZM636,557 641,563 635,568 631,562Z"/>
<path fill="#00c4ff" d="M589,394 589,401 582,401 582,394ZM589,435 590,442 583,444 581,437ZM878,716 886,715 886,723 879,724ZM617,285 614,292 607,288 611,282Z"/>
<path fill="#00c8ff" d="M589,401 589,408 582,408 582,401ZM878,711 885,711 886,718 878,719ZM658,210 656,217 649,215 651,208ZM613,518 617,524 611,529 607,523Z"/>
<path fill="#00ccff" d="M589,408 590,414 582,415 582,408ZM587,428 589,435 581,437 580,430ZM648,223 645,230 639,227 641,220ZM597,478 599,484 592,488 589,481ZM609,512 613,518 607,523 603,516ZM632,551 636,557 631,562 626,556Z"/>
<path fill="#00b8ff" d="M590,414 591,421 583,422 582,415Z"/>
<path fill="#00a4ff" d="M591,421 592,428 584,429 583,422ZM596,463 598,470 591,472 589,465ZM628,265 625,272 618,268 622,261Z"/>
<path fill="#0094ff" d="M592,428 593,434 586,436 584,429ZM660,597 664,603 658,607 654,601ZM675,624 679,630 674,634 669,628Z"/>
<path fill="#006cff" d="M595,441 597,448 589,450 587,443ZM626,528 630,534 624,538 620,532ZM649,567 654,573 648,577 643,571ZM703,659 708,665 702,670 697,664Z"/>
<path fill="#0058ff" d="M597,448 599,455 591,457 589,450ZM614,301 610,307 604,303 607,297ZM613,501 617,507 611,511 607,505ZM677,612 682,618 676,623 671,617ZM702,650 707,656 701,661 696,655Z"/>
<path fill="#0044ff" d="M599,455 601,461 593,464 591,457ZM646,239 643,247 636,243 639,236ZM639,546 644,552 638,556 633,550ZM672,597 676,603 670,608 666,602ZM701,642 705,648 700,652 695,646ZM728,689 734,694 729,700 723,694Z"/>
<path fill="#0060ff" d="M871,712 878,711 878,719 871,720ZM630,534 635,540 629,544 624,538ZM719,686 725,692 720,697 714,691Z"/>
<path fill="#00f8cc" d="M885,711 893,710 893,718 886,718Z"/>
<path fill="#00fc70" d="M893,710 900,710 901,717 893,718Z"/>
<path fill="#f88400" d="M578,83 586,82 587,89 579,90Z"/>
<path fill="#ff8c00" d="M586,82 594,81 594,89 587,89Z"/>
<path fill="#ffa000" d="M594,81 602,81 602,88 594,89Z"/>
<path fill="#fcbc00" d="M602,81 610,80 610,88 602,88ZM610,94 618,94 617,102 610,101Z"/>
<path fill="#f4d400" d="M610,80 620,81 619,88 610,88ZM618,94 625,96 623,103 617,102Z"/>
<path fill="#d8e800" d="M620,81 630,83 627,90 619,88Z"/>
<path fill="#b8f800" d="M630,83 639,87 636,94 627,90Z"/>
<path fill="#84fc00" d="M648,93 655,101 649,105 643,99ZM652,104 657,111 650,115 646,108Z"/>
<path fill="#68ff00" d="M655,101 661,109 654,113 649,105Z"/>
<path fill="#54ff04" d="M661,109 665,118 658,121 654,113Z"/>
<path fill="#44ff0c" d="M665,118 667,127 660,129 658,121ZM661,153 660,161 653,161 653,153Z"/>
<path fill="#40ff0c" d="M667,127 669,136 661,137 660,129Z"/>
<path fill="#30ff14" d="M669,136 669,145 662,145 661,137Z"/>
<path fill="#20ff3c" d="M669,145 669,154 662,153 662,145ZM622,236 619,243 612,240 616,233Z"/>
<path fill="#14ff68" d="M669,154 669,162 662,161 662,153Z"/>
<path fill="#04ff94" d="M669,162 668,170 661,169 662,161Z"/>
<path fill="#04fcb8" d="M668,170 667,179 660,177 661,169Z"/>
<path fill="#00f8dc" d="M667,179 665,187 658,185 660,177Z"/>
<path fill="#00f4ff" d="M665,187 663,195 656,193 658,185ZM641,229 638,236 631,232 634,226ZM590,473 592,480 585,483 582,475Z"/>
<path fill="#00d8ff" d="M661,202 658,210 651,208 654,200ZM586,422 587,428 580,430 579,423ZM602,500 605,506 599,510 595,503Z"/>
<path fill="#00a8ff" d="M656,217 653,225 646,222 649,215ZM606,497 609,504 603,507 599,501ZM646,569 650,576 644,580 640,574Z"/>
<path fill="#0088ff" d="M653,225 650,232 643,229 646,222ZM684,635 689,641 683,646 678,640ZM695,656 700,662 694,667 689,661Z"/>
<path fill="#0040ff" d="M621,287 617,294 611,290 615,284ZM621,513 625,519 619,523 615,517ZM705,648 710,654 704,658 700,652ZM721,674 726,680 721,685 715,679ZM737,703 743,708 738,714 732,709Z"/>
<path fill="#004cff" d="M617,294 614,301 607,297 611,290ZM617,507 621,513 615,517 611,511ZM667,591 672,597 666,602 661,596ZM691,630 696,636 690,640 685,634ZM711,662 716,668 711,673 706,667ZM723,683 728,689 723,694 717,688ZM731,698 737,703 732,709 726,703Z"/>
<path fill="#0078ff" d="M607,313 603,320 597,317 600,310ZM621,522 626,528 620,532 615,526ZM645,561 649,567 643,571 639,565ZM694,647 698,653 693,658 688,652Z"/>
<path fill="#009cff" d="M600,326 597,333 591,330 593,323ZM639,245 635,251 629,248 632,241ZM609,504 613,510 607,514 603,507ZM631,543 635,549 630,553 625,547ZM650,576 655,582 649,586 644,580ZM670,618 675,624 669,628 664,622Z"/>
<path fill="#00b0ff" d="M597,333 595,339 588,337 591,330ZM625,272 621,278 614,275 618,268Z"/>
<path fill="#00d0ff" d="M593,346 591,352 584,351 586,344ZM614,292 610,298 603,295 607,288Z"/>
<path fill="#00e4ff" d="M591,352 589,359 588,366 587,373 586,380 585,387 585,394 577,394 578,386 578,379 579,372 580,365 582,358 584,351ZM603,311 599,318 593,315 596,308ZM590,457 592,464 584,467 582,460Z"/>
<path fill="#00e0ff" d="M585,415 586,422 579,423 578,415ZM606,305 603,311 596,308 600,301ZM592,464 594,471 587,474 584,467ZM598,493 602,500 595,503 591,496ZM623,539 627,545 621,550 617,544Z"/>
<path fill="#00b4ff" d="M592,449 594,456 587,458 585,451ZM602,491 606,497 599,501 596,494ZM641,563 646,569 640,574 635,568Z"/>
<path fill="#00acff" d="M594,456 596,463 589,465 587,458ZM642,238 639,245 632,241 635,234ZM626,537 631,543 625,547 620,541Z"/>
<path fill="#0098ff" d="M598,470 601,476 594,479 591,472ZM632,258 628,265 622,261 625,255Z"/>
<path fill="#000cfc" d="M772,694 777,697 774,704 768,700ZM769,698 775,701 781,705 778,711 771,708 765,704ZM773,705 779,709 776,716 769,712Z"/>
<path fill="#005cff" d="M871,717 878,716 879,724 871,724ZM658,579 663,585 657,589 652,583ZM673,606 677,612 671,617 667,610ZM697,644 702,650 696,655 691,649ZM713,671 718,677 712,682 707,676Z"/>
<path fill="#00f8d0" d="M886,715 893,715 894,722 886,723Z"/>
<path fill="#00f874" d="M893,715 901,714 901,722 894,722Z"/>
<path fill="#00f844" d="M901,714 908,713 916,713 923,712 931,711 938,711 946,710 953,709 961,709 968,708 976,707 984,706 991,706 992,713 984,714 977,715 969,715 962,716 954,717 947,718 939,718 932,719 924,720 916,720 909,721 901,722ZM901,719 909,718 916,717 924,717 931,716 939,715 946,715 954,714 961,713 969,712 976,712 984,711 985,718 977,719 970,720 962,721 955,721 947,722 939,723 932,724 924,724 917,725 909,726 902,726ZM902,723 909,723 917,722 924,721 932,721 939,720 947,719 954,718 962,718 969,717 970,724 963,725 955,726 947,727 940,727 932,728 925,729 917,730 910,730 902,731ZM902,728 909,727 917,727 925,726 932,725 940,724 947,724 955,723 962,722 963,730 955,730 948,731 940,732 933,733 925,733 918,734 910,735 903,736Z"/>
<path fill="#00acd0" d="M571,88 579,87 579,95 572,96Z"/>
<path fill="#fc6c00" d="M579,87 586,87 587,94 579,95Z"/>
<path fill="#ff7c00" d="M586,87 594,86 595,93 587,94ZM595,99 603,98 603,106 596,106Z"/>
<path fill="#e0e000" d="M619,85 628,87 626,94 618,93Z"/>
<path fill="#c8f400" d="M628,87 637,91 633,98 626,94ZM624,184 622,190 615,188 617,182Z"/>
<path fill="#b0f800" d="M637,91 645,97 640,102 633,98Z"/>
<path fill="#98fc00" d="M645,97 652,104 646,108 640,102Z"/>
<path fill="#70fc04" d="M657,111 660,120 653,122 650,115Z"/>
<path fill="#5cff08" d="M660,120 663,128 664,137 657,138 656,130 653,122Z"/>
<path fill="#48ff0c" d="M664,137 665,145 658,146 657,138Z"/>
<path fill="#34ff18" d="M665,145 665,154 658,153 658,146Z"/>
<path fill="#24ff24" d="M665,154 665,162 657,161 658,153Z"/>
<path fill="#10ff30" d="M665,162 664,170 656,169 657,161Z"/>
<path fill="#0cff5c" d="M664,170 662,178 655,176 656,169Z"/>
<path fill="#04ff84" d="M662,178 661,186 654,184 655,176Z"/>
<path fill="#00ffb0" d="M661,186 659,193 652,191 654,184ZM637,227 634,234 627,230 630,224ZM573,348 572,355 570,363 563,361 564,354 566,346ZM568,424 569,432 561,433 560,425Z"/>
<path fill="#00f8c8" d="M659,193 656,201 649,199 652,191Z"/>
<path fill="#00f4e4" d="M656,201 654,208 647,206 649,199Z"/>
<path fill="#00ecff" d="M654,208 651,216 644,213 647,206ZM596,324 593,331 586,328 589,321ZM586,443 588,450 580,452 578,445ZM635,243 631,249 624,246 628,239ZM628,256 624,263 617,259 621,253ZM592,480 595,486 588,490 585,483ZM618,533 623,539 617,544 612,538Z"/>
<path fill="#0090ff" d="M635,251 632,258 625,255 629,248ZM613,510 617,516 611,520 607,514ZM655,582 659,588 653,592 649,586Z"/>
<path fill="#00f0fc" d="M593,331 591,338 584,335 586,328ZM624,263 621,270 617,276 610,273 614,266 617,259ZM605,515 609,521 614,527 608,532 603,525 599,519Z"/>
<path fill="#00f8fc" d="M591,338 588,344 581,342 584,335ZM582,422 583,429 575,431 574,423ZM613,283 610,290 603,286 607,279ZM598,502 601,508 595,512 591,505Z"/>
<path fill="#00fcfc" d="M588,344 586,351 579,349 581,342ZM581,415 582,422 574,423 573,416ZM610,290 606,296 599,292 603,286Z"/>
<path fill="#00fffc" d="M586,351 585,358 583,365 582,372 581,379 581,387 580,394 580,401 580,408 581,415 573,416 573,408 573,401 573,393 573,386 574,379 575,371 576,364 578,357 579,349Z"/>
<path fill="#00f4fc" d="M583,429 584,436 577,438 575,431ZM617,276 613,283 607,279 610,273ZM585,459 587,466 590,473 582,475 580,468 578,461ZM601,508 605,515 599,519 595,512Z"/>
<path fill="#00f0ff" d="M584,436 586,443 578,445 577,438ZM638,236 635,243 628,239 631,232Z"/>
<path fill="#0084ff" d="M617,516 621,522 615,526 611,520Z"/>
<path fill="#0050ff" d="M635,540 639,546 633,550 629,544ZM687,624 691,630 685,634 681,629Z"/>
<path fill="#0038ff" d="M644,552 648,558 653,564 657,570 651,575 647,568 642,562 638,556ZM681,609 685,615 690,621 695,627 689,632 684,626 680,620 675,614ZM715,659 720,665 714,670 709,664ZM743,708 750,713 745,719 738,714Z"/>
<path fill="#0008f8" d="M788,708 794,710 791,718 784,715ZM786,712 792,715 790,722 783,719ZM784,716 791,719 788,726 781,723Z"/>
<path fill="#0054ff" d="M871,721 879,721 879,728 872,729ZM663,585 667,591 661,596 657,589ZM871,726 879,725 880,733 872,734ZM682,618 687,624 681,629 676,623ZM872,731 879,730 880,738 872,738ZM707,656 711,662 706,667 701,661ZM718,677 723,683 717,688 712,682ZM725,692 731,698 726,703 720,697Z"/>
<path fill="#00f4d4" d="M886,720 894,719 894,727 887,728ZM886,725 894,724 895,732 887,732ZM887,729 894,729 895,736 888,737Z"/>
<path fill="#00f878" d="M894,719 901,719 902,726 894,727ZM894,724 902,723 902,731 895,732Z"/>
<path fill="#00f840" d="M984,711 992,710 992,718 985,718ZM969,717 977,716 984,716 992,715 993,722 985,723 978,724 970,724ZM962,722 970,722 977,721 985,720 992,719 993,727 986,728 978,728 971,729 963,730ZM553,418 554,426 547,427 546,418Z"/>
<path fill="#00b8cc" d="M572,93 579,92 580,99 572,100Z"/>
<path fill="#fc5400" d="M579,92 587,91 587,98 580,99Z"/>
<path fill="#ff7000" d="M587,91 594,90 595,97 587,98Z"/>
<path fill="#ff9000" d="M594,90 602,89 602,97 595,97Z"/>
<path fill="#fcac00" d="M602,89 610,89 610,97 602,97Z"/>
<path fill="#f8c400" d="M610,89 618,90 617,97 610,97Z"/>
<path fill="#e8dc00" d="M618,90 627,92 624,99 617,97ZM627,118 630,121 624,126 622,123Z"/>
<path fill="#d8f400" d="M627,92 635,95 631,102 624,99ZM626,177 624,184 617,182 618,176Z"/>
<path fill="#b4f800" d="M642,100 648,106 642,111 637,106Z"/>
<path fill="#a0fc00" d="M648,106 653,114 646,117 642,111Z"/>
<path fill="#78ff04" d="M656,121 658,129 651,131 649,124Z"/>
<path fill="#74ff04" d="M658,129 660,137 653,138 651,131ZM656,146 656,153 649,153 649,146Z"/>
<path fill="#60ff04" d="M660,137 660,145 653,146 653,138Z"/>
<path fill="#54ff08" d="M660,145 661,153 653,153 653,146Z"/>
<path fill="#34ff10" d="M660,161 659,169 652,168 653,161Z"/>
<path fill="#24ff28" d="M659,169 658,177 651,176 652,168Z"/>
<path fill="#18ff3c" d="M658,177 656,185 649,183 651,176ZM615,250 612,256 605,253 609,246Z"/>
<path fill="#08ff54" d="M656,185 654,192 647,190 649,183ZM633,225 630,232 623,228 626,222Z"/>
<path fill="#08ff8c" d="M654,192 652,200 645,197 647,190Z"/>
<path fill="#04fcc8" d="M652,200 650,207 643,205 645,197Z"/>
<path fill="#00fcff" d="M650,207 647,214 640,212 643,205Z"/>
<path fill="#00fff8" d="M606,296 602,303 599,309 595,316 589,313 592,306 596,299 599,292ZM585,474 588,481 581,484 578,477Z"/>
<path fill="#00fff4" d="M595,316 592,322 589,329 582,326 585,319 589,313ZM583,467 585,474 578,477 575,470Z"/>
<path fill="#00fff0" d="M589,329 586,336 584,343 582,350 575,348 577,341 580,334 582,326ZM581,460 583,467 575,470 573,462Z"/>
<path fill="#00ffec" d="M582,350 580,357 579,364 578,372 577,379 576,386 576,394 575,401 576,408 576,415 569,416 568,409 568,401 568,393 568,386 569,378 570,371 572,363 573,356 575,348ZM579,453 581,460 573,462 571,455Z"/>
<path fill="#00fcec" d="M576,415 577,423 569,424 569,416ZM584,483 587,490 590,497 583,501 580,493 576,486Z"/>
<path fill="#00fcf0" d="M577,423 578,430 571,431 569,424ZM590,497 593,504 587,508 583,501ZM607,542 612,548 606,552 601,546Z"/>
<path fill="#00fcf4" d="M578,430 580,437 572,439 571,431Z"/>
<path fill="#00f8f4" d="M580,437 581,444 574,446 572,439Z"/>
<path fill="#00f8f8" d="M581,444 583,452 585,459 578,461 576,454 574,446ZM594,495 598,502 591,505 587,499Z"/>
<path fill="#0064ff" d="M654,573 658,579 652,583 648,577ZM692,639 697,644 691,649 687,643ZM708,665 713,671 707,676 702,670Z"/>
<path fill="#003cff" d="M676,603 681,609 675,614 670,608ZM710,654 715,659 709,664 704,658ZM726,680 732,685 726,691 721,685ZM734,694 740,699 735,705 729,700Z"/>
<path fill="#00b8d0" d="M572,97 580,96 580,103 573,104Z"/>
<path fill="#ff4400" d="M580,96 587,95 588,103 580,103Z"/>
<path fill="#ff6400" d="M587,95 595,95 595,102 588,103Z"/>
<path fill="#ff8800" d="M595,95 602,94 603,101 595,102Z"/>
<path fill="#fca000" d="M602,94 610,94 610,101 603,101Z"/>
<path fill="#ecf000" d="M625,96 633,99 629,106 623,103ZM630,103 636,107 631,113 627,110ZM633,125 635,129 628,132 626,128Z"/>
<path fill="#dcf400" d="M633,99 639,104 634,109 629,106Z"/>
<path fill="#ccf800" d="M639,104 644,109 638,114 634,109Z"/>
<path fill="#bcfc00" d="M644,109 649,116 642,119 638,114Z"/>
<path fill="#80ff00" d="M655,138 656,146 649,146 648,139Z"/>
<path fill="#6cff04" d="M656,153 656,161 648,160 649,153Z"/>
<path fill="#64ff08" d="M656,161 655,169 647,168 648,160Z"/>
<path fill="#50ff10" d="M655,169 654,176 646,175 647,168Z"/>
<path fill="#3cff18" d="M654,176 652,184 645,182 646,175Z"/>
<path fill="#28ff24" d="M652,184 650,191 643,189 645,182Z"/>
<path fill="#1cff48" d="M650,191 648,198 641,196 643,189Z"/>
<path fill="#0cff6c" d="M648,198 645,205 638,203 641,196Z"/>
<path fill="#00ff90" d="M645,205 643,213 636,210 638,203ZM602,285 598,292 591,288 595,281Z"/>
<path fill="#00ff9c" d="M643,213 640,220 633,217 636,210ZM591,305 587,312 580,309 584,302Z"/>
<path fill="#00ffa4" d="M640,220 637,227 630,224 633,217ZM584,319 581,326 574,323 577,316ZM566,393 566,401 566,409 559,409 559,401 559,393ZM572,479 575,487 568,490 565,482Z"/>
<path fill="#00ffb8" d="M634,234 631,240 624,237 627,230ZM569,432 570,439 563,441 561,433ZM572,463 574,470 567,473 564,465ZM585,518 590,525 583,529 579,522Z"/>
<path fill="#00ffc0" d="M631,240 627,247 620,244 624,237ZM570,439 572,447 565,448 563,441ZM574,470 576,478 569,480 567,473Z"/>
<path fill="#00ffcc" d="M627,247 624,254 620,261 617,267 613,274 606,270 610,264 613,257 617,250 620,244ZM576,478 579,485 572,488 569,480Z"/>
<path fill="#00ffd0" d="M613,274 609,281 606,287 602,294 598,300 592,297 595,290 599,284 603,277 606,270ZM574,454 576,461 569,464 567,456Z"/>
<path fill="#00ffd4" d="M598,300 595,307 591,314 588,321 581,318 584,311 588,304 592,297Z"/>
<path fill="#00ffdc" d="M582,335 580,342 578,349 576,356 574,364 573,371 572,378 565,378 566,370 567,362 569,355 571,347 573,339 575,332ZM572,416 572,423 574,431 566,432 565,424 564,417Z"/>
<path fill="#00ffe0" d="M574,431 575,438 567,440 566,432ZM578,469 581,476 574,479 571,471Z"/>
<path fill="#00ffe4" d="M575,438 577,446 569,447 567,440Z"/>
<path fill="#00ffe8" d="M577,446 579,453 571,455 569,447ZM581,476 584,483 576,486 574,479Z"/>
<path fill="#00fcf8" d="M588,481 591,488 594,495 587,499 584,492 581,484Z"/>
<path fill="#00ecfc" d="M614,527 618,533 612,538 608,532Z"/>
<path fill="#0048ff" d="M696,636 701,642 695,646 690,640ZM716,668 721,674 715,679 711,673Z"/>
<path fill="#000cf8" d="M777,713 784,716 781,723 774,720ZM782,720 789,723 786,730 779,727Z"/>
<path fill="#00f478" d="M894,729 902,728 903,736 895,736ZM570,498 573,506 566,509 563,501Z"/>
<path fill="#0000ec" d="M543,105 550,104 551,111 543,112ZM834,735 841,735 849,736 857,736 857,743 849,743 841,743 833,742ZM566,107 573,106 574,113 567,114Z"/>
<path fill="#0000f0" d="M550,104 558,103 558,111 551,111Z"/>
<path fill="#ff3c00" d="M580,101 588,100 588,107 581,108Z"/>
<path fill="#ff5c00" d="M588,100 595,99 596,106 588,107Z"/>
<path fill="#ffb400" d="M610,98 617,99 616,106 610,106Z"/>
<path fill="#f8d000" d="M617,99 624,100 622,107 616,106Z"/>
<path fill="#f4e800" d="M624,100 630,103 627,110 622,107Z"/>
<path fill="#e0f400" d="M636,107 641,112 635,117 631,113ZM637,115 641,120 634,124 631,120ZM627,171 626,177 618,176 620,170Z"/>
<path fill="#d8f800" d="M641,112 645,118 638,122 635,117ZM641,120 643,126 636,129 634,124ZM631,172 630,178 623,177 624,171Z"/>
<path fill="#c8fc00" d="M645,118 648,124 641,127 638,122Z"/>
<path fill="#b4fc00" d="M648,124 650,131 651,139 644,139 642,133 641,127Z"/>
<path fill="#a0ff00" d="M651,139 652,146 644,146 644,139ZM639,180 637,187 630,185 632,179Z"/>
<path fill="#9cff00" d="M652,146 652,153 644,153 644,146Z"/>
<path fill="#98ff00" d="M652,153 651,161 644,160 644,153Z"/>
<path fill="#90ff00" d="M651,161 650,168 643,167 644,160Z"/>
<path fill="#78ff00" d="M650,168 649,175 642,174 643,167ZM628,199 626,206 619,203 621,197Z"/>
<path fill="#48ff00" d="M648,183 646,190 638,188 640,181Z"/>
<path fill="#38ff18" d="M646,190 643,197 636,195 638,188Z"/>
<path fill="#24ff30" d="M643,197 641,204 634,201 636,195Z"/>
<path fill="#10ff44" d="M641,204 639,211 632,208 634,201Z"/>
<path fill="#0cff4c" d="M639,211 636,218 629,215 632,208Z"/>
<path fill="#0cff50" d="M636,218 633,225 626,222 629,215Z"/>
<path fill="#04ff58" d="M630,232 626,238 620,235 623,228Z"/>
<path fill="#04ff60" d="M626,238 623,245 616,242 620,235Z"/>
<path fill="#00ff64" d="M623,245 620,252 613,248 616,242Z"/>
<path fill="#00ff6c" d="M620,252 616,259 609,255 613,248ZM562,409 562,417 555,417 554,409Z"/>
<path fill="#00ff74" d="M616,259 612,265 606,262 609,255ZM565,473 568,481 560,483 558,475Z"/>
<path fill="#00ff78" d="M612,265 609,272 602,268 606,262ZM562,417 563,425 556,426 555,417ZM563,449 565,456 558,458 556,451Z"/>
<path fill="#00ff80" d="M609,272 605,279 599,275 602,268ZM563,425 564,432 557,434 556,426Z"/>
<path fill="#00ff88" d="M605,279 602,285 595,281 599,275ZM570,488 574,496 567,499 563,491Z"/>
<path fill="#00ff98" d="M598,292 594,298 591,305 584,302 588,295 591,288ZM566,440 568,448 560,450 558,442ZM569,472 572,479 565,482 562,474Z"/>
<path fill="#00ffa0" d="M587,312 584,319 577,316 580,309ZM566,409 567,416 559,417 559,409ZM568,448 569,455 562,457 560,450ZM577,503 581,511 574,514 570,507Z"/>
<path fill="#00ffac" d="M578,333 576,340 573,348 566,346 569,338 571,331ZM570,363 569,370 568,378 560,377 561,369 563,361ZM569,455 572,463 564,465 562,457ZM575,487 578,494 571,497 568,490ZM581,511 585,518 579,522 574,514Z"/>
<path fill="#00ffc8" d="M572,447 574,454 567,456 565,448Z"/>
<path fill="#00f8f0" d="M593,504 597,511 601,517 595,521 591,515 587,508ZM606,533 611,539 605,543 600,537ZM612,548 616,554 621,560 626,566 620,570 615,564 610,558 606,552Z"/>
<path fill="#00f4f4" d="M601,517 606,524 610,530 604,534 599,528 595,521ZM611,539 615,545 609,549 605,543Z"/>
<path fill="#00f4f8" d="M610,530 614,536 608,541 604,534Z"/>
<path fill="#00f0f8" d="M614,536 619,542 613,547 608,541ZM620,551 625,557 619,561 614,555Z"/>
<path fill="#00e8f8" d="M619,542 624,548 618,553 613,547ZM629,563 634,569 628,573 623,567Z"/>
<path fill="#00e4fc" d="M624,548 628,554 622,559 618,553Z"/>
<path fill="#00dcfc" d="M628,554 633,560 627,565 622,559Z"/>
<path fill="#00d4fc" d="M633,560 637,566 631,571 627,565Z"/>
<path fill="#00c0fc" d="M642,572 646,578 641,583 636,577Z"/>
<path fill="#00b4fc" d="M646,578 651,584 645,589 641,583ZM656,599 661,605 655,610 650,604Z"/>
<path fill="#00a0fc" d="M655,590 660,597 654,601 649,595ZM676,632 681,638 675,643 670,637Z"/>
<path fill="#007cff" d="M674,615 678,621 672,625 668,619ZM704,668 709,674 704,679 699,673Z"/>
<path fill="#0070ff" d="M683,627 688,633 682,637 677,631ZM698,653 703,659 697,664 693,658ZM709,674 714,680 709,685 704,679Z"/>
<path fill="#0020fc" d="M755,705 761,710 757,716 751,711ZM759,713 766,718 762,724 755,720Z"/>
<path fill="#0004f4" d="M789,723 796,726 794,733 786,730Z"/>
<path fill="#004cec" d="M872,735 880,735 880,742 873,743Z"/>
<path fill="#00acec" d="M880,735 887,734 888,742 880,742Z"/>
<path fill="#00e0c4" d="M887,734 895,733 896,741 888,742Z"/>
<path fill="#00e46c" d="M895,733 902,733 903,740 896,741Z"/>
<path fill="#00e440" d="M902,733 910,732 917,731 925,730 933,730 940,729 948,728 948,736 941,737 933,737 926,738 918,739 911,739 903,740ZM551,460 554,468 546,470 544,462Z"/>
<path fill="#00e43c" d="M948,728 955,728 963,727 970,726 978,725 985,725 993,724 994,731 986,732 978,733 971,734 963,734 956,735 948,736ZM549,452 551,460 544,462 542,454Z"/>
<path fill="#0000d8" d="M543,110 551,109 551,116 544,117ZM833,739 841,740 849,740 857,740 857,748 849,748 841,748 832,747ZM566,111 574,110 575,117 567,118Z"/>
<path fill="#0000dc" d="M551,109 558,108 559,115 551,116Z"/>
<path fill="#0000e4" d="M558,108 566,107 567,114 559,115Z"/>
<path fill="#0090d4" d="M573,106 581,105 582,112 574,113Z"/>
<path fill="#f83400" d="M581,105 588,104 589,111 582,112Z"/>
<path fill="#fc5000" d="M588,104 596,103 596,111 589,111Z"/>
<path fill="#fc7000" d="M596,103 603,103 603,110 596,111Z"/>
<path fill="#fc9000" d="M603,103 610,103 610,110 603,110Z"/>
<path fill="#ffac00" d="M610,103 616,103 615,111 610,110Z"/>
<path fill="#fcc800" d="M616,103 623,105 620,112 615,111Z"/>
<path fill="#f4e400" d="M623,105 628,107 624,114 620,112Z"/>
<path fill="#f0ec00" d="M628,107 633,111 628,116 624,114Z"/>
<path fill="#e8f000" d="M633,111 637,115 631,120 628,116ZM634,118 637,122 630,126 628,123ZM628,165 627,171 620,170 621,164Z"/>
<path fill="#ccfc00" d="M643,126 645,132 646,139 639,140 638,134 636,129Z"/>
<path fill="#c0ff00" d="M646,139 647,146 640,146 639,140Z"/>
<path fill="#bcff00" d="M647,146 647,153 640,153 640,146Z"/>
<path fill="#b8fc00" d="M647,153 647,160 639,160 640,153Z"/>
<path fill="#b0fc00" d="M647,160 646,167 639,166 639,160ZM640,174 639,180 632,179 633,172Z"/>
<path fill="#88ff00" d="M645,174 643,181 636,180 637,173Z"/>
<path fill="#74ff00" d="M643,181 641,188 634,186 636,180ZM626,206 623,213 616,210 619,203Z"/>
<path fill="#60ff10" d="M641,188 639,196 632,193 634,186Z"/>
<path fill="#48ff20" d="M639,196 637,202 630,200 632,193Z"/>
<path fill="#34ff30" d="M637,202 634,209 627,207 630,200Z"/>
<path fill="#30ff30" d="M634,209 632,216 625,213 627,207Z"/>
<path fill="#2cff34" d="M632,216 629,223 622,220 625,213Z"/>
<path fill="#28ff34" d="M629,223 626,230 619,227 622,220Z"/>
<path fill="#24ff38" d="M626,230 622,236 616,233 619,227Z"/>
<path fill="#1cff3c" d="M619,243 615,250 609,246 612,240Z"/>
<path fill="#14ff3c" d="M612,256 608,263 602,260 605,253Z"/>
<path fill="#10ff3c" d="M608,263 605,270 598,266 602,260Z"/>
<path fill="#0cff3c" d="M605,270 601,276 595,273 598,266Z"/>
<path fill="#08ff3c" d="M601,276 598,283 591,279 595,273Z"/>
<path fill="#04ff3c" d="M598,283 594,289 588,286 591,279Z"/>
<path fill="#00ff3c" d="M594,289 590,296 587,303 583,310 580,317 573,314 576,307 580,299 584,293 588,286Z"/>
<path fill="#00ff40" d="M580,317 577,324 574,332 571,339 569,347 562,345 564,337 567,329 570,321 573,314Z"/>
<path fill="#00ff48" d="M567,354 565,362 558,360 560,352Z"/>
<path fill="#00ff50" d="M564,370 563,377 556,377 557,368Z"/>
<path fill="#00ff58" d="M563,377 562,385 555,385 556,377Z"/>
<path fill="#00ff5c" d="M562,385 562,393 554,393 555,385Z"/>
<path fill="#00ff60" d="M562,393 562,401 554,401 554,393Z"/>
<path fill="#00ff68" d="M562,401 562,409 554,409 554,401Z"/>
<path fill="#00ff8c" d="M564,432 566,440 558,442 557,434ZM567,464 569,472 562,474 560,466Z"/>
<path fill="#00fcd0" d="M579,485 582,492 575,495 572,488ZM594,532 599,538 593,542 588,536Z"/>
<path fill="#00fcd4" d="M582,492 586,499 579,503 575,495Z"/>
<path fill="#00fcd8" d="M586,499 589,506 583,510 579,503ZM593,522 598,529 592,533 587,526ZM599,538 603,544 597,549 593,542Z"/>
<path fill="#00fce0" d="M589,506 593,513 587,517 583,510ZM598,529 602,535 596,540 592,533Z"/>
<path fill="#00f8e4" d="M593,513 597,520 591,524 587,517Z"/>
<path fill="#00f8e8" d="M597,520 602,526 595,531 591,524Z"/>
<path fill="#00f8ec" d="M602,526 606,533 600,537 595,531Z"/>
<path fill="#00f0f4" d="M615,545 620,551 614,555 609,549Z"/>
<path fill="#00ecf8" d="M625,557 629,563 623,567 619,561Z"/>
<path fill="#00e0f8" d="M634,569 638,575 632,579 628,573Z"/>
<path fill="#00d4f8" d="M638,575 643,581 637,585 632,579Z"/>
<path fill="#00ccfc" d="M643,581 647,587 641,591 637,585Z"/>
<path fill="#00c4fc" d="M647,587 652,593 646,598 641,591Z"/>
<path fill="#00bcfc" d="M652,593 656,599 650,604 646,598Z"/>
<path fill="#00a0ff" d="M665,611 670,618 664,622 659,616Z"/>
<path fill="#0014f0" d="M773,721 780,725 777,732 769,728Z"/>
<path fill="#0008e4" d="M787,728 795,730 792,738 785,735Z"/>
<path fill="#0004e0" d="M795,730 802,733 800,740 792,738Z"/>
<path fill="#0004dc" d="M802,733 810,735 808,742 800,740Z"/>
<path fill="#0004d8" d="M810,735 818,737 825,738 833,739 832,747 824,746 816,744 808,742Z"/>
<path fill="#0008d8" d="M857,740 865,740 865,748 857,748Z"/>
<path fill="#0014d8" d="M865,740 872,740 873,747 865,748Z"/>
<path fill="#0048d8" d="M872,740 880,739 881,747 873,747Z"/>
<path fill="#00a0d8" d="M880,739 888,739 888,746 881,747Z"/>
<path fill="#00ccb0" d="M888,739 895,738 896,745 888,746Z"/>
<path fill="#00d060" d="M895,738 903,737 903,745 896,745Z"/>
<path fill="#00d03c" d="M903,737 910,737 918,736 925,735 926,743 919,743 911,744 903,745Z"/>
<path fill="#00d038" d="M925,735 933,734 941,734 948,733 956,732 963,731 971,731 978,730 979,737 971,738 964,739 956,740 949,740 941,741 934,742 926,743Z"/>
<path fill="#00d034" d="M978,730 986,729 993,728 994,736 986,737 979,737Z"/>
<path fill="#0000c0" d="M544,114 551,113 552,120 544,121ZM841,745 849,745 857,745 857,753 849,753 840,752ZM567,116 574,115 575,122 568,123Z"/>
<path fill="#0000c8" d="M551,113 559,112 560,119 552,120Z"/>
<path fill="#0000d0" d="M559,112 566,111 567,118 560,119Z"/>
<path fill="#0074cc" d="M574,110 581,109 582,117 575,117Z"/>
<path fill="#e82c00" d="M581,109 589,109 589,116 582,117Z"/>
<path fill="#f04400" d="M589,109 596,108 597,115 589,116Z"/>
<path fill="#f06000" d="M596,108 603,107 603,115 597,115Z"/>
<path fill="#f07c00" d="M603,107 610,107 610,115 603,115Z"/>
<path fill="#f09c00" d="M610,107 616,108 615,115 610,115Z"/>
<path fill="#f0b400" d="M616,108 621,109 619,116 615,115Z"/>
<path fill="#ece000" d="M626,111 630,114 625,120 622,118Z"/>
<path fill="#ecec00" d="M630,114 634,118 628,123 625,120Z"/>
<path fill="#e4f400" d="M637,122 639,128 632,130 630,126Z"/>
<path fill="#e4f800" d="M639,128 641,133 634,135 632,130ZM633,165 631,172 624,171 625,164Z"/>
<path fill="#e4fc00" d="M641,133 642,140 635,141 634,135Z"/>
<path fill="#e4ff00" d="M642,140 643,146 635,147 635,141Z"/>
<path fill="#dcfc00" d="M643,146 643,153 635,153 635,147Z"/>
<path fill="#d8fc00" d="M643,153 642,160 635,159 635,153Z"/>
<path fill="#d0fc00" d="M642,160 641,167 634,166 635,159Z"/>
<path fill="#c0fc00" d="M641,167 640,174 633,172 634,166Z"/>
<path fill="#88ff08" d="M637,187 635,194 628,192 630,185Z"/>
<path fill="#70ff10" d="M635,194 633,201 625,198 628,192Z"/>
<path fill="#54ff18" d="M633,201 630,208 623,205 625,198Z"/>
<path fill="#50ff18" d="M630,208 627,215 620,212 623,205Z"/>
<path fill="#4cff18" d="M627,215 625,221 618,218 620,212Z"/>
<path fill="#48ff18" d="M625,221 621,228 615,225 618,218Z"/>
<path fill="#44ff1c" d="M621,228 618,234 611,231 615,225Z"/>
<path fill="#40ff1c" d="M618,234 615,241 608,237 611,231Z"/>
<path fill="#3cff1c" d="M615,241 611,248 605,244 608,237Z"/>
<path fill="#38ff20" d="M611,248 608,254 601,251 605,244Z"/>
<path fill="#30fc24" d="M608,254 604,261 598,257 601,251Z"/>
<path fill="#28fc24" d="M604,261 601,268 594,264 598,257Z"/>
<path fill="#20fc28" d="M601,268 597,274 591,271 594,264Z"/>
<path fill="#18fc2c" d="M597,274 594,281 587,277 591,271Z"/>
<path fill="#14fc2c" d="M594,281 590,287 584,284 587,277Z"/>
<path fill="#0cfc30" d="M590,287 586,294 583,301 576,297 580,290 584,284Z"/>
<path fill="#08fc30" d="M583,301 579,308 572,305 576,297Z"/>
<path fill="#08f830" d="M579,308 576,315 572,322 566,320 569,312 572,305Z"/>
<path fill="#04f830" d="M572,322 570,330 567,338 565,345 558,343 560,335 563,328 566,320Z"/>
<path fill="#00f830" d="M565,345 563,353 555,351 558,343Z"/>
<path fill="#00fc34" d="M563,353 561,361 560,369 552,368 554,360 555,351Z"/>
<path fill="#00fc38" d="M560,369 558,377 551,376 552,368Z"/>
<path fill="#00fc3c" d="M558,377 558,385 557,393 550,393 550,384 551,376Z"/>
<path fill="#00fc40" d="M557,393 557,401 557,409 550,409 549,401 550,393Z"/>
<path fill="#00fc4c" d="M558,417 559,425 551,426 550,418Z"/>
<path fill="#00fc64" d="M560,433 561,441 554,443 552,434ZM560,458 563,465 555,468 553,460Z"/>
<path fill="#00fc6c" d="M561,441 563,449 556,451 554,443ZM563,465 565,473 558,475 555,468Z"/>
<path fill="#00ff84" d="M565,456 567,464 560,466 558,458Z"/>
<path fill="#00ffb4" d="M578,494 582,501 575,505 571,497Z"/>
<path fill="#00fccc" d="M589,515 593,522 587,526 583,519Z"/>
<path fill="#00fce8" d="M602,535 607,542 601,546 596,540Z"/>
<path fill="#00f4f0" d="M626,566 630,572 624,576 620,570Z"/>
<path fill="#00ecf0" d="M630,572 635,578 629,582 624,576Z"/>
<path fill="#00e4f4" d="M635,578 639,584 633,588 629,582Z"/>
<path fill="#00dcf4" d="M639,584 644,590 638,594 633,588Z"/>
<path fill="#00d4f4" d="M644,590 648,596 642,600 638,594Z"/>
<path fill="#00ccf8" d="M648,596 653,602 647,606 642,600Z"/>
<path fill="#00c4f8" d="M653,602 657,608 651,613 647,606Z"/>
<path fill="#00b8f8" d="M657,608 662,614 656,619 651,613Z"/>
<path fill="#00a4fc" d="M671,626 676,632 670,637 665,631Z"/>
<path fill="#0098fc" d="M681,638 685,644 680,649 675,643Z"/>
<path fill="#008cfc" d="M690,650 695,656 689,661 684,655Z"/>
<path fill="#002cf8" d="M750,713 756,717 752,724 745,719Z"/>
<path fill="#0024f0" d="M756,717 763,722 760,728 752,724Z"/>
<path fill="#000cd8" d="M778,729 786,732 783,739 775,736Z"/>
<path fill="#0008d0" d="M786,732 793,735 791,742 783,739Z"/>
<path fill="#0004cc" d="M793,735 801,737 799,744 791,742Z"/>
<path fill="#0004c8" d="M801,737 809,739 807,747 799,744Z"/>
<path fill="#0004c4" d="M809,739 817,741 825,743 833,744 832,751 823,750 815,749 807,747Z"/>
<path fill="#0000c4" d="M833,744 841,745 840,752 832,751Z"/>
<path fill="#0008c0" d="M857,745 865,745 865,753 857,753Z"/>
<path fill="#0014c0" d="M865,745 873,744 873,752 865,753Z"/>
<path fill="#0044c0" d="M873,744 880,744 881,751 873,752Z"/>
<path fill="#0090c0" d="M880,744 888,743 889,751 881,751Z"/>
<path fill="#00b498" d="M888,743 896,743 896,750 889,751Z"/>
<path fill="#00b834" d="M903,742 911,741 918,740 926,740 933,739 941,738 942,746 934,746 927,747 919,748 911,749 904,749Z"/>
<path fill="#00b830" d="M941,738 948,737 956,737 964,736 971,735 979,734 986,734 994,733 994,740 987,741 979,742 972,743 964,743 957,744 949,745 942,746Z"/>
<path fill="#0000a4" d="M544,118 552,117 553,125 545,126Z"/>
<path fill="#0000ac" d="M552,117 559,117 560,124 553,125Z"/>
<path fill="#0000b8" d="M559,117 567,116 568,123 560,124Z"/>
<path fill="#0054c0" d="M574,115 582,114 583,121 575,122Z"/>
<path fill="#d42000" d="M582,114 589,113 590,120 583,121Z"/>
<path fill="#e03400" d="M589,113 596,112 597,120 590,120Z"/>
<path fill="#e05000" d="M596,112 603,112 604,119 597,120Z"/>
<path fill="#e06c00" d="M603,112 610,112 609,119 604,119Z"/>
<path fill="#e08800" d="M610,112 615,112 614,120 609,119Z"/>
<path fill="#e0a400" d="M615,112 620,113 617,121 614,120Z"/>
<path fill="#e0bc00" d="M620,113 623,115 620,122 617,121Z"/>
<path fill="#e4d000" d="M623,115 627,118 622,123 620,122Z"/>
<path fill="#e8e800" d="M630,121 633,125 626,128 624,126ZM625,147 625,153 617,152 617,147ZM624,164 623,170 615,169 616,163Z"/>
<path fill="#ecf800" d="M635,129 636,134 638,140 630,141 629,136 628,132ZM638,159 637,166 630,165 631,159Z"/>
<path fill="#ecff00" d="M638,140 638,146 631,147 630,141Z"/>
<path fill="#ecfc00" d="M638,146 638,153 638,159 631,159 631,153 631,147Z"/>
<path fill="#e0fc00" d="M637,166 636,173 629,171 630,165Z"/>
<path fill="#d4fc00" d="M636,173 634,179 627,178 629,171Z"/>
<path fill="#c8ff00" d="M634,179 633,186 625,184 627,178Z"/>
<path fill="#acff00" d="M633,186 630,193 623,191 625,184Z"/>
<path fill="#94ff00" d="M630,193 628,199 621,197 623,191Z"/>
<path fill="#5cff00" d="M611,239 607,245 601,242 604,235Z"/>
<path fill="#54fc04" d="M607,245 604,252 597,249 601,242Z"/>
<path fill="#48fc0c" d="M604,252 600,259 594,255 597,249Z"/>
<path fill="#40fc10" d="M600,259 597,265 590,262 594,255Z"/>
<path fill="#34f814" d="M597,265 593,272 587,268 590,262Z"/>
<path fill="#2cf81c" d="M593,272 590,278 583,275 587,268Z"/>
<path fill="#20f820" d="M590,278 586,285 580,281 583,275Z"/>
<path fill="#18f424" d="M586,285 582,292 576,288 580,281Z"/>
<path fill="#14f424" d="M582,292 579,299 572,295 576,288Z"/>
<path fill="#10f424" d="M579,299 575,306 571,313 565,310 568,303 572,295Z"/>
<path fill="#0cf428" d="M571,313 568,321 565,328 558,326 561,318 565,310Z"/>
<path fill="#08f428" d="M565,328 563,336 556,334 558,326Z"/>
<path fill="#04f428" d="M563,336 560,344 558,352 557,360 549,359 551,350 553,342 556,334Z"/>
<path fill="#04f42c" d="M557,360 555,368 554,376 546,375 548,367 549,359Z"/>
<path fill="#00f430" d="M554,376 553,385 553,393 545,392 546,384 546,375Z"/>
<path fill="#00f434" d="M553,393 552,401 545,401 545,392Z"/>
<path fill="#00f438" d="M552,401 553,409 545,410 545,401Z"/>
<path fill="#00f838" d="M553,409 553,418 546,418 545,410Z"/>
<path fill="#00f848" d="M554,426 555,434 548,435 547,427Z"/>
<path fill="#00f850" d="M555,434 557,442 549,444 548,435Z"/>
<path fill="#00fc54" d="M557,442 558,450 551,452 549,444Z"/>
<path fill="#00fc5c" d="M558,450 560,458 553,460 551,452Z"/>
<path fill="#00ff7c" d="M568,481 570,488 563,491 560,483Z"/>
<path fill="#00ff94" d="M574,496 577,503 570,507 567,499Z"/>
<path fill="#00ffc4" d="M590,525 594,532 588,536 583,529Z"/>
<path fill="#00fce4" d="M603,544 608,550 602,555 597,549Z"/>
<path fill="#00f8e0" d="M608,550 613,556 607,561 602,555Z"/>
<path fill="#00f4e0" d="M613,556 617,562 611,567 607,561Z"/>
<path fill="#00f4dc" d="M617,562 622,568 616,573 611,567Z"/>
<path fill="#00f0d8" d="M622,568 627,574 621,579 616,573Z"/>
<path fill="#00e8dc" d="M627,574 631,580 625,585 621,579Z"/>
<path fill="#00e4e0" d="M631,580 636,586 630,591 625,585Z"/>
<path fill="#00dce4" d="M636,586 640,592 634,597 630,591Z"/>
<path fill="#00d8e8" d="M640,592 644,599 638,603 634,597Z"/>
<path fill="#00d0ec" d="M644,599 649,605 643,609 638,603Z"/>
<path fill="#00ccf0" d="M649,605 654,611 648,615 643,609Z"/>
<path fill="#00c4f4" d="M654,611 658,617 652,621 648,615Z"/>
<path fill="#00c0f4" d="M658,617 663,623 657,628 652,621Z"/>
<path fill="#00b8f4" d="M663,623 668,629 662,634 657,628Z"/>
<path fill="#00b0f4" d="M668,629 672,635 667,640 662,634Z"/>
<path fill="#00acf8" d="M672,635 677,641 671,646 667,640Z"/>
<path fill="#00a4f8" d="M677,641 682,647 676,652 671,646Z"/>
<path fill="#009cf8" d="M682,647 687,653 681,657 676,652Z"/>
<path fill="#0098f8" d="M687,653 691,659 686,663 681,657Z"/>
<path fill="#0090f8" d="M691,659 696,665 690,669 686,663Z"/>
<path fill="#0088f8" d="M696,665 701,671 695,675 690,669Z"/>
<path fill="#0084f8" d="M701,671 706,677 700,682 695,675Z"/>
<path fill="#0078f8" d="M706,677 711,683 705,688 700,682Z"/>
<path fill="#0064f4" d="M716,689 722,695 716,701 711,694Z"/>
<path fill="#0058f4" d="M722,695 728,701 723,707 716,701Z"/>
<path fill="#004cf0" d="M728,701 734,706 729,712 723,707Z"/>
<path fill="#0040f0" d="M734,706 740,712 735,718 729,712Z"/>
<path fill="#0038f0" d="M740,712 747,717 742,723 735,718Z"/>
<path fill="#0024e0" d="M754,721 761,726 757,733 750,728Z"/>
<path fill="#001cd8" d="M761,726 769,730 765,737 757,733Z"/>
<path fill="#0014cc" d="M769,730 776,733 773,740 765,737Z"/>
<path fill="#000cc4" d="M776,733 784,736 781,743 773,740Z"/>
<path fill="#0008bc" d="M784,736 792,739 789,746 781,743Z"/>
<path fill="#0004b8" d="M792,739 800,742 797,749 789,746Z"/>
<path fill="#0004b0" d="M800,742 807,744 806,751 797,749Z"/>
<path fill="#0004a8" d="M807,744 816,746 824,747 823,755 814,753 806,751Z"/>
<path fill="#0000a8" d="M824,747 832,748 841,749 849,750 857,750 857,757 849,757 840,757 831,756 823,755ZM567,120 575,119 576,126 568,127Z"/>
<path fill="#0008a4" d="M857,750 865,750 865,757 857,757Z"/>
<path fill="#0010a4" d="M865,750 873,749 874,757 865,757Z"/>
<path fill="#0040a4" d="M873,749 881,749 881,756 874,757Z"/>
<path fill="#0080a4" d="M881,749 888,748 889,755 881,756Z"/>
<path fill="#009880" d="M888,748 896,747 897,755 889,755Z"/>
<path fill="#009c44" d="M896,747 904,746 904,754 897,755Z"/>
<path fill="#000084" d="M545,123 552,122 553,129 546,130ZM849,754 857,754 857,762 849,762ZM568,129 576,128 577,135 569,136Z"/>
<path fill="#000090" d="M552,122 560,121 561,128 553,129Z"/>
<path fill="#00009c" d="M560,121 567,120 568,127 561,128Z"/>
<path fill="#0038ac" d="M575,119 582,118 583,125 576,126ZM712,705 718,711 713,717 707,711Z"/>
<path fill="#c01800" d="M582,118 590,117 590,125 583,125Z"/>
<path fill="#cc2800" d="M590,117 597,117 597,124 590,125Z"/>
<path fill="#cc4000" d="M597,117 603,116 604,124 597,124Z"/>
<path fill="#cc5800" d="M603,116 610,116 609,124 604,124Z"/>
<path fill="#cc7400" d="M610,116 615,117 613,124 609,124Z"/>
<path fill="#d09000" d="M615,117 618,118 616,125 613,124Z"/>
<path fill="#d0a800" d="M618,118 621,119 617,126 616,125Z"/>
<path fill="#d8bc00" d="M621,119 624,121 619,127 617,126Z"/>
<path fill="#dcc800" d="M624,121 626,124 621,128 619,127Z"/>
<path fill="#e4d400" d="M626,124 629,127 622,131 621,128Z"/>
<path fill="#f0f400" d="M631,131 632,135 625,137 624,133ZM633,159 633,165 625,164 626,158Z"/>
<path fill="#f0f800" d="M632,135 633,141 626,142 625,137ZM634,153 633,159 626,158 626,153Z"/>
<path fill="#f0ff00" d="M633,141 634,147 626,147 626,142Z"/>
<path fill="#f0fc00" d="M634,147 634,153 626,153 626,147Z"/>
<path fill="#d0f800" d="M630,178 628,185 621,183 623,177Z"/>
<path fill="#bcf800" d="M628,185 626,191 619,189 621,183Z"/>
<path fill="#a4f800" d="M626,191 624,198 617,195 619,189Z"/>
<path fill="#90f800" d="M624,198 622,205 615,202 617,195Z"/>
<path fill="#8cf800" d="M622,205 619,211 612,208 615,202Z"/>
<path fill="#84f800" d="M619,211 616,218 609,215 612,208Z"/>
<path fill="#80f800" d="M616,218 613,224 606,221 609,215Z"/>
<path fill="#7cf800" d="M613,224 610,230 603,227 606,221Z"/>
<path fill="#78f800" d="M610,230 607,237 600,233 603,227Z"/>
<path fill="#74f800" d="M607,237 603,243 596,240 600,233Z"/>
<path fill="#68f804" d="M603,243 600,250 593,246 596,240Z"/>
<path fill="#5cf808" d="M600,250 596,257 590,253 593,246Z"/>
<path fill="#50f40c" d="M596,257 593,263 586,260 590,253Z"/>
<path fill="#44f410" d="M593,263 589,270 583,266 586,260Z"/>
<path fill="#38f414" d="M589,270 586,276 579,273 583,266Z"/>
<path fill="#2cf418" d="M586,276 582,283 576,279 579,273Z"/>
<path fill="#20f01c" d="M582,283 578,290 572,286 576,279Z"/>
<path fill="#1cf01c" d="M578,290 575,297 571,304 564,301 568,293 572,286Z"/>
<path fill="#18f01c" d="M571,304 567,311 561,308 564,301Z"/>
<path fill="#14f01c" d="M567,311 564,319 557,316 561,308Z"/>
<path fill="#10f01c" d="M564,319 561,327 554,324 557,316Z"/>
<path fill="#0cf01c" d="M561,327 558,335 551,333 554,324Z"/>
<path fill="#08f01c" d="M558,335 556,343 549,341 551,333Z"/>
<path fill="#04f01c" d="M556,343 554,351 552,359 545,358 547,349 549,341Z"/>
<path fill="#04f020" d="M552,359 551,368 543,366 545,358Z"/>
<path fill="#04f024" d="M551,368 549,376 549,384 541,384 542,375 543,366Z"/>
<path fill="#04f028" d="M549,384 548,393 540,392 541,384Z"/>
<path fill="#00f028" d="M548,393 548,401 540,401 540,392Z"/>
<path fill="#00f02c" d="M548,401 548,410 540,410 540,401Z"/>
<path fill="#00f030" d="M548,410 549,418 541,419 540,410Z"/>
<path fill="#00f034" d="M549,418 549,426 542,427 541,419Z"/>
<path fill="#00f038" d="M549,426 551,435 543,436 542,427Z"/>
<path fill="#00f440" d="M551,435 552,443 545,444 543,436Z"/>
<path fill="#00f444" d="M552,443 554,451 546,453 545,444Z"/>
<path fill="#00f44c" d="M554,451 556,459 548,461 546,453Z"/>
<path fill="#00f450" d="M556,459 558,467 551,469 548,461Z"/>
<path fill="#00f858" d="M558,467 560,475 553,477 551,469Z"/>
<path fill="#00f85c" d="M560,475 563,482 556,485 553,477Z"/>
<path fill="#00f864" d="M563,482 566,490 559,493 556,485Z"/>
<path fill="#00f86c" d="M566,490 570,498 563,501 559,493Z"/>
<path fill="#00f480" d="M573,506 577,513 570,517 566,509Z"/>
<path fill="#00f08c" d="M577,513 581,520 575,524 570,517Z"/>
<path fill="#00f094" d="M581,520 586,527 579,531 575,524Z"/>
<path fill="#00eca0" d="M586,527 590,534 584,538 579,531Z"/>
<path fill="#00eca8" d="M590,534 595,541 589,545 584,538Z"/>
<path fill="#00ecb0" d="M595,541 600,547 594,552 589,545Z"/>
<path fill="#00ecbc" d="M600,547 604,553 598,558 594,552Z"/>
<path fill="#00e8bc" d="M604,553 609,559 614,565 608,570 603,564 598,558Z"/>
<path fill="#00e4b8" d="M618,571 623,577 617,582 612,576Z"/>
<path fill="#00e0c0" d="M623,577 627,583 621,588 617,582Z"/>
<path fill="#00dcc4" d="M627,583 632,589 626,594 621,588Z"/>
<path fill="#00d8cc" d="M632,589 636,595 630,600 626,594Z"/>
<path fill="#00d4d0" d="M636,595 641,601 635,606 630,600Z"/>
<path fill="#00d0d8" d="M641,601 645,607 639,612 635,606Z"/>
<path fill="#00ccdc" d="M645,607 650,614 644,618 639,612Z"/>
<path fill="#00c8e0" d="M650,614 655,620 649,624 644,618Z"/>
<path fill="#00c4e8" d="M655,620 659,626 653,630 649,624Z"/>
<path fill="#00bce8" d="M659,626 664,632 658,636 653,630Z"/>
<path fill="#00b4e8" d="M664,632 669,638 663,642 658,636Z"/>
<path fill="#00ace8" d="M669,638 674,644 668,648 663,642Z"/>
<path fill="#00a4e8" d="M674,644 678,650 673,654 668,648Z"/>
<path fill="#009ce8" d="M678,650 683,656 677,660 673,654Z"/>
<path fill="#0094e8" d="M683,656 688,662 682,666 677,660Z"/>
<path fill="#008ce8" d="M688,662 693,668 687,672 682,666Z"/>
<path fill="#0084e8" d="M693,668 697,674 692,678 687,672Z"/>
<path fill="#007ce8" d="M697,674 702,680 697,685 692,678Z"/>
<path fill="#0070e8" d="M702,680 707,686 702,691 697,685Z"/>
<path fill="#0064e4" d="M707,686 713,692 707,698 702,691Z"/>
<path fill="#0058e4" d="M713,692 719,699 713,704 707,698Z"/>
<path fill="#0050e0" d="M719,699 725,704 719,710 713,704Z"/>
<path fill="#0044e0" d="M725,704 731,710 726,716 719,710Z"/>
<path fill="#0038dc" d="M731,710 737,715 732,722 726,716Z"/>
<path fill="#0030dc" d="M737,715 744,721 740,727 732,722Z"/>
<path fill="#0028d4" d="M744,721 751,725 747,732 740,727Z"/>
<path fill="#0020c8" d="M751,725 759,730 755,737 747,732Z"/>
<path fill="#0018c0" d="M759,730 767,734 763,741 755,737Z"/>
<path fill="#0010b8" d="M767,734 774,737 771,744 763,741Z"/>
<path fill="#000cac" d="M774,737 782,741 779,748 771,744Z"/>
<path fill="#0004a4" d="M782,741 790,743 788,751 779,748Z"/>
<path fill="#00049c" d="M790,743 798,746 796,753 788,751Z"/>
<path fill="#000494" d="M798,746 806,748 804,756 796,753Z"/>
<path fill="#00048c" d="M806,748 815,750 823,752 822,759 813,758 804,756Z"/>
<path fill="#000088" d="M823,752 832,753 840,754 849,754 849,762 840,761 831,761 822,759ZM568,124 575,123 576,131 569,132Z"/>
<path fill="#000484" d="M857,754 865,754 866,762 857,762ZM781,745 789,748 786,755 778,752Z"/>
<path fill="#001084" d="M865,754 873,754 874,761 866,762Z"/>
<path fill="#003484" d="M873,754 881,753 882,761 874,761Z"/>
<path fill="#006884" d="M881,753 889,752 890,760 882,761Z"/>
<path fill="#007860" d="M889,752 896,752 897,759 890,760Z"/>
<path fill="#007c30" d="M896,752 904,751 905,759 897,759Z"/>
<path fill="#007c24" d="M904,751 912,750 919,750 927,749 934,748 942,747 943,755 935,756 927,756 920,757 912,758 905,759Z"/>
<path fill="#007c20" d="M942,747 949,747 957,746 964,745 972,744 980,744 987,743 995,742 995,750 988,750 980,751 973,752 965,752 958,753 950,754 943,755Z"/>
<path fill="#000058" d="M545,127 553,126 554,133 546,134ZM546,131 553,131 554,138 547,139ZM813,759 822,761 831,762 840,763 848,763 857,764 857,771 848,771 839,771 830,770 821,768 811,767Z"/>
<path fill="#000068" d="M553,126 560,125 561,132 554,133ZM553,131 561,130 562,137 554,138Z"/>
<path fill="#000078" d="M560,125 568,124 569,132 561,132ZM561,130 568,129 569,136 562,137Z"/>
<path fill="#001c94" d="M575,123 583,123 584,130 576,131Z"/>
<path fill="#a40c00" d="M583,123 590,122 591,129 584,130Z"/>
<path fill="#b41c00" d="M590,122 597,121 598,128 591,129Z"/>
<path fill="#b42c00" d="M597,121 604,121 604,128 598,128Z"/>
<path fill="#b44400" d="M604,121 609,121 609,128 604,128Z"/>
<path fill="#b45c00" d="M609,121 614,121 613,129 609,128Z"/>
<path fill="#b87800" d="M614,121 617,122 614,129 613,129Z"/>
<path fill="#bc9000" d="M617,122 619,123 615,130 614,129Z"/>
<path fill="#c4a400" d="M619,123 621,125 616,130 615,130Z"/>
<path fill="#ccb400" d="M621,125 623,127 617,131 616,130ZM621,131 622,134 615,136 614,135Z"/>
<path fill="#d8c000" d="M623,127 625,129 618,133 617,131Z"/>
<path fill="#e0d000" d="M625,129 626,132 619,135 618,133Z"/>
<path fill="#e8e000" d="M626,132 628,136 620,138 619,135Z"/>
<path fill="#f0f000" d="M628,136 629,141 621,142 620,138ZM629,159 628,165 621,164 622,158Z"/>
<path fill="#f4fc00" d="M629,141 629,147 629,153 622,152 622,147 621,142Z"/>
<path fill="#f4f400" d="M629,153 629,159 622,158 622,152Z"/>
<path fill="#b8f400" d="M622,190 620,196 613,194 615,188Z"/>
<path fill="#a4f400" d="M620,196 617,203 610,200 613,194Z"/>
<path fill="#a0f400" d="M617,203 615,209 608,207 610,200Z"/>
<path fill="#9cf400" d="M615,209 612,216 605,213 608,207Z"/>
<path fill="#98f400" d="M612,216 609,222 602,219 605,213Z"/>
<path fill="#94f400" d="M609,222 606,228 599,225 602,219Z"/>
<path fill="#8cf400" d="M606,228 602,235 596,231 599,225Z"/>
<path fill="#88f400" d="M602,235 599,241 592,238 596,231Z"/>
<path fill="#7cf404" d="M599,241 596,248 589,244 592,238Z"/>
<path fill="#70f004" d="M596,248 592,254 586,251 589,244Z"/>
<path fill="#60f008" d="M592,254 589,261 582,257 586,251Z"/>
<path fill="#54f008" d="M589,261 585,268 579,264 582,257Z"/>
<path fill="#48f00c" d="M585,268 582,274 575,270 579,264Z"/>
<path fill="#38ec0c" d="M582,274 578,280 572,277 575,270Z"/>
<path fill="#2cec10" d="M578,280 574,287 568,284 572,277Z"/>
<path fill="#28ec10" d="M574,287 571,295 564,291 568,284Z"/>
<path fill="#24ec10" d="M571,295 567,302 560,299 564,291Z"/>
<path fill="#20ec10" d="M567,302 563,310 557,307 560,299Z"/>
<path fill="#18ec10" d="M563,310 560,317 553,315 557,307Z"/>
<path fill="#14ec10" d="M560,317 557,325 550,323 553,315Z"/>
<path fill="#10ec10" d="M557,325 554,334 547,331 550,323Z"/>
<path fill="#0ce810" d="M554,334 552,342 544,340 547,331Z"/>
<path fill="#08e810" d="M552,342 549,350 542,348 544,340Z"/>
<path fill="#08e814" d="M549,350 548,358 540,357 542,348Z"/>
<path fill="#04e814" d="M548,358 546,367 539,366 540,357Z"/>
<path fill="#04e818" d="M546,367 545,375 537,374 539,366Z"/>
<path fill="#04e81c" d="M545,375 544,384 543,392 536,392 536,383 537,374Z"/>
<path fill="#00e820" d="M543,392 543,401 543,410 536,410 536,401 536,392Z"/>
<path fill="#00e824" d="M543,410 544,418 536,419 536,410Z"/>
<path fill="#00e828" d="M544,418 545,427 537,428 536,419Z"/>
<path fill="#00e82c" d="M545,427 546,436 539,437 537,428Z"/>
<path fill="#00e834" d="M546,436 548,444 540,445 539,437Z"/>
<path fill="#00e438" d="M548,444 549,452 542,454 540,445Z"/>
<path fill="#00e444" d="M554,468 556,476 549,478 546,470Z"/>
<path fill="#00e44c" d="M556,476 559,484 551,487 549,478Z"/>
<path fill="#00e050" d="M559,484 562,492 555,495 551,487Z"/>
<path fill="#00e058" d="M562,492 565,500 558,503 555,495Z"/>
<path fill="#00dc60" d="M565,500 569,508 562,511 558,503Z"/>
<path fill="#00dc64" d="M569,508 573,515 566,519 562,511Z"/>
<path fill="#00dc6c" d="M573,515 577,523 571,526 566,519Z"/>
<path fill="#00d874" d="M577,523 582,530 575,534 571,526Z"/>
<path fill="#00d87c" d="M582,530 586,537 580,541 575,534Z"/>
<path fill="#00d484" d="M586,537 591,543 585,548 580,541Z"/>
<path fill="#00d48c" d="M591,543 596,550 590,554 585,548Z"/>
<path fill="#00d494" d="M596,550 601,556 605,562 599,566 595,560 590,554Z"/>
<path fill="#00d098" d="M605,562 610,568 615,574 609,578 604,572 599,566Z"/>
<path fill="#00d09c" d="M615,574 619,580 613,584 609,578Z"/>
<path fill="#00cca0" d="M619,580 624,586 618,590 613,584Z"/>
<path fill="#00c8a8" d="M624,586 628,592 622,596 618,590Z"/>
<path fill="#00c4ac" d="M628,592 633,598 627,602 622,596Z"/>
<path fill="#00c0b4" d="M633,598 637,604 631,608 627,602Z"/>
<path fill="#00bcbc" d="M637,604 642,610 636,615 631,608Z"/>
<path fill="#00b8c0" d="M642,610 646,616 640,621 636,615Z"/>
<path fill="#00b4c4" d="M646,616 651,622 645,627 640,621Z"/>
<path fill="#00b0cc" d="M651,622 656,629 650,633 645,627Z"/>
<path fill="#00accc" d="M656,629 661,635 655,639 650,633Z"/>
<path fill="#00a4cc" d="M661,635 665,641 660,645 655,639Z"/>
<path fill="#009ccc" d="M665,641 670,647 664,651 660,645Z"/>
<path fill="#0094d0" d="M670,647 675,653 669,657 664,651Z"/>
<path fill="#008cd0" d="M675,653 680,658 674,663 669,657Z"/>
<path fill="#0084d0" d="M680,658 684,664 679,669 674,663Z"/>
<path fill="#007cd4" d="M684,664 689,670 683,675 679,669Z"/>
<path fill="#0078d4" d="M689,670 694,676 688,681 683,675Z"/>
<path fill="#0070d4" d="M694,676 699,683 693,687 688,681Z"/>
<path fill="#0064d4" d="M699,683 704,689 698,694 693,687Z"/>
<path fill="#005cd0" d="M704,689 709,696 704,701 698,694Z"/>
<path fill="#0044cc" d="M715,702 721,708 716,714 710,707Z"/>
<path fill="#003cc8" d="M721,708 728,714 723,720 716,714Z"/>
<path fill="#0030c4" d="M728,714 734,719 730,725 723,720Z"/>
<path fill="#0028c4" d="M734,719 741,724 737,731 730,725Z"/>
<path fill="#0020b8" d="M741,724 749,729 744,736 737,731Z"/>
<path fill="#0018b0" d="M749,729 756,734 753,741 744,736Z"/>
<path fill="#0014a4" d="M756,734 765,738 761,745 753,741Z"/>
<path fill="#00109c" d="M765,738 773,742 769,749 761,745Z"/>
<path fill="#000890" d="M773,742 781,745 778,752 769,749Z"/>
<path fill="#00047c" d="M789,748 797,750 795,758 786,755Z"/>
<path fill="#000470" d="M797,750 805,753 803,760 795,758ZM779,749 787,752 785,759 776,756Z"/>
<path fill="#000468" d="M805,753 814,755 812,762 803,760ZM787,752 795,755 793,762 785,759Z"/>
<path fill="#000064" d="M814,755 822,756 831,758 830,765 821,764 812,762Z"/>
<path fill="#000060" d="M831,758 840,758 849,759 857,759 857,767 848,766 839,766 830,765Z"/>
<path fill="#00045c" d="M857,759 865,759 866,766 857,767Z"/>
<path fill="#000c5c" d="M865,759 874,758 874,766 866,766Z"/>
<path fill="#00285c" d="M874,758 882,758 882,765 874,766Z"/>
<path fill="#004c5c" d="M882,758 889,757 890,765 882,765Z"/>
<path fill="#005440" d="M889,757 897,756 898,764 890,765Z"/>
<path fill="#005420" d="M897,756 904,756 905,763 898,764Z"/>
<path fill="#005418" d="M904,756 912,755 920,754 927,753 935,753 942,752 950,751 957,750 965,750 972,749 973,756 966,757 958,758 951,759 943,759 935,760 928,761 920,762 913,762 905,763ZM905,760 912,760 920,759 928,758 935,757 943,756 950,756 958,755 965,754 966,762 959,762 951,763 943,764 936,765 928,766 921,766 913,767 906,768Z"/>
<path fill="#005414" d="M972,749 980,748 988,747 995,747 996,754 988,755 981,756 973,756ZM965,754 973,753 980,753 988,752 995,751 996,759 989,759 981,760 974,761 966,762Z"/>
<path fill="#000894" d="M576,128 583,127 584,134 577,135Z"/>
<path fill="#a40400" d="M583,127 591,126 591,133 584,134Z"/>
<path fill="#b41400" d="M591,126 598,126 598,133 591,133Z"/>
<path fill="#b42400" d="M598,126 604,125 604,133 598,133Z"/>
<path fill="#b43800" d="M604,125 609,125 609,133 604,133Z"/>
<path fill="#b45400" d="M609,125 613,126 612,133 609,133Z"/>
<path fill="#b46c00" d="M613,126 615,126 613,134 612,133Z"/>
<path fill="#b48000" d="M615,126 617,127 613,134 613,134Z"/>
<path fill="#b09000" d="M617,127 618,128 613,134 613,134Z"/>
<path fill="#b49400" d="M618,128 619,129 613,134 613,134Z"/>
<path fill="#c0a400" d="M619,129 621,131 614,135 613,134Z"/>
<path fill="#d4c800" d="M622,134 623,137 616,139 615,136Z"/>
<path fill="#e0d800" d="M623,137 624,142 617,143 616,139Z"/>
<path fill="#ece800" d="M625,153 624,158 617,158 617,152Z"/>
<path fill="#ece400" d="M624,158 624,164 616,163 617,158Z"/>
<path fill="#e4ec00" d="M623,170 621,176 614,175 615,169Z"/>
<path fill="#dcec00" d="M621,176 619,182 612,180 614,175Z"/>
<path fill="#c8ec00" d="M618,189 615,195 608,192 610,186Z"/>
<path fill="#bcec00" d="M615,195 613,201 606,199 608,192Z"/>
<path fill="#b8ec00" d="M613,201 611,208 604,205 606,199Z"/>
<path fill="#b4ec00" d="M611,208 608,214 601,211 604,205Z"/>
<path fill="#acec00" d="M608,214 605,220 598,217 601,211Z"/>
<path fill="#a8ec00" d="M605,220 602,226 595,223 598,217Z"/>
<path fill="#a4ec00" d="M602,226 598,233 592,229 595,223Z"/>
<path fill="#a0ec00" d="M598,233 595,239 588,236 592,229Z"/>
<path fill="#90ec00" d="M595,239 592,246 585,242 588,236Z"/>
<path fill="#80ec00" d="M592,246 588,252 581,249 585,242Z"/>
<path fill="#74ec04" d="M588,252 585,259 578,255 581,249Z"/>
<path fill="#64ec04" d="M585,259 581,265 575,262 578,255Z"/>
<path fill="#54e804" d="M581,265 578,272 571,268 575,262Z"/>
<path fill="#44e804" d="M578,272 574,278 568,275 571,268Z"/>
<path fill="#38e804" d="M574,278 570,285 564,282 568,275Z"/>
<path fill="#30e804" d="M570,285 567,292 560,289 564,282Z"/>
<path fill="#2ce804" d="M567,292 563,300 556,297 560,289Z"/>
<path fill="#24e804" d="M563,300 559,308 552,305 556,297Z"/>
<path fill="#20e404" d="M559,308 556,316 549,313 552,305Z"/>
<path fill="#1ce404" d="M556,316 553,324 546,321 549,313Z"/>
<path fill="#14e404" d="M553,324 550,332 543,330 546,321Z"/>
<path fill="#10e404" d="M550,332 547,341 540,339 543,330Z"/>
<path fill="#08e404" d="M547,341 545,349 538,347 540,339Z"/>
<path fill="#08e408" d="M545,349 543,358 536,356 538,347Z"/>
<path fill="#08e00c" d="M543,358 542,366 534,365 536,356Z"/>
<path fill="#04e00c" d="M542,366 540,375 533,374 534,365Z"/>
<path fill="#04dc10" d="M540,375 539,383 532,383 533,374Z"/>
<path fill="#04d810" d="M539,383 539,392 531,392 532,383Z"/>
<path fill="#04d814" d="M539,392 539,401 531,401 531,392Z"/>
<path fill="#00d414" d="M539,401 539,410 531,410 531,401Z"/>
<path fill="#00d018" d="M539,410 539,419 532,420 531,410Z"/>
<path fill="#00d01c" d="M539,419 540,428 533,429 532,420Z"/>
<path fill="#00cc20" d="M540,428 541,436 534,438 533,429Z"/>
<path fill="#00cc24" d="M541,436 543,445 536,446 534,438Z"/>
<path fill="#00cc28" d="M543,445 545,453 537,455 536,446Z"/>
<path fill="#00c82c" d="M545,453 547,461 539,463 537,455Z"/>
<path fill="#00c830" d="M547,461 549,469 542,472 539,463Z"/>
<path fill="#00c434" d="M549,469 552,477 544,480 542,472Z"/>
<path fill="#00c438" d="M552,477 554,486 557,494 550,497 547,488 544,480Z"/>
<path fill="#00c040" d="M557,494 561,502 554,505 550,497Z"/>
<path fill="#00bc44" d="M561,502 565,510 558,513 554,505Z"/>
<path fill="#00bc4c" d="M565,510 569,517 562,521 558,513Z"/>
<path fill="#00b858" d="M573,525 578,532 571,536 567,529Z"/>
<path fill="#00b45c" d="M578,532 583,539 576,544 571,536Z"/>
<path fill="#00b064" d="M583,539 587,546 581,551 576,544Z"/>
<path fill="#00b068" d="M587,546 592,553 586,557 581,551Z"/>
<path fill="#00b06c" d="M592,553 597,559 591,563 586,557Z"/>
<path fill="#00ac70" d="M597,559 602,565 596,569 591,563Z"/>
<path fill="#00ac74" d="M602,565 606,571 600,575 596,569Z"/>
<path fill="#00ac78" d="M606,571 611,577 616,583 610,587 605,581 600,575Z"/>
<path fill="#00a880" d="M616,583 620,589 614,593 610,587Z"/>
<path fill="#00a888" d="M620,589 625,595 619,599 614,593Z"/>
<path fill="#00a48c" d="M625,595 629,601 623,605 619,599Z"/>
<path fill="#00a094" d="M629,601 633,607 627,611 623,605Z"/>
<path fill="#00a098" d="M633,607 638,613 632,617 627,611Z"/>
<path fill="#009ca0" d="M638,613 643,619 637,623 632,617Z"/>
<path fill="#009ca4" d="M643,619 647,625 641,630 637,623Z"/>
<path fill="#0098a8" d="M647,625 652,631 646,636 641,630Z"/>
<path fill="#0090ac" d="M652,631 657,637 651,642 646,636Z"/>
<path fill="#008cac" d="M657,637 662,644 656,648 651,642Z"/>
<path fill="#0084ac" d="M662,644 667,649 661,654 656,648Z"/>
<path fill="#0080b0" d="M667,649 671,655 666,660 661,654Z"/>
<path fill="#0078b0" d="M671,655 676,661 670,666 666,660Z"/>
<path fill="#0074b4" d="M676,661 681,667 675,672 670,666Z"/>
<path fill="#006cb4" d="M681,667 686,673 680,678 675,672Z"/>
<path fill="#0064b4" d="M686,673 690,679 685,684 680,678Z"/>
<path fill="#0060b8" d="M690,679 695,686 690,690 685,684Z"/>
<path fill="#0058b4" d="M695,686 700,692 695,697 690,690Z"/>
<path fill="#004cb4" d="M700,692 706,699 700,704 695,697Z"/>
<path fill="#0044b0" d="M706,699 712,705 707,711 700,704Z"/>
<path fill="#0030a8" d="M718,711 725,717 720,723 713,717Z"/>
<path fill="#0028a8" d="M725,717 731,723 727,729 720,723Z"/>
<path fill="#001ca4" d="M731,723 739,728 734,735 727,729Z"/>
<path fill="#00189c" d="M739,728 746,733 742,740 734,735Z"/>
<path fill="#001494" d="M746,733 754,738 750,745 742,740Z"/>
<path fill="#00108c" d="M754,738 762,742 759,749 750,745Z"/>
<path fill="#000c80" d="M762,742 771,746 768,753 759,749Z"/>
<path fill="#000878" d="M771,746 779,749 776,756 768,753Z"/>
<path fill="#000460" d="M795,755 804,757 802,764 793,762Z"/>
<path fill="#000458" d="M804,757 813,759 811,767 802,764ZM857,764 866,763 866,771 857,771Z"/>
<path fill="#000c58" d="M866,763 874,763 875,771 866,771Z"/>
<path fill="#002c58" d="M874,763 882,762 883,770 875,771Z"/>
<path fill="#005058" d="M882,762 890,762 890,769 883,770Z"/>
<path fill="#00543c" d="M890,762 897,761 898,769 890,769Z"/>
<path fill="#00541c" d="M897,761 905,760 906,768 898,769Z"/></g></g>
<path d="M38.5,782.2L54.8,778.7L71.0,791.4L60.6,801.3L49.0,799.6Z" fill="#9b9ca1"/>
<path d="M55.9,775.8L41.0,777.2" stroke="#e00000" stroke-width="4.6"/><ellipse cx="40.6" cy="777.6" rx="3.6" ry="4.4" fill="#d00000"/>
<path d="M56.5,776.5L74.5,786.6" stroke="#00e000" stroke-width="4.8"/><path d="M79.8,789.4L72.3,791.8L76.3,782.2Z" fill="#00c000"/>
<path d="M55.7,776.2L47.2,798.5" stroke="#1010e0" stroke-width="4.8"/><path d="M44.6,804.0L42.0,796.4L51.6,799.6Z" fill="#0000c0"/>
<g font-family="Liberation Sans, sans-serif" font-size="16.5">
<text transform="translate(30.2,779.8) scale(0.66,1)" fill="#f00000">X</text>
<text transform="translate(80.5,795.2) scale(0.62,1)" fill="#00f000">Y</text>
<text transform="translate(37.0,811.6) scale(0.68,1)" fill="#0000f0">Z</text>
</g>
<g font-family="Liberation Sans, sans-serif" font-size="20.2" fill="#000">
<text x="854.4" y="231.9" font-size="19.8">von Mises (N/m^2)</text>
<defs><linearGradient id="lg" x1="0" y1="0" x2="0" y2="1">
<stop offset="0" stop-color="#ff0000"/>
<stop offset="0.25" stop-color="#ffff00"/>
<stop offset="0.5" stop-color="#00ff00"/>
<stop offset="0.75" stop-color="#00ffff"/>
<stop offset="1" stop-color="#0000ff"/>
</linearGradient></defs>
<rect x="857" y="272.5" width="26" height="280.2" fill="url(#lg)" stroke="#f00" stroke-width="1"/>
<line x1="857" x2="883" y1="295.9" y2="295.9" stroke="#f00" stroke-width="1"/>
<line x1="857" x2="883" y1="319.2" y2="319.2" stroke="#f00" stroke-width="1"/>
<line x1="857" x2="883" y1="342.6" y2="342.6" stroke="#f00" stroke-width="1"/>
<line x1="857" x2="883" y1="365.9" y2="365.9" stroke="#f00" stroke-width="1"/>
<line x1="857" x2="883" y1="389.2" y2="389.2" stroke="#f00" stroke-width="1"/>
<line x1="857" x2="883" y1="412.6" y2="412.6" stroke="#f00" stroke-width="1"/>
<line x1="857" x2="883" y1="436.0" y2="436.0" stroke="#f00" stroke-width="1"/>
<line x1="857" x2="883" y1="459.3" y2="459.3" stroke="#f00" stroke-width="1"/>
<line x1="857" x2="883" y1="482.6" y2="482.6" stroke="#f00" stroke-width="1"/>
<line x1="857" x2="883" y1="506.0" y2="506.0" stroke="#f00" stroke-width="1"/>
<line x1="857" x2="883" y1="529.4" y2="529.4" stroke="#f00" stroke-width="1"/>
<text x="889.8" y="277.8">343025.3</text>
<text x="889.8" y="301.2">314439.8</text>
<text x="889.8" y="324.5">285854.4</text>
<text x="889.8" y="347.9">257268.9</text>
<text x="889.8" y="371.2">228683.5</text>
<text x="889.8" y="394.6">200098.1</text>
<text x="889.8" y="417.9">171512.6</text>
<text x="889.8" y="441.2">142927.2</text>
<text x="889.8" y="464.6">114341.8</text>
<text x="889.8" y="488.0">85756.3</text>
<text x="889.8" y="511.3">57170.9</text>
<text x="889.8" y="534.7">28585.4</text>
<text x="889.8" y="558.0">0.0</text>
<text x="861" y="580.5">Yield strength: 27574200.0</text>
<path d="M831,579H850" stroke="#f00" stroke-width="1.3" fill="none"/><path d="M857,579l-9,-5v10z" fill="#f00"/>
</g>
</svg>
<div class="a" style="left:0px;top:971px;width:1394px;height:1px;background:#fff"></div>
<div class="a" style="left:0px;top:972px;width:1394px;height:1px;background:#a9a58f"></div>
<div class="a" style="left:0px;top:973px;width:1394px;height:25px;background:linear-gradient(#f3f1e6 0,#ece9d8 20%,#ece9d8 80%,#e4e6d4 92%,#efe3c8 100%)"></div>
<div class="a" style="left:285px;top:137px;width:1108px;height:1px;background:#6d6a5b"></div>
<div class="a" style="left:285px;top:970px;width:1109px;height:1px;background:#fff"></div>
<div class="a" style="left:1392.5px;top:137px;width:1.5px;height:834px;background:#fff"></div>
<svg class="a" style="left:607px;top:977px" width="16" height="16" viewBox="0 0 16 16" ><rect x="0.5" y="0.5" width="15" height="15" rx="1.5" fill="#f07820" stroke="#b85010" stroke-width="1"/><rect x="0" y="0" width="16" height="16" fill="none" stroke="#fff" stroke-opacity="0.4"/><circle cx="4.5" cy="11.5" r="1.6" fill="#fff"/><path d="M3,7.5 A5.5,5.5 0 0 1 8.5,13 M3,4 A9,9 0 0 1 12,13" fill="none" stroke="#fff" stroke-width="1.700"/></svg>
<div class="a" style="left:633px;top:978.5px;font-size:12px;line-height:14px;white-space:nowrap;color:#303030;text-decoration:underline">Available: SolidWorks 2009 SP2.1 is available for download</div>
<div class="a" style="left:1044px;top:975px;width:1px;height:21px;background:#c5c2b2"></div>
<div class="a" style="left:1045px;top:975px;width:1px;height:21px;background:#fff"></div>
<div class="a" style="left:1216px;top:975px;width:1px;height:21px;background:#c5c2b2"></div>
<div class="a" style="left:1217px;top:975px;width:1px;height:21px;background:#fff"></div>
<div class="a" style="left:1245px;top:975px;width:1px;height:21px;background:#c5c2b2"></div>
<div class="a" style="left:1246px;top:975px;width:1px;height:21px;background:#fff"></div>
<div class="a" style="left:1272.5px;top:975px;width:1px;height:21px;background:#c5c2b2"></div>
<div class="a" style="left:1273.5px;top:975px;width:1px;height:21px;background:#fff"></div>
<svg class="a" style="left:1050px;top:976px" width="42" height="19" viewBox="0 0 42 19" ><path d="M1,9.5H14" stroke="#303030" stroke-width="3.2"/><path d="M1.5,9.5H12" stroke="#fff" stroke-width="1.2"/><path d="M11.5,4.5L18,9.5L11.5,14.5Z" fill="#fff" stroke="#303030" stroke-width="1.2"/><path d="M20.5,0.5V18.5" stroke="#8aa020" stroke-width="2.4"/><text transform="translate(24.3,17) scale(0.860,1)" font-family="Liberation Sans, sans-serif" font-weight="bold" font-size="29" fill="#a8c020" stroke="#303800" stroke-width="1">e</text></svg>
<div class="a" style="left:1096px;top:976px;font-size:15.5px;font-weight:bold;line-height:18px;white-space:nowrap;letter-spacing:2.3px;color:#1a1a1a">DRAWINGS<span style="font-size:9px;letter-spacing:0;position:relative;top:-5px;left:-1px">®</span></div>
<svg class="a" style="left:1222px;top:976px" width="19" height="19" viewBox="0 0 19 19" ><path d="M1.5,17.5 L3.5,12.5 L14,2 L17.5,5 L7,15.5 Z" fill="#f8d020" stroke="#806008" stroke-width="0.8"/><path d="M14,2 L17.5,5 L16,6.5 L12.6,3.4Z" fill="#f0a0b0"/><path d="M1.5,17.5 L3.5,12.5 L7,15.5 Z" fill="#585858"/></svg>
<svg class="a" style="left:1249px;top:976px" width="20" height="19" viewBox="0 0 20 19" ><rect x="5" y="5" width="12" height="9" fill="#f0d020" stroke="#102060" stroke-width="1"/><path d="M2,14H12" stroke="#102060" stroke-width="2"/><circle cx="11" cy="9.5" r="2.5" fill="#a0d0f8" stroke="#102060" stroke-width="0.8"/><circle cx="9.5" cy="9.5" r="8" fill="none" stroke="#e81010" stroke-width="2.2"/><path d="M4,4L15.5,15.5" stroke="#e81010" stroke-width="2.2"/></svg>
<svg class="a" style="left:1380px;top:984px" width="12" height="12" viewBox="0 0 12 12" ><rect x="10" y="2" width="2" height="2" fill="#fff"/><rect x="9" y="1" width="2" height="2" fill="#b8b4a0"/><rect x="6" y="6" width="2" height="2" fill="#fff"/><rect x="5" y="5" width="2" height="2" fill="#b8b4a0"/><rect x="10" y="6" width="2" height="2" fill="#fff"/><rect x="9" y="5" width="2" height="2" fill="#b8b4a0"/><rect x="2" y="10" width="2" height="2" fill="#fff"/><rect x="1" y="9" width="2" height="2" fill="#b8b4a0"/><rect x="6" y="10" width="2" height="2" fill="#fff"/><rect x="5" y="9" width="2" height="2" fill="#b8b4a0"/><rect x="10" y="10" width="2" height="2" fill="#fff"/><rect x="9" y="9" width="2" height="2" fill="#b8b4a0"/></svg>
</div>
</body></html>
